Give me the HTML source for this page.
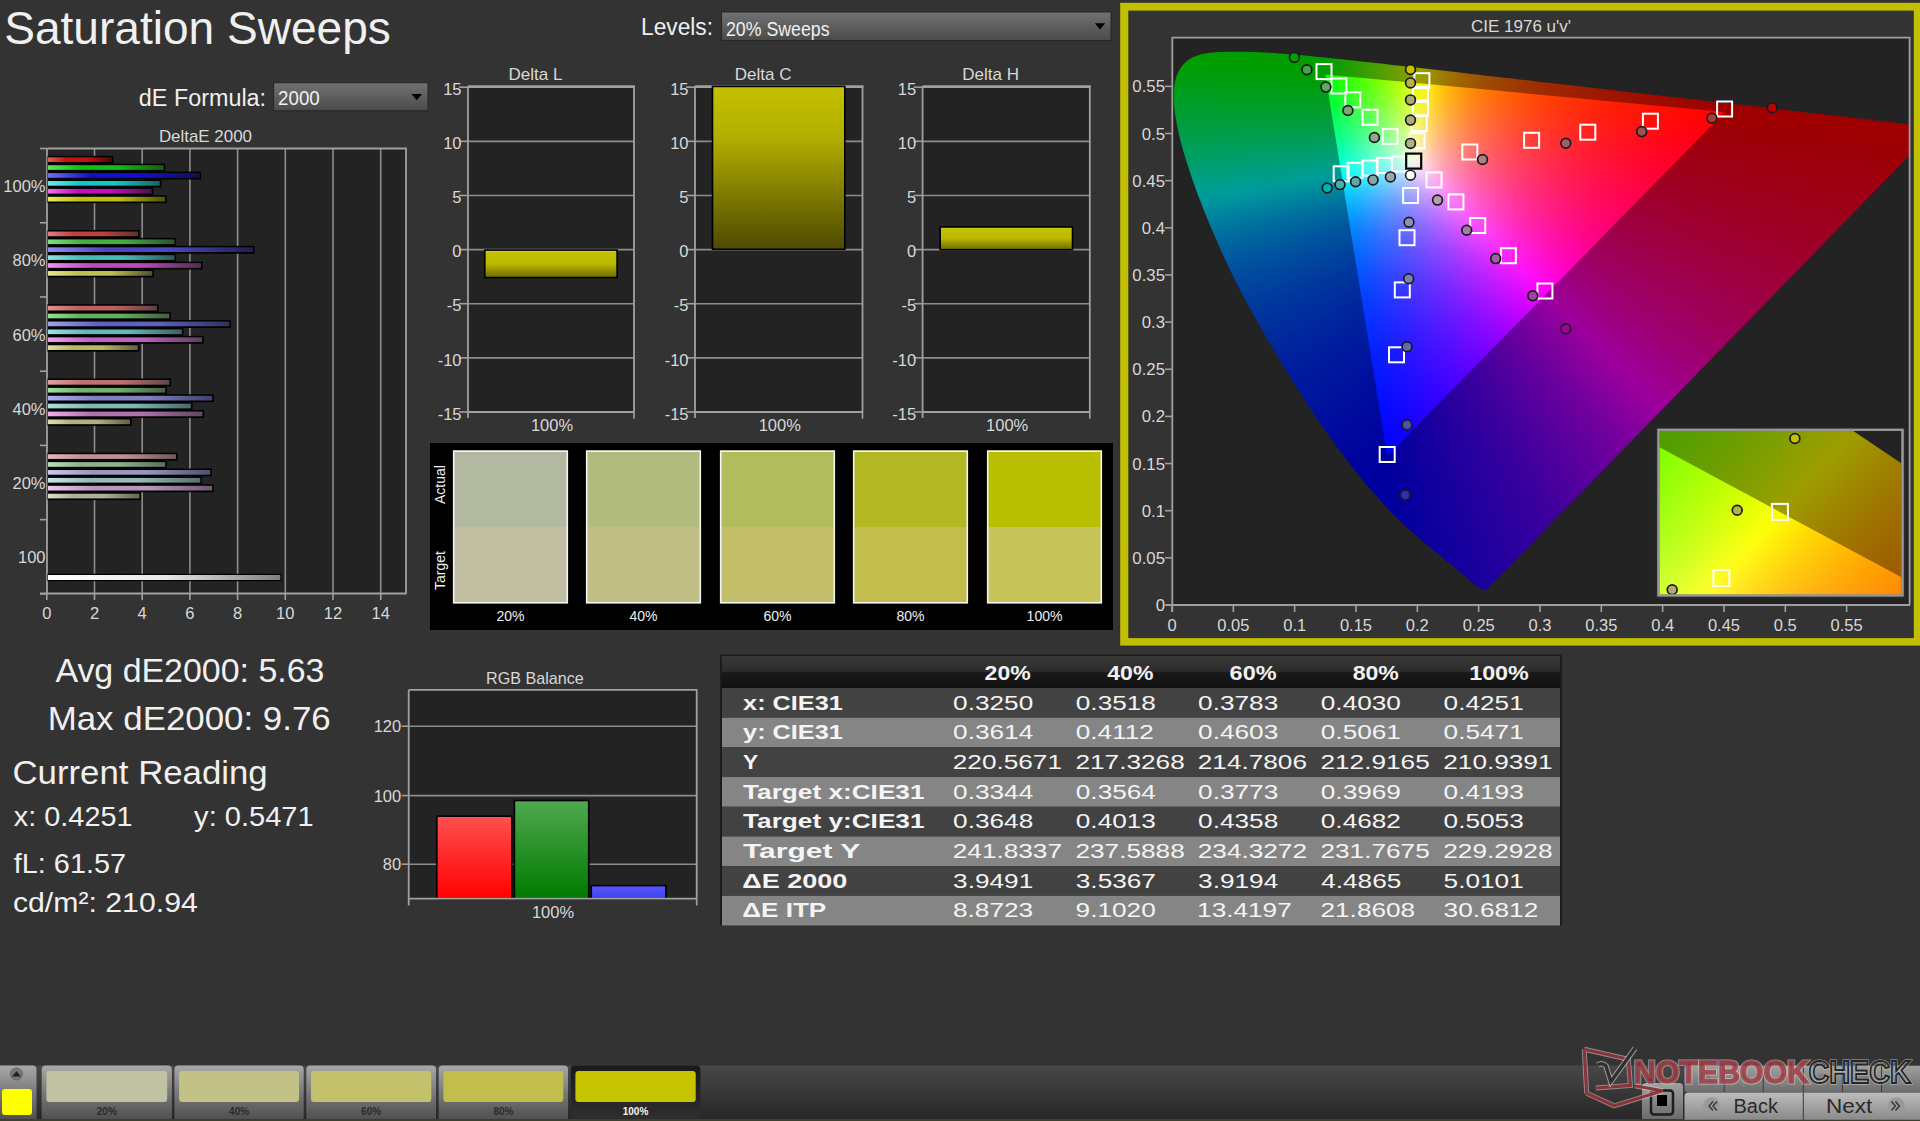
<!DOCTYPE html><html><head><meta charset="utf-8"><title>Saturation Sweeps</title><style>.c16 rect{width:16px;height:16px}.c12 rect{width:12px;height:12px}.c10 rect{width:10px;height:10px}html,body{margin:0;padding:0;background:#333333;width:1920px;height:1121px;overflow:hidden}body{font-family:"Liberation Sans", sans-serif}</style></head><body><svg width="1920" height="1121" viewBox="0 0 1920 1121" style='position:absolute;left:0;top:0;font-family:"Liberation Sans", sans-serif'><defs><linearGradient id="gDrop" x1="0" y1="0" x2="0" y2="1"><stop offset="0" stop-color="#727272"/><stop offset="1" stop-color="#4a4a4a"/></linearGradient><linearGradient id="gb00"><stop offset="0" stop-color="#e06060"/><stop offset="0.28" stop-color="#c81010"/><stop offset="0.6" stop-color="#c81010"/><stop offset="1" stop-color="#500505"/></linearGradient><linearGradient id="gb01"><stop offset="0" stop-color="#60e060"/><stop offset="0.28" stop-color="#10c010"/><stop offset="0.6" stop-color="#10c010"/><stop offset="1" stop-color="#106010"/></linearGradient><linearGradient id="gb02"><stop offset="0" stop-color="#7070f0"/><stop offset="0.28" stop-color="#1010d0"/><stop offset="0.6" stop-color="#1010d0"/><stop offset="1" stop-color="#101050"/></linearGradient><linearGradient id="gb03"><stop offset="0" stop-color="#70e8e8"/><stop offset="0.28" stop-color="#10c8c8"/><stop offset="0.6" stop-color="#10c8c8"/><stop offset="1" stop-color="#106868"/></linearGradient><linearGradient id="gb04"><stop offset="0" stop-color="#f070f0"/><stop offset="0.28" stop-color="#c010c0"/><stop offset="0.6" stop-color="#c010c0"/><stop offset="1" stop-color="#501050"/></linearGradient><linearGradient id="gb05"><stop offset="0" stop-color="#e8e860"/><stop offset="0.28" stop-color="#c0c010"/><stop offset="0.6" stop-color="#c0c010"/><stop offset="1" stop-color="#505010"/></linearGradient><linearGradient id="gb10"><stop offset="0" stop-color="#e08080"/><stop offset="0.28" stop-color="#c04040"/><stop offset="0.6" stop-color="#c04040"/><stop offset="1" stop-color="#603030"/></linearGradient><linearGradient id="gb11"><stop offset="0" stop-color="#80e080"/><stop offset="0.28" stop-color="#40b040"/><stop offset="0.6" stop-color="#40b040"/><stop offset="1" stop-color="#305030"/></linearGradient><linearGradient id="gb12"><stop offset="0" stop-color="#9090f0"/><stop offset="0.28" stop-color="#4848c0"/><stop offset="0.6" stop-color="#4848c0"/><stop offset="1" stop-color="#202050"/></linearGradient><linearGradient id="gb13"><stop offset="0" stop-color="#90e0e0"/><stop offset="0.28" stop-color="#48b8b8"/><stop offset="0.6" stop-color="#48b8b8"/><stop offset="1" stop-color="#305858"/></linearGradient><linearGradient id="gb14"><stop offset="0" stop-color="#f090f0"/><stop offset="0.28" stop-color="#c048c0"/><stop offset="0.6" stop-color="#c048c0"/><stop offset="1" stop-color="#503050"/></linearGradient><linearGradient id="gb15"><stop offset="0" stop-color="#e8e890"/><stop offset="0.28" stop-color="#c0c050"/><stop offset="0.6" stop-color="#c0c050"/><stop offset="1" stop-color="#505030"/></linearGradient><linearGradient id="gb20"><stop offset="0" stop-color="#e09090"/><stop offset="0.28" stop-color="#c06060"/><stop offset="0.6" stop-color="#c06060"/><stop offset="1" stop-color="#604040"/></linearGradient><linearGradient id="gb21"><stop offset="0" stop-color="#90e090"/><stop offset="0.28" stop-color="#60b060"/><stop offset="0.6" stop-color="#60b060"/><stop offset="1" stop-color="#406040"/></linearGradient><linearGradient id="gb22"><stop offset="0" stop-color="#a0a0f0"/><stop offset="0.28" stop-color="#6060c0"/><stop offset="0.6" stop-color="#6060c0"/><stop offset="1" stop-color="#303060"/></linearGradient><linearGradient id="gb23"><stop offset="0" stop-color="#a0e0e0"/><stop offset="0.28" stop-color="#60b8b8"/><stop offset="0.6" stop-color="#60b8b8"/><stop offset="1" stop-color="#406060"/></linearGradient><linearGradient id="gb24"><stop offset="0" stop-color="#f0a0f0"/><stop offset="0.28" stop-color="#c060c0"/><stop offset="0.6" stop-color="#c060c0"/><stop offset="1" stop-color="#604060"/></linearGradient><linearGradient id="gb25"><stop offset="0" stop-color="#e0e0a0"/><stop offset="0.28" stop-color="#b8b860"/><stop offset="0.6" stop-color="#b8b860"/><stop offset="1" stop-color="#606040"/></linearGradient><linearGradient id="gb30"><stop offset="0" stop-color="#e0a0a0"/><stop offset="0.28" stop-color="#c07070"/><stop offset="0.6" stop-color="#c07070"/><stop offset="1" stop-color="#604848"/></linearGradient><linearGradient id="gb31"><stop offset="0" stop-color="#a0e0a0"/><stop offset="0.28" stop-color="#70b070"/><stop offset="0.6" stop-color="#70b070"/><stop offset="1" stop-color="#486048"/></linearGradient><linearGradient id="gb32"><stop offset="0" stop-color="#b0b0f0"/><stop offset="0.28" stop-color="#8080c0"/><stop offset="0.6" stop-color="#8080c0"/><stop offset="1" stop-color="#404070"/></linearGradient><linearGradient id="gb33"><stop offset="0" stop-color="#b0e0e0"/><stop offset="0.28" stop-color="#80b8b8"/><stop offset="0.6" stop-color="#80b8b8"/><stop offset="1" stop-color="#486868"/></linearGradient><linearGradient id="gb34"><stop offset="0" stop-color="#f0b0f0"/><stop offset="0.28" stop-color="#b070b0"/><stop offset="0.6" stop-color="#b070b0"/><stop offset="1" stop-color="#604860"/></linearGradient><linearGradient id="gb35"><stop offset="0" stop-color="#e0e0b0"/><stop offset="0.28" stop-color="#b0b080"/><stop offset="0.6" stop-color="#b0b080"/><stop offset="1" stop-color="#606048"/></linearGradient><linearGradient id="gb40"><stop offset="0" stop-color="#e0b8b8"/><stop offset="0.28" stop-color="#c09090"/><stop offset="0.6" stop-color="#c09090"/><stop offset="1" stop-color="#705858"/></linearGradient><linearGradient id="gb41"><stop offset="0" stop-color="#b8e0b8"/><stop offset="0.28" stop-color="#90b090"/><stop offset="0.6" stop-color="#90b090"/><stop offset="1" stop-color="#587058"/></linearGradient><linearGradient id="gb42"><stop offset="0" stop-color="#c8c8f0"/><stop offset="0.28" stop-color="#9898c0"/><stop offset="0.6" stop-color="#9898c0"/><stop offset="1" stop-color="#505070"/></linearGradient><linearGradient id="gb43"><stop offset="0" stop-color="#c8e8e8"/><stop offset="0.28" stop-color="#98b8b8"/><stop offset="0.6" stop-color="#98b8b8"/><stop offset="1" stop-color="#587070"/></linearGradient><linearGradient id="gb44"><stop offset="0" stop-color="#f0c8f0"/><stop offset="0.28" stop-color="#b898b8"/><stop offset="0.6" stop-color="#b898b8"/><stop offset="1" stop-color="#705870"/></linearGradient><linearGradient id="gb45"><stop offset="0" stop-color="#e0e0c8"/><stop offset="0.28" stop-color="#b0b098"/><stop offset="0.6" stop-color="#b0b098"/><stop offset="1" stop-color="#686850"/></linearGradient><linearGradient id="gbw"><stop offset="0" stop-color="#ffffff"/><stop offset="0.5" stop-color="#e8e8e8"/><stop offset="1" stop-color="#808080"/></linearGradient><linearGradient id="gy" x1="0" y1="0" x2="0" y2="1"><stop offset="0" stop-color="#dcd850"/><stop offset="0.1" stop-color="#c4c000"/><stop offset="0.5" stop-color="#bcb800"/><stop offset="1" stop-color="#6c6800"/></linearGradient><linearGradient id="gyc" x1="0" y1="0" x2="0" y2="1"><stop offset="0" stop-color="#c4c000"/><stop offset="0.3" stop-color="#b4b000"/><stop offset="1" stop-color="#4e4a00"/></linearGradient><clipPath id="cLoc"><polygon points="1487.0,589.4 1487.0,589.4 1486.9,589.4 1486.9,589.4 1486.8,589.5 1486.8,589.5 1486.7,589.6 1486.6,589.6 1486.5,589.7 1486.4,589.7 1486.3,589.7 1486.2,589.8 1486.1,589.8 1486.0,589.9 1485.9,589.9 1485.8,589.9 1485.6,590.0 1485.5,590.0 1485.4,590.0 1485.2,590.0 1485.0,590.1 1484.9,590.1 1484.7,590.1 1484.5,590.0 1484.2,590.0 1483.9,589.9 1483.6,589.8 1483.3,589.8 1482.9,589.7 1482.5,589.5 1482.1,589.4 1481.7,589.3 1481.4,589.1 1481.0,588.9 1480.6,588.7 1480.2,588.4 1479.9,588.2 1479.5,587.9 1479.1,587.6 1478.6,587.3 1478.2,587.0 1477.7,586.6 1477.2,586.3 1476.7,585.9 1476.2,585.5 1475.7,585.1 1475.1,584.6 1474.5,584.2 1473.9,583.7 1473.2,583.1 1472.5,582.6 1471.8,582.0 1471.0,581.4 1470.2,580.7 1469.4,580.1 1468.6,579.4 1467.7,578.6 1466.8,577.9 1465.9,577.1 1465.0,576.3 1464.0,575.5 1463.0,574.7 1462.0,573.8 1461.0,572.9 1459.9,572.0 1458.8,571.1 1457.6,570.1 1456.4,569.1 1455.2,568.1 1454.0,567.1 1452.7,566.1 1451.4,565.0 1450.0,563.8 1448.5,562.6 1447.0,561.4 1445.5,560.1 1443.9,558.8 1442.2,557.5 1440.5,556.1 1438.8,554.6 1437.0,553.2 1435.2,551.7 1433.4,550.2 1431.5,548.7 1429.6,547.1 1427.6,545.5 1425.6,543.8 1423.6,542.0 1421.4,540.1 1419.2,538.2 1417.0,536.3 1414.7,534.2 1412.3,532.1 1409.9,530.0 1407.4,527.7 1404.9,525.3 1402.3,522.9 1399.6,520.3 1397.0,517.7 1394.2,515.1 1391.5,512.4 1388.6,509.5 1385.6,506.4 1382.5,503.0 1379.3,499.4 1375.8,495.6 1372.3,491.5 1368.6,487.2 1364.8,482.7 1360.9,478.0 1356.9,473.1 1352.9,468.0 1348.7,462.6 1344.5,457.1 1340.2,451.3 1335.7,445.3 1331.2,439.1 1326.7,432.7 1322.0,426.0 1317.4,419.3 1312.7,412.3 1307.9,405.1 1303.1,397.6 1298.2,389.9 1293.2,382.0 1288.3,374.0 1283.3,365.9 1278.4,357.8 1273.6,349.6 1268.8,341.4 1263.9,333.0 1259.0,324.5 1254.2,315.9 1249.4,307.3 1244.7,298.7 1240.2,290.2 1235.9,281.8 1231.8,273.5 1227.8,265.2 1223.9,256.8 1220.1,248.5 1216.5,240.3 1213.0,232.3 1209.7,224.4 1206.5,216.8 1203.5,209.3 1200.7,202.0 1197.9,194.9 1195.4,187.8 1192.9,181.0 1190.7,174.4 1188.6,168.0 1186.6,161.9 1184.8,156.1 1183.1,150.5 1181.7,145.1 1180.3,139.9 1179.1,134.9 1178.1,130.2 1177.1,125.6 1176.3,121.2 1175.5,117.0 1174.9,113.0 1174.5,109.2 1174.1,105.7 1173.9,102.2 1173.8,99.0 1173.7,95.8 1173.8,92.8 1173.9,89.9 1174.2,87.1 1174.5,84.5 1175.0,82.0 1175.5,79.7 1176.2,77.5 1176.9,75.3 1177.7,73.3 1178.6,71.4 1179.6,69.6 1180.6,67.9 1181.8,66.3 1183.0,64.8 1184.3,63.4 1185.7,62.1 1187.1,60.9 1188.5,59.8 1190.1,58.8 1191.7,57.9 1193.3,57.1 1195.0,56.4 1196.8,55.8 1198.5,55.2 1200.4,54.6 1202.2,54.1 1204.1,53.7 1206.0,53.4 1208.0,53.1 1210.0,52.8 1212.1,52.6 1214.1,52.4 1216.2,52.3 1218.3,52.1 1220.4,52.0 1222.5,51.9 1224.7,51.8 1226.9,51.8 1229.0,51.7 1231.2,51.7 1233.4,51.7 1235.6,51.7 1237.7,51.7 1239.9,51.7 1242.1,51.7 1244.3,51.7 1246.5,51.8 1248.7,51.8 1250.9,51.9 1253.2,52.0 1255.4,52.1 1257.6,52.2 1259.9,52.3 1262.2,52.4 1264.5,52.5 1266.8,52.6 1269.2,52.8 1271.6,52.9 1274.0,53.1 1276.4,53.2 1278.8,53.4 1281.3,53.6 1283.8,53.8 1286.3,54.0 1288.9,54.2 1291.4,54.4 1294.0,54.6 1296.7,54.8 1299.3,55.1 1302.0,55.3 1304.7,55.6 1307.5,55.8 1310.2,56.1 1313.1,56.4 1315.9,56.7 1318.8,56.9 1321.7,57.2 1324.6,57.5 1327.6,57.8 1330.7,58.2 1333.7,58.5 1336.9,58.8 1340.0,59.1 1343.2,59.5 1346.4,59.8 1349.7,60.2 1353.0,60.5 1356.4,60.9 1359.8,61.3 1363.2,61.7 1366.7,62.0 1370.3,62.4 1373.8,62.8 1377.5,63.2 1381.1,63.6 1384.8,64.1 1388.6,64.5 1392.4,64.9 1396.3,65.4 1400.2,65.8 1404.2,66.2 1408.2,66.7 1412.2,67.2 1416.3,67.6 1420.5,68.1 1424.7,68.6 1429.0,69.1 1433.3,69.5 1437.6,70.0 1442.0,70.6 1446.5,71.1 1451.0,71.6 1455.6,72.1 1460.2,72.6 1464.8,73.2 1469.5,73.7 1474.3,74.3 1479.1,74.8 1483.9,75.4 1488.8,75.9 1493.8,76.5 1498.8,77.1 1503.8,77.7 1508.9,78.2 1514.1,78.8 1519.3,79.4 1524.5,80.0 1529.7,80.6 1535.0,81.2 1540.4,81.9 1545.7,82.5 1551.2,83.1 1556.6,83.7 1562.1,84.3 1567.6,85.0 1573.1,85.6 1578.7,86.2 1584.2,86.9 1589.8,87.5 1595.4,88.2 1601.1,88.8 1606.7,89.5 1612.3,90.1 1617.9,90.8 1623.5,91.4 1629.0,92.1 1634.4,92.7 1639.9,93.3 1645.3,93.9 1650.8,94.6 1656.2,95.2 1661.5,95.8 1666.9,96.4 1672.3,97.0 1677.6,97.6 1683.0,98.3 1688.4,98.9 1693.7,99.5 1698.9,100.1 1704.1,100.7 1709.2,101.3 1714.2,101.8 1719.1,102.4 1724.0,103.0 1728.9,103.5 1733.6,104.0 1738.3,104.6 1742.9,105.1 1747.5,105.6 1752.0,106.1 1756.4,106.6 1760.7,107.1 1765.0,107.6 1769.2,108.1 1773.3,108.6 1777.4,109.1 1781.3,109.5 1785.1,110.0 1788.5,110.4 1791.8,110.7 1795.1,111.1 1798.4,111.5 1802.0,111.9 1805.8,112.4 1810.1,112.9 1815.0,113.4 1820.4,114.0 1826.2,114.7 1832.1,115.4 1838.1,116.1 1844.0,116.7 1849.5,117.4 1854.6,118.0 1859.3,118.5 1863.8,119.0 1868.2,119.5 1872.3,120.0 1876.3,120.5 1880.1,120.9 1883.7,121.3 1887.2,121.7 1890.4,122.1 1893.5,122.4 1896.4,122.8 1899.1,123.1 1901.7,123.4 1904.1,123.6 1906.4,123.9 1908.6,124.1 1910.6,124.4 1912.4,124.6 1914.1,124.8 1915.6,124.9 1917.0,125.1 1918.4,125.3 1919.9,125.4 1921.3,125.6 1922.8,125.8 1924.3,126.0 1925.9,126.1 1927.4,126.3 1928.8,126.5 1930.1,126.6 1931.3,126.8 1932.4,126.9 1933.3,127.0 1934.0,127.1 1934.7,127.1 1935.2,127.2 1935.7,127.3 1936.0,127.3 1936.4,127.3 1936.7,127.4"/></clipPath><clipPath id="cTri"><polygon points="1724.8,111.9 1325.3,74.6 1387.2,456.1"/></clipPath><clipPath id="cPlot"><rect x="1173.5" y="38.5" width="735.5" height="565.5"/></clipPath><filter id="fb16" x="-5%" y="-5%" width="110%" height="110%" color-interpolation-filters="sRGB"><feGaussianBlur stdDeviation="6"/></filter><filter id="fb12" x="-5%" y="-5%" width="110%" height="110%" color-interpolation-filters="sRGB"><feGaussianBlur stdDeviation="6"/></filter><clipPath id="cIn"><rect x="1659.5" y="430.8" width="242" height="163.6"/></clipPath><clipPath id="cInLoc"><polygon points="1142.4,1392.4 1141.6,1392.6 1140.3,1392.8 1138.5,1392.8 1135.4,1392.3 1132.5,1391.0 1128.9,1389.1 1123.7,1386.1 1117.2,1382.0 1108.6,1376.9 1096.9,1370.1 1082.3,1361.3 1064.1,1349.0 1042.0,1331.0 1012.4,1299.5 974.7,1248.5 927.1,1167.7 868.3,1048.0 807.8,882.0 750.8,674.9 711.0,453.6 699.9,248.8 725.9,80.9 790.9,-27.9 882.9,-66.3 986.6,-52.9 1091.9,-17.2 1191.3,25.6 1286.7,73.7 1380.8,126.5 1473.9,182.8 1566.7,241.6 1659.8,302.1 1752.3,363.5 1844.4,425.0 1934.6,485.7 2022.2,544.8 2106.2,601.5 2185.2,654.6 2257.3,703.4 2319.9,745.6 2375.0,782.8 2420.8,813.4 2458.0,838.6 2487.6,858.6 2530.3,887.3 2559.1,906.8 2577.3,919.0 2587.7,926.0 2596.6,932.0 2599.9,934.3"/></clipPath><clipPath id="cInTri"><polygon points="2353.7,820.4 1469.7,345.2 1079.7,1295.6"/></clipPath><linearGradient id="gr" x1="0" y1="0" x2="0" y2="1"><stop offset="0" stop-color="#ff5050"/><stop offset="1" stop-color="#ff0000"/></linearGradient><linearGradient id="gg" x1="0" y1="0" x2="0" y2="1"><stop offset="0" stop-color="#50a850"/><stop offset="1" stop-color="#007a00"/></linearGradient><linearGradient id="gbb" x1="0" y1="0" x2="0" y2="1"><stop offset="0" stop-color="#5a5aff"/><stop offset="1" stop-color="#4040f0"/></linearGradient><linearGradient id="gth" x1="0" y1="0" x2="0" y2="1"><stop offset="0" stop-color="#383838"/><stop offset="0.48" stop-color="#2c2c2c"/><stop offset="0.52" stop-color="#181818"/><stop offset="1" stop-color="#121212"/></linearGradient><linearGradient id="gbar" x1="0" y1="0" x2="0" y2="1"><stop offset="0" stop-color="#474747"/><stop offset="1" stop-color="#262626"/></linearGradient><linearGradient id="gtile" x1="0" y1="0" x2="0" y2="1"><stop offset="0" stop-color="#a8a8a8"/><stop offset="0.5" stop-color="#7a7a7a"/><stop offset="1" stop-color="#505050"/></linearGradient><linearGradient id="gtsel" x1="0" y1="0" x2="0" y2="1"><stop offset="0" stop-color="#1a1a1a"/><stop offset="1" stop-color="#2e2e2e"/></linearGradient><linearGradient id="gbtn1" x1="0" y1="0" x2="0" y2="1"><stop offset="0" stop-color="#a0a0a0"/><stop offset="1" stop-color="#6c6c6c"/></linearGradient><linearGradient id="gbtn2" x1="0" y1="0" x2="0" y2="1"><stop offset="0" stop-color="#bcbcbc"/><stop offset="1" stop-color="#8a8a8a"/></linearGradient><radialGradient id="gcirc"><stop offset="0" stop-color="#8a8a8a"/><stop offset="0.7" stop-color="#7a7a7a"/><stop offset="1" stop-color="#6a6a6a" stop-opacity="0"/></radialGradient></defs><text x="4.2" y="44.2" font-size="47" fill="#f0f0f0" textLength="386.7" lengthAdjust="spacingAndGlyphs">Saturation Sweeps</text>
<text x="641.1" y="34.8" font-size="24.2" fill="#f0f0f0" textLength="71.9" lengthAdjust="spacingAndGlyphs">Levels:</text>
<rect x="721.50" y="12.00" width="389.50" height="28.50" fill="url(#gDrop)" stroke="#262626" stroke-width="1"/>
<text x="726.0" y="35.7" font-size="19.3" fill="#f0f0f0" textLength="103.5" lengthAdjust="spacingAndGlyphs">20% Sweeps</text>
<polygon points="1094.8,23.2 1105.2,23.2 1100,29.6" fill="#000"/>
<text x="138.8" y="105.5" font-size="23.5" fill="#f0f0f0" textLength="127.3" lengthAdjust="spacingAndGlyphs">dE Formula:</text>
<rect x="273.60" y="82.80" width="154.40" height="28.00" fill="url(#gDrop)" stroke="#262626" stroke-width="1"/>
<text x="278.1" y="105.3" font-size="19.3" fill="#f0f0f0" textLength="41.6" lengthAdjust="spacingAndGlyphs">2000</text>
<polygon points="411.5,94 422,94 416.75,100.3" fill="#000"/>
<text x="158.9" y="142.3" font-size="17" fill="#d8d8d8" textLength="93.1" lengthAdjust="spacingAndGlyphs">DeltaE 2000</text>
<rect x="47.00" y="148.50" width="359.50" height="445.00" fill="#232323"/>
<line x1="94.50" y1="148.50" x2="94.50" y2="593.50" stroke="#8c8c8c" stroke-width="1.6"/>
<line x1="142.20" y1="148.50" x2="142.20" y2="593.50" stroke="#8c8c8c" stroke-width="1.6"/>
<line x1="189.90" y1="148.50" x2="189.90" y2="593.50" stroke="#8c8c8c" stroke-width="1.6"/>
<line x1="237.60" y1="148.50" x2="237.60" y2="593.50" stroke="#8c8c8c" stroke-width="1.6"/>
<line x1="285.30" y1="148.50" x2="285.30" y2="593.50" stroke="#8c8c8c" stroke-width="1.6"/>
<line x1="333.00" y1="148.50" x2="333.00" y2="593.50" stroke="#8c8c8c" stroke-width="1.6"/>
<line x1="380.70" y1="148.50" x2="380.70" y2="593.50" stroke="#8c8c8c" stroke-width="1.6"/>
<path d="M47.5,148.5 H406 V593.5" fill="none" stroke="#a0a0a0" stroke-width="1.8"/>
<line x1="47.00" y1="148.00" x2="47.00" y2="594.00" stroke="#a0a0a0" stroke-width="1.8"/>
<line x1="40.00" y1="593.50" x2="406.50" y2="593.50" stroke="#a0a0a0" stroke-width="1.8"/>
<line x1="40.00" y1="148.50" x2="47.00" y2="148.50" stroke="#a0a0a0" stroke-width="1.6"/>
<line x1="40.00" y1="222.73" x2="47.00" y2="222.73" stroke="#a0a0a0" stroke-width="1.6"/>
<line x1="40.00" y1="296.96" x2="47.00" y2="296.96" stroke="#a0a0a0" stroke-width="1.6"/>
<line x1="40.00" y1="371.19" x2="47.00" y2="371.19" stroke="#a0a0a0" stroke-width="1.6"/>
<line x1="40.00" y1="445.42" x2="47.00" y2="445.42" stroke="#a0a0a0" stroke-width="1.6"/>
<line x1="40.00" y1="519.65" x2="47.00" y2="519.65" stroke="#a0a0a0" stroke-width="1.6"/>
<line x1="40.00" y1="593.88" x2="47.00" y2="593.88" stroke="#a0a0a0" stroke-width="1.6"/>
<line x1="46.80" y1="593.50" x2="46.80" y2="600.00" stroke="#a0a0a0" stroke-width="1.6"/>
<text x="46.8" y="619.0" font-size="16.5" fill="#d8d8d8" text-anchor="middle">0</text>
<line x1="94.50" y1="593.50" x2="94.50" y2="600.00" stroke="#a0a0a0" stroke-width="1.6"/>
<text x="94.5" y="619.0" font-size="16.5" fill="#d8d8d8" text-anchor="middle">2</text>
<line x1="142.20" y1="593.50" x2="142.20" y2="600.00" stroke="#a0a0a0" stroke-width="1.6"/>
<text x="142.2" y="619.0" font-size="16.5" fill="#d8d8d8" text-anchor="middle">4</text>
<line x1="189.90" y1="593.50" x2="189.90" y2="600.00" stroke="#a0a0a0" stroke-width="1.6"/>
<text x="189.9" y="619.0" font-size="16.5" fill="#d8d8d8" text-anchor="middle">6</text>
<line x1="237.60" y1="593.50" x2="237.60" y2="600.00" stroke="#a0a0a0" stroke-width="1.6"/>
<text x="237.6" y="619.0" font-size="16.5" fill="#d8d8d8" text-anchor="middle">8</text>
<line x1="285.30" y1="593.50" x2="285.30" y2="600.00" stroke="#a0a0a0" stroke-width="1.6"/>
<text x="285.3" y="619.0" font-size="16.5" fill="#d8d8d8" text-anchor="middle">10</text>
<line x1="333.00" y1="593.50" x2="333.00" y2="600.00" stroke="#a0a0a0" stroke-width="1.6"/>
<text x="333.0" y="619.0" font-size="16.5" fill="#d8d8d8" text-anchor="middle">12</text>
<line x1="380.70" y1="593.50" x2="380.70" y2="600.00" stroke="#a0a0a0" stroke-width="1.6"/>
<text x="380.7" y="619.0" font-size="16.5" fill="#d8d8d8" text-anchor="middle">14</text>
<text x="45.5" y="192.0" font-size="16.5" fill="#d8d8d8" text-anchor="end">100%</text>
<text x="45.5" y="266.2" font-size="16.5" fill="#d8d8d8" text-anchor="end">80%</text>
<text x="45.5" y="340.6" font-size="16.5" fill="#d8d8d8" text-anchor="end">60%</text>
<text x="45.5" y="414.9" font-size="16.5" fill="#d8d8d8" text-anchor="end">40%</text>
<text x="45.5" y="489.1" font-size="16.5" fill="#d8d8d8" text-anchor="end">20%</text>
<text x="45.5" y="563.4" font-size="16.5" fill="#d8d8d8" text-anchor="end">100</text>
<rect x="47.50" y="155.80" width="65.80" height="7.90" fill="#000"/>
<rect x="48.00" y="157.30" width="63.70" height="4.70" fill="url(#gb00)"/>
<rect x="47.50" y="163.70" width="117.80" height="7.90" fill="#000"/>
<rect x="48.00" y="165.20" width="115.70" height="4.70" fill="url(#gb01)"/>
<rect x="47.50" y="171.60" width="153.70" height="7.90" fill="#000"/>
<rect x="48.00" y="173.10" width="151.60" height="4.70" fill="url(#gb02)"/>
<rect x="47.50" y="179.50" width="113.80" height="7.90" fill="#000"/>
<rect x="48.00" y="181.00" width="111.70" height="4.70" fill="url(#gb03)"/>
<rect x="47.50" y="187.40" width="105.80" height="7.90" fill="#000"/>
<rect x="48.00" y="188.90" width="103.70" height="4.70" fill="url(#gb04)"/>
<rect x="47.50" y="195.30" width="119.20" height="7.90" fill="#000"/>
<rect x="48.00" y="196.80" width="117.10" height="4.70" fill="url(#gb05)"/>
<rect x="47.50" y="230.03" width="92.10" height="7.90" fill="#000"/>
<rect x="48.00" y="231.53" width="90.00" height="4.70" fill="url(#gb10)"/>
<rect x="47.50" y="237.93" width="128.60" height="7.90" fill="#000"/>
<rect x="48.00" y="239.43" width="126.50" height="4.70" fill="url(#gb11)"/>
<rect x="47.50" y="245.83" width="207.10" height="7.90" fill="#000"/>
<rect x="48.00" y="247.33" width="205.00" height="4.70" fill="url(#gb12)"/>
<rect x="47.50" y="253.73" width="128.60" height="7.90" fill="#000"/>
<rect x="48.00" y="255.23" width="126.50" height="4.70" fill="url(#gb13)"/>
<rect x="47.50" y="261.63" width="155.10" height="7.90" fill="#000"/>
<rect x="48.00" y="263.13" width="153.00" height="4.70" fill="url(#gb14)"/>
<rect x="47.50" y="269.53" width="106.40" height="7.90" fill="#000"/>
<rect x="48.00" y="271.03" width="104.30" height="4.70" fill="url(#gb15)"/>
<rect x="47.50" y="304.26" width="111.10" height="7.90" fill="#000"/>
<rect x="48.00" y="305.76" width="109.00" height="4.70" fill="url(#gb20)"/>
<rect x="47.50" y="312.16" width="123.50" height="7.90" fill="#000"/>
<rect x="48.00" y="313.66" width="121.40" height="4.70" fill="url(#gb21)"/>
<rect x="47.50" y="320.06" width="183.50" height="7.90" fill="#000"/>
<rect x="48.00" y="321.56" width="181.40" height="4.70" fill="url(#gb22)"/>
<rect x="47.50" y="327.96" width="135.90" height="7.90" fill="#000"/>
<rect x="48.00" y="329.46" width="133.80" height="4.70" fill="url(#gb23)"/>
<rect x="47.50" y="335.86" width="156.30" height="7.90" fill="#000"/>
<rect x="48.00" y="337.36" width="154.20" height="4.70" fill="url(#gb24)"/>
<rect x="47.50" y="343.76" width="92.00" height="7.90" fill="#000"/>
<rect x="48.00" y="345.26" width="89.90" height="4.70" fill="url(#gb25)"/>
<rect x="47.50" y="378.49" width="123.50" height="7.90" fill="#000"/>
<rect x="48.00" y="379.99" width="121.40" height="4.70" fill="url(#gb30)"/>
<rect x="47.50" y="386.39" width="119.30" height="7.90" fill="#000"/>
<rect x="48.00" y="387.89" width="117.20" height="4.70" fill="url(#gb31)"/>
<rect x="47.50" y="394.29" width="166.30" height="7.90" fill="#000"/>
<rect x="48.00" y="395.79" width="164.20" height="4.70" fill="url(#gb32)"/>
<rect x="47.50" y="402.19" width="145.00" height="7.90" fill="#000"/>
<rect x="48.00" y="403.69" width="142.90" height="4.70" fill="url(#gb33)"/>
<rect x="47.50" y="410.09" width="156.60" height="7.90" fill="#000"/>
<rect x="48.00" y="411.59" width="154.50" height="4.70" fill="url(#gb34)"/>
<rect x="47.50" y="417.99" width="84.10" height="7.90" fill="#000"/>
<rect x="48.00" y="419.49" width="82.00" height="4.70" fill="url(#gb35)"/>
<rect x="47.50" y="452.72" width="130.10" height="7.90" fill="#000"/>
<rect x="48.00" y="454.22" width="128.00" height="4.70" fill="url(#gb40)"/>
<rect x="47.50" y="460.62" width="119.30" height="7.90" fill="#000"/>
<rect x="48.00" y="462.12" width="117.20" height="4.70" fill="url(#gb41)"/>
<rect x="47.50" y="468.52" width="164.40" height="7.90" fill="#000"/>
<rect x="48.00" y="470.02" width="162.30" height="4.70" fill="url(#gb42)"/>
<rect x="47.50" y="476.42" width="154.40" height="7.90" fill="#000"/>
<rect x="48.00" y="477.92" width="152.30" height="4.70" fill="url(#gb43)"/>
<rect x="47.50" y="484.32" width="166.30" height="7.90" fill="#000"/>
<rect x="48.00" y="485.82" width="164.20" height="4.70" fill="url(#gb44)"/>
<rect x="47.50" y="492.22" width="93.50" height="7.90" fill="#000"/>
<rect x="48.00" y="493.72" width="91.40" height="4.70" fill="url(#gb45)"/>
<rect x="47.50" y="573.80" width="234.00" height="7.40" fill="#000"/>
<rect x="48.00" y="575.00" width="232.30" height="5.00" fill="url(#gbw)"/>
<text x="535.5" y="80.0" font-size="17" fill="#d8d8d8" text-anchor="middle">Delta L</text>
<rect x="468.00" y="86.40" width="166.00" height="325.90" fill="#232323"/>
<line x1="459.00" y1="87.20" x2="468.00" y2="87.20" stroke="#a0a0a0" stroke-width="1.6"/>
<text x="461.5" y="94.8" font-size="16.5" fill="#d8d8d8" text-anchor="end">15</text>
<line x1="468.00" y1="141.33" x2="634.00" y2="141.33" stroke="#8c8c8c" stroke-width="1.6"/>
<line x1="459.00" y1="141.33" x2="468.00" y2="141.33" stroke="#a0a0a0" stroke-width="1.6"/>
<text x="461.5" y="148.9" font-size="16.5" fill="#d8d8d8" text-anchor="end">10</text>
<line x1="468.00" y1="195.46" x2="634.00" y2="195.46" stroke="#8c8c8c" stroke-width="1.6"/>
<line x1="459.00" y1="195.46" x2="468.00" y2="195.46" stroke="#a0a0a0" stroke-width="1.6"/>
<text x="461.5" y="203.1" font-size="16.5" fill="#d8d8d8" text-anchor="end">5</text>
<line x1="468.00" y1="249.59" x2="634.00" y2="249.59" stroke="#8c8c8c" stroke-width="1.6"/>
<line x1="459.00" y1="249.59" x2="468.00" y2="249.59" stroke="#a0a0a0" stroke-width="1.6"/>
<text x="461.5" y="257.2" font-size="16.5" fill="#d8d8d8" text-anchor="end">0</text>
<line x1="468.00" y1="303.72" x2="634.00" y2="303.72" stroke="#8c8c8c" stroke-width="1.6"/>
<line x1="459.00" y1="303.72" x2="468.00" y2="303.72" stroke="#a0a0a0" stroke-width="1.6"/>
<text x="461.5" y="311.3" font-size="16.5" fill="#d8d8d8" text-anchor="end">-5</text>
<line x1="468.00" y1="357.85" x2="634.00" y2="357.85" stroke="#8c8c8c" stroke-width="1.6"/>
<line x1="459.00" y1="357.85" x2="468.00" y2="357.85" stroke="#a0a0a0" stroke-width="1.6"/>
<text x="461.5" y="365.5" font-size="16.5" fill="#d8d8d8" text-anchor="end">-10</text>
<line x1="459.00" y1="411.98" x2="468.00" y2="411.98" stroke="#a0a0a0" stroke-width="1.6"/>
<text x="461.5" y="419.6" font-size="16.5" fill="#d8d8d8" text-anchor="end">-15</text>
<path d="M468,87.2 H634 V412" fill="none" stroke="#a0a0a0" stroke-width="1.8"/>
<line x1="468.00" y1="86.60" x2="634.90" y2="86.60" stroke="#a0a0a0" stroke-width="2.6"/>
<line x1="468.00" y1="86.00" x2="468.00" y2="418.00" stroke="#a0a0a0" stroke-width="1.8"/>
<line x1="468.00" y1="412.00" x2="634.00" y2="412.00" stroke="#a0a0a0" stroke-width="1.8"/>
<line x1="634.00" y1="412.00" x2="634.00" y2="418.80" stroke="#a0a0a0" stroke-width="1.6"/>
<text x="552.0" y="430.5" font-size="16.5" fill="#d8d8d8" text-anchor="middle">100%</text>
<rect x="484.80" y="250.10" width="132.30" height="27.50" fill="url(#gy)" stroke="#000" stroke-width="1.6"/>
<text x="763.2" y="80.0" font-size="17" fill="#d8d8d8" text-anchor="middle">Delta C</text>
<rect x="695.00" y="86.40" width="167.50" height="325.90" fill="#232323"/>
<line x1="686.00" y1="87.20" x2="695.00" y2="87.20" stroke="#a0a0a0" stroke-width="1.6"/>
<text x="688.5" y="94.8" font-size="16.5" fill="#d8d8d8" text-anchor="end">15</text>
<line x1="695.00" y1="141.33" x2="862.50" y2="141.33" stroke="#8c8c8c" stroke-width="1.6"/>
<line x1="686.00" y1="141.33" x2="695.00" y2="141.33" stroke="#a0a0a0" stroke-width="1.6"/>
<text x="688.5" y="148.9" font-size="16.5" fill="#d8d8d8" text-anchor="end">10</text>
<line x1="695.00" y1="195.46" x2="862.50" y2="195.46" stroke="#8c8c8c" stroke-width="1.6"/>
<line x1="686.00" y1="195.46" x2="695.00" y2="195.46" stroke="#a0a0a0" stroke-width="1.6"/>
<text x="688.5" y="203.1" font-size="16.5" fill="#d8d8d8" text-anchor="end">5</text>
<line x1="695.00" y1="249.59" x2="862.50" y2="249.59" stroke="#8c8c8c" stroke-width="1.6"/>
<line x1="686.00" y1="249.59" x2="695.00" y2="249.59" stroke="#a0a0a0" stroke-width="1.6"/>
<text x="688.5" y="257.2" font-size="16.5" fill="#d8d8d8" text-anchor="end">0</text>
<line x1="695.00" y1="303.72" x2="862.50" y2="303.72" stroke="#8c8c8c" stroke-width="1.6"/>
<line x1="686.00" y1="303.72" x2="695.00" y2="303.72" stroke="#a0a0a0" stroke-width="1.6"/>
<text x="688.5" y="311.3" font-size="16.5" fill="#d8d8d8" text-anchor="end">-5</text>
<line x1="695.00" y1="357.85" x2="862.50" y2="357.85" stroke="#8c8c8c" stroke-width="1.6"/>
<line x1="686.00" y1="357.85" x2="695.00" y2="357.85" stroke="#a0a0a0" stroke-width="1.6"/>
<text x="688.5" y="365.5" font-size="16.5" fill="#d8d8d8" text-anchor="end">-10</text>
<line x1="686.00" y1="411.98" x2="695.00" y2="411.98" stroke="#a0a0a0" stroke-width="1.6"/>
<text x="688.5" y="419.6" font-size="16.5" fill="#d8d8d8" text-anchor="end">-15</text>
<path d="M695,87.2 H862.5 V412" fill="none" stroke="#a0a0a0" stroke-width="1.8"/>
<line x1="695.00" y1="86.60" x2="863.40" y2="86.60" stroke="#a0a0a0" stroke-width="2.6"/>
<line x1="695.00" y1="86.00" x2="695.00" y2="418.00" stroke="#a0a0a0" stroke-width="1.8"/>
<line x1="695.00" y1="412.00" x2="862.50" y2="412.00" stroke="#a0a0a0" stroke-width="1.8"/>
<line x1="862.50" y1="412.00" x2="862.50" y2="418.80" stroke="#a0a0a0" stroke-width="1.6"/>
<text x="779.8" y="430.5" font-size="16.5" fill="#d8d8d8" text-anchor="middle">100%</text>
<rect x="712.50" y="86.40" width="132.30" height="162.90" fill="url(#gyc)" stroke="#000" stroke-width="1.6"/>
<text x="990.7" y="80.0" font-size="17" fill="#d8d8d8" text-anchor="middle">Delta H</text>
<rect x="922.60" y="86.40" width="167.20" height="325.90" fill="#232323"/>
<line x1="913.60" y1="87.20" x2="922.60" y2="87.20" stroke="#a0a0a0" stroke-width="1.6"/>
<text x="916.1" y="94.8" font-size="16.5" fill="#d8d8d8" text-anchor="end">15</text>
<line x1="922.60" y1="141.33" x2="1089.80" y2="141.33" stroke="#8c8c8c" stroke-width="1.6"/>
<line x1="913.60" y1="141.33" x2="922.60" y2="141.33" stroke="#a0a0a0" stroke-width="1.6"/>
<text x="916.1" y="148.9" font-size="16.5" fill="#d8d8d8" text-anchor="end">10</text>
<line x1="922.60" y1="195.46" x2="1089.80" y2="195.46" stroke="#8c8c8c" stroke-width="1.6"/>
<line x1="913.60" y1="195.46" x2="922.60" y2="195.46" stroke="#a0a0a0" stroke-width="1.6"/>
<text x="916.1" y="203.1" font-size="16.5" fill="#d8d8d8" text-anchor="end">5</text>
<line x1="922.60" y1="249.59" x2="1089.80" y2="249.59" stroke="#8c8c8c" stroke-width="1.6"/>
<line x1="913.60" y1="249.59" x2="922.60" y2="249.59" stroke="#a0a0a0" stroke-width="1.6"/>
<text x="916.1" y="257.2" font-size="16.5" fill="#d8d8d8" text-anchor="end">0</text>
<line x1="922.60" y1="303.72" x2="1089.80" y2="303.72" stroke="#8c8c8c" stroke-width="1.6"/>
<line x1="913.60" y1="303.72" x2="922.60" y2="303.72" stroke="#a0a0a0" stroke-width="1.6"/>
<text x="916.1" y="311.3" font-size="16.5" fill="#d8d8d8" text-anchor="end">-5</text>
<line x1="922.60" y1="357.85" x2="1089.80" y2="357.85" stroke="#8c8c8c" stroke-width="1.6"/>
<line x1="913.60" y1="357.85" x2="922.60" y2="357.85" stroke="#a0a0a0" stroke-width="1.6"/>
<text x="916.1" y="365.5" font-size="16.5" fill="#d8d8d8" text-anchor="end">-10</text>
<line x1="913.60" y1="411.98" x2="922.60" y2="411.98" stroke="#a0a0a0" stroke-width="1.6"/>
<text x="916.1" y="419.6" font-size="16.5" fill="#d8d8d8" text-anchor="end">-15</text>
<path d="M922.6,87.2 H1089.8 V412" fill="none" stroke="#a0a0a0" stroke-width="1.8"/>
<line x1="922.60" y1="86.60" x2="1090.70" y2="86.60" stroke="#a0a0a0" stroke-width="2.6"/>
<line x1="922.60" y1="86.00" x2="922.60" y2="418.00" stroke="#a0a0a0" stroke-width="1.8"/>
<line x1="922.60" y1="412.00" x2="1089.80" y2="412.00" stroke="#a0a0a0" stroke-width="1.8"/>
<line x1="1089.80" y1="412.00" x2="1089.80" y2="418.80" stroke="#a0a0a0" stroke-width="1.6"/>
<text x="1007.2" y="430.5" font-size="16.5" fill="#d8d8d8" text-anchor="middle">100%</text>
<rect x="940.20" y="227.00" width="132.30" height="22.70" fill="url(#gy)" stroke="#000" stroke-width="1.6"/>
<rect x="430.00" y="443.00" width="683.00" height="187.00" fill="#000"/>
<rect x="453.00" y="526.00" width="115.00" height="77.00" fill="#c0bfa2"/>
<rect x="453.00" y="450.50" width="115.00" height="76.50" fill="#b3b9a0"/>
<rect x="453.70" y="451.20" width="113.60" height="151.60" fill="none" stroke="#f4f4f4" stroke-width="1.6"/>
<text x="510.5" y="621.0" font-size="14" fill="#f0f0f0" text-anchor="middle">20%</text>
<rect x="586.00" y="526.00" width="115.00" height="77.00" fill="#c1bf86"/>
<rect x="586.00" y="450.50" width="115.00" height="76.50" fill="#b2bb7e"/>
<rect x="586.70" y="451.20" width="113.60" height="151.60" fill="none" stroke="#f4f4f4" stroke-width="1.6"/>
<text x="643.5" y="621.0" font-size="14" fill="#f0f0f0" text-anchor="middle">40%</text>
<rect x="720.00" y="526.00" width="115.00" height="77.00" fill="#c2be6a"/>
<rect x="720.00" y="450.50" width="115.00" height="76.50" fill="#b1bc5c"/>
<rect x="720.70" y="451.20" width="113.60" height="151.60" fill="none" stroke="#f4f4f4" stroke-width="1.6"/>
<text x="777.5" y="621.0" font-size="14" fill="#f0f0f0" text-anchor="middle">60%</text>
<rect x="853.00" y="526.00" width="115.00" height="77.00" fill="#c3bd4b"/>
<rect x="853.00" y="450.50" width="115.00" height="76.50" fill="#b2b823"/>
<rect x="853.70" y="451.20" width="113.60" height="151.60" fill="none" stroke="#f4f4f4" stroke-width="1.6"/>
<text x="910.5" y="621.0" font-size="14" fill="#f0f0f0" text-anchor="middle">80%</text>
<rect x="987.00" y="526.00" width="115.00" height="77.00" fill="#c6c359"/>
<rect x="987.00" y="450.50" width="115.00" height="76.50" fill="#b8bf00"/>
<rect x="987.70" y="451.20" width="113.60" height="151.60" fill="none" stroke="#f4f4f4" stroke-width="1.6"/>
<text x="1044.5" y="621.0" font-size="14" fill="#f0f0f0" text-anchor="middle">100%</text>
<text transform="translate(445,504) rotate(-90)" font-size="14" fill="#f0f0f0">Actual</text>
<text transform="translate(445,590) rotate(-90)" font-size="14" fill="#f0f0f0">Target</text>
<rect x="1120.20" y="2.80" width="799.80" height="642.80" fill="#c2be00"/>
<rect x="1128.30" y="10.60" width="785.50" height="627.50" fill="#333333"/>
<text x="1521.0" y="31.5" font-size="17" fill="#d8d8d8" text-anchor="middle">CIE 1976 u'v'</text>
<rect x="1172.50" y="37.70" width="737.00" height="567.30" fill="#232323"/>
<g clip-path="url(#cPlot)"><g clip-path="url(#cLoc)"><g filter="url(#fb16)" class="c12"><rect x="1176" y="30" fill="#009e00"/><rect x="1188" y="30" fill="#009e00"/><rect x="1200" y="30" fill="#009e00"/><rect x="1212" y="30" fill="#009e00"/><rect x="1224" y="30" fill="#009e00"/><rect x="1236" y="30" fill="#009e00"/><rect x="1248" y="30" fill="#009e00"/><rect x="1260" y="30" fill="#009e00"/><rect x="1272" y="30" fill="#009e00"/><rect x="1284" y="30" fill="#009e00"/><rect x="1296" y="30" fill="#009e00"/><rect x="1308" y="30" fill="#009e00"/><rect x="1320" y="30" fill="#089e00"/><rect x="1332" y="30" fill="#169e00"/><rect x="1164" y="42" fill="#009e00"/><rect x="1176" y="42" fill="#009e00"/><rect x="1188" y="42" fill="#009e00"/><rect x="1200" y="42" fill="#009e00"/><rect x="1212" y="42" fill="#009e00"/><rect x="1224" y="42" fill="#009e00"/><rect x="1236" y="42" fill="#009e00"/><rect x="1248" y="42" fill="#009e00"/><rect x="1260" y="42" fill="#009e00"/><rect x="1272" y="42" fill="#009e00"/><rect x="1284" y="42" fill="#009e00"/><rect x="1296" y="42" fill="#009e00"/><rect x="1308" y="42" fill="#009e00"/><rect x="1320" y="42" fill="#069e00"/><rect x="1332" y="42" fill="#159e00"/><rect x="1344" y="42" fill="#249e00"/><rect x="1356" y="42" fill="#359e00"/><rect x="1368" y="42" fill="#469e00"/><rect x="1380" y="42" fill="#599e00"/><rect x="1392" y="42" fill="#6c9e00"/><rect x="1404" y="42" fill="#819e00"/><rect x="1416" y="42" fill="#979e00"/><rect x="1428" y="42" fill="#9e8f00"/><rect x="1164" y="54" fill="#009e00"/><rect x="1176" y="54" fill="#009e00"/><rect x="1188" y="54" fill="#009e00"/><rect x="1200" y="54" fill="#009e00"/><rect x="1212" y="54" fill="#009e00"/><rect x="1224" y="54" fill="#009e00"/><rect x="1236" y="54" fill="#009e00"/><rect x="1248" y="54" fill="#009e00"/><rect x="1260" y="54" fill="#009e00"/><rect x="1272" y="54" fill="#009e00"/><rect x="1284" y="54" fill="#009e00"/><rect x="1296" y="54" fill="#009e00"/><rect x="1308" y="54" fill="#009e00"/><rect x="1320" y="54" fill="#049e00"/><rect x="1332" y="54" fill="#139e00"/><rect x="1344" y="54" fill="#239e00"/><rect x="1356" y="54" fill="#349e00"/><rect x="1368" y="54" fill="#469e00"/><rect x="1380" y="54" fill="#599e00"/><rect x="1392" y="54" fill="#6d9e00"/><rect x="1404" y="54" fill="#829e00"/><rect x="1416" y="54" fill="#999e00"/><rect x="1428" y="54" fill="#9e8c00"/><rect x="1440" y="54" fill="#9e7a00"/><rect x="1452" y="54" fill="#9e6b00"/><rect x="1464" y="54" fill="#9e5f00"/><rect x="1476" y="54" fill="#9e5400"/><rect x="1488" y="54" fill="#9e4b00"/><rect x="1500" y="54" fill="#9e4300"/><rect x="1512" y="54" fill="#9e3c00"/><rect x="1524" y="54" fill="#9e3600"/><rect x="1536" y="54" fill="#9e3100"/><rect x="1164" y="66" fill="#009e0a"/><rect x="1176" y="66" fill="#009e0a"/><rect x="1188" y="66" fill="#009e09"/><rect x="1200" y="66" fill="#009e08"/><rect x="1212" y="66" fill="#009e07"/><rect x="1224" y="66" fill="#009e06"/><rect x="1236" y="66" fill="#009e05"/><rect x="1248" y="66" fill="#009e04"/><rect x="1260" y="66" fill="#009e03"/><rect x="1272" y="66" fill="#009e02"/><rect x="1284" y="66" fill="#009e01"/><rect x="1296" y="66" fill="#009e00"/><rect x="1308" y="66" fill="#009e00"/><rect x="1320" y="66" fill="#019e00"/><rect x="1332" y="66" fill="#119e00"/><rect x="1344" y="66" fill="#219e00"/><rect x="1356" y="66" fill="#339e00"/><rect x="1368" y="66" fill="#459e00"/><rect x="1380" y="66" fill="#599e00"/><rect x="1392" y="66" fill="#6d9e00"/><rect x="1404" y="66" fill="#849e00"/><rect x="1416" y="66" fill="#9c9e00"/><rect x="1428" y="66" fill="#9e8a00"/><rect x="1440" y="66" fill="#9e7800"/><rect x="1452" y="66" fill="#9e6900"/><rect x="1464" y="66" fill="#9e5c00"/><rect x="1476" y="66" fill="#9e5200"/><rect x="1488" y="66" fill="#9e4900"/><rect x="1500" y="66" fill="#9e4100"/><rect x="1512" y="66" fill="#9e3a00"/><rect x="1524" y="66" fill="#9e3400"/><rect x="1536" y="66" fill="#9e2f00"/><rect x="1548" y="66" fill="#9e2a00"/><rect x="1560" y="66" fill="#9e2500"/><rect x="1572" y="66" fill="#9e2200"/><rect x="1584" y="66" fill="#9e1e00"/><rect x="1596" y="66" fill="#9e1b00"/><rect x="1608" y="66" fill="#9e1800"/><rect x="1620" y="66" fill="#9e1500"/><rect x="1632" y="66" fill="#9e1200"/><rect x="1644" y="66" fill="#9e1000"/><rect x="1164" y="78" fill="#009e15"/><rect x="1176" y="78" fill="#009e14"/><rect x="1188" y="78" fill="#009e14"/><rect x="1200" y="78" fill="#009e13"/><rect x="1212" y="78" fill="#009e13"/><rect x="1224" y="78" fill="#009e12"/><rect x="1236" y="78" fill="#009e11"/><rect x="1248" y="78" fill="#009e10"/><rect x="1260" y="78" fill="#009e10"/><rect x="1272" y="78" fill="#009e0f"/><rect x="1284" y="78" fill="#009e0e"/><rect x="1296" y="78" fill="#009e0d"/><rect x="1308" y="78" fill="#009e0c"/><rect x="1320" y="78" fill="#009e0b"/><rect x="1332" y="78" fill="#0f9e0a"/><rect x="1344" y="78" fill="#209e09"/><rect x="1356" y="78" fill="#319e08"/><rect x="1368" y="78" fill="#449e07"/><rect x="1380" y="78" fill="#589e05"/><rect x="1392" y="78" fill="#6e9e04"/><rect x="1404" y="78" fill="#859e02"/><rect x="1416" y="78" fill="#9e9e01"/><rect x="1428" y="78" fill="#9e8800"/><rect x="1440" y="78" fill="#9e7500"/><rect x="1452" y="78" fill="#9e6600"/><rect x="1464" y="78" fill="#9e5a00"/><rect x="1476" y="78" fill="#9e4f00"/><rect x="1488" y="78" fill="#9e4600"/><rect x="1500" y="78" fill="#9e3f00"/><rect x="1512" y="78" fill="#9e3800"/><rect x="1524" y="78" fill="#9e3200"/><rect x="1536" y="78" fill="#9e2d00"/><rect x="1548" y="78" fill="#9e2800"/><rect x="1560" y="78" fill="#9e2400"/><rect x="1572" y="78" fill="#9e2000"/><rect x="1584" y="78" fill="#9e1c00"/><rect x="1596" y="78" fill="#9e1900"/><rect x="1608" y="78" fill="#9e1600"/><rect x="1620" y="78" fill="#9e1300"/><rect x="1632" y="78" fill="#9e1100"/><rect x="1644" y="78" fill="#9e0e00"/><rect x="1656" y="78" fill="#9e0c00"/><rect x="1668" y="78" fill="#9e0a00"/><rect x="1680" y="78" fill="#9e0800"/><rect x="1692" y="78" fill="#9e0700"/><rect x="1704" y="78" fill="#9e0500"/><rect x="1716" y="78" fill="#9e0400"/><rect x="1728" y="78" fill="#9e0200"/><rect x="1740" y="78" fill="#9e0100"/><rect x="1752" y="78" fill="#9e0000"/><rect x="1164" y="90" fill="#009e20"/><rect x="1176" y="90" fill="#009e20"/><rect x="1188" y="90" fill="#009e1f"/><rect x="1200" y="90" fill="#009e1f"/><rect x="1212" y="90" fill="#009e1f"/><rect x="1224" y="90" fill="#009e1e"/><rect x="1236" y="90" fill="#009e1e"/><rect x="1248" y="90" fill="#009e1d"/><rect x="1260" y="90" fill="#009e1d"/><rect x="1272" y="90" fill="#009e1d"/><rect x="1284" y="90" fill="#009e1c"/><rect x="1296" y="90" fill="#009e1b"/><rect x="1308" y="90" fill="#009e1b"/><rect x="1320" y="90" fill="#009e1a"/><rect x="1332" y="90" fill="#0d9e1a"/><rect x="1344" y="90" fill="#1e9e19"/><rect x="1356" y="90" fill="#309e18"/><rect x="1368" y="90" fill="#449e18"/><rect x="1380" y="90" fill="#589e17"/><rect x="1392" y="90" fill="#6f9e16"/><rect x="1404" y="90" fill="#879e15"/><rect x="1416" y="90" fill="#9e9c14"/><rect x="1428" y="90" fill="#9e8510"/><rect x="1440" y="90" fill="#9e730d"/><rect x="1452" y="90" fill="#9e640a"/><rect x="1464" y="90" fill="#9e5708"/><rect x="1476" y="90" fill="#9e4d07"/><rect x="1488" y="90" fill="#9e4405"/><rect x="1500" y="90" fill="#9e3c04"/><rect x="1512" y="90" fill="#9e3603"/><rect x="1524" y="90" fill="#9e3002"/><rect x="1536" y="90" fill="#9e2a01"/><rect x="1548" y="90" fill="#9e2600"/><rect x="1560" y="90" fill="#9e2200"/><rect x="1572" y="90" fill="#9e1e00"/><rect x="1584" y="90" fill="#9e1a00"/><rect x="1596" y="90" fill="#9e1700"/><rect x="1608" y="90" fill="#9e1400"/><rect x="1620" y="90" fill="#9e1200"/><rect x="1632" y="90" fill="#9e0f00"/><rect x="1644" y="90" fill="#9e0d00"/><rect x="1656" y="90" fill="#9e0b00"/><rect x="1668" y="90" fill="#9e0900"/><rect x="1680" y="90" fill="#9e0700"/><rect x="1692" y="90" fill="#9e0500"/><rect x="1704" y="90" fill="#9e0400"/><rect x="1716" y="90" fill="#9e0200"/><rect x="1728" y="90" fill="#9e0100"/><rect x="1740" y="90" fill="#9e0000"/><rect x="1752" y="90" fill="#9e0000"/><rect x="1764" y="90" fill="#9e0000"/><rect x="1776" y="90" fill="#9e0000"/><rect x="1788" y="90" fill="#9e0000"/><rect x="1800" y="90" fill="#9e0000"/><rect x="1812" y="90" fill="#9e0000"/><rect x="1824" y="90" fill="#9e0000"/><rect x="1836" y="90" fill="#9e0000"/><rect x="1848" y="90" fill="#9e0000"/><rect x="1164" y="102" fill="#009e2c"/><rect x="1176" y="102" fill="#009e2c"/><rect x="1188" y="102" fill="#009e2c"/><rect x="1200" y="102" fill="#009e2c"/><rect x="1212" y="102" fill="#009e2b"/><rect x="1224" y="102" fill="#009e2b"/><rect x="1236" y="102" fill="#009e2b"/><rect x="1248" y="102" fill="#009e2b"/><rect x="1260" y="102" fill="#009e2b"/><rect x="1272" y="102" fill="#009e2b"/><rect x="1284" y="102" fill="#009e2b"/><rect x="1296" y="102" fill="#009e2b"/><rect x="1308" y="102" fill="#009e2a"/><rect x="1320" y="102" fill="#009e2a"/><rect x="1332" y="102" fill="#0a9e2a"/><rect x="1344" y="102" fill="#1c9e2a"/><rect x="1356" y="102" fill="#2f9e2a"/><rect x="1368" y="102" fill="#439e2a"/><rect x="1380" y="102" fill="#589e29"/><rect x="1392" y="102" fill="#6f9e29"/><rect x="1404" y="102" fill="#889e29"/><rect x="1416" y="102" fill="#9e9927"/><rect x="1428" y="102" fill="#9e8221"/><rect x="1440" y="102" fill="#9e701c"/><rect x="1452" y="102" fill="#9e6118"/><rect x="1464" y="102" fill="#9e5515"/><rect x="1476" y="102" fill="#9e4a12"/><rect x="1488" y="102" fill="#9e4210"/><rect x="1500" y="102" fill="#9e3a0e"/><rect x="1512" y="102" fill="#9e330c"/><rect x="1524" y="102" fill="#9e2e0b"/><rect x="1536" y="102" fill="#9e2809"/><rect x="1548" y="102" fill="#9e2408"/><rect x="1560" y="102" fill="#9e2007"/><rect x="1572" y="102" fill="#9e1c06"/><rect x="1584" y="102" fill="#9e1805"/><rect x="1596" y="102" fill="#9e1504"/><rect x="1608" y="102" fill="#9e1203"/><rect x="1620" y="102" fill="#9e1003"/><rect x="1632" y="102" fill="#9e0d02"/><rect x="1644" y="102" fill="#9e0b01"/><rect x="1656" y="102" fill="#9e0901"/><rect x="1668" y="102" fill="#9e0700"/><rect x="1680" y="102" fill="#9e0500"/><rect x="1692" y="102" fill="#9e0400"/><rect x="1704" y="102" fill="#9e0200"/><rect x="1716" y="102" fill="#9e0100"/><rect x="1728" y="102" fill="#9e0000"/><rect x="1740" y="102" fill="#9e0000"/><rect x="1752" y="102" fill="#9e0000"/><rect x="1764" y="102" fill="#9e0000"/><rect x="1776" y="102" fill="#9e0000"/><rect x="1788" y="102" fill="#9e0000"/><rect x="1800" y="102" fill="#9e0000"/><rect x="1812" y="102" fill="#9e0000"/><rect x="1824" y="102" fill="#9e0000"/><rect x="1836" y="102" fill="#9e0000"/><rect x="1848" y="102" fill="#9e0000"/><rect x="1860" y="102" fill="#9e0000"/><rect x="1872" y="102" fill="#9e0000"/><rect x="1884" y="102" fill="#9e0000"/><rect x="1896" y="102" fill="#9e0000"/><rect x="1908" y="102" fill="#9e0000"/><rect x="1920" y="102" fill="#9e0000"/><rect x="1164" y="114" fill="#009e38"/><rect x="1176" y="114" fill="#009e38"/><rect x="1188" y="114" fill="#009e38"/><rect x="1200" y="114" fill="#009e39"/><rect x="1212" y="114" fill="#009e39"/><rect x="1224" y="114" fill="#009e39"/><rect x="1236" y="114" fill="#009e39"/><rect x="1248" y="114" fill="#009e39"/><rect x="1260" y="114" fill="#009e3a"/><rect x="1272" y="114" fill="#009e3a"/><rect x="1284" y="114" fill="#009e3a"/><rect x="1296" y="114" fill="#009e3b"/><rect x="1308" y="114" fill="#009e3b"/><rect x="1320" y="114" fill="#009e3b"/><rect x="1332" y="114" fill="#089e3c"/><rect x="1344" y="114" fill="#1a9e3c"/><rect x="1356" y="114" fill="#2d9e3c"/><rect x="1368" y="114" fill="#429e3d"/><rect x="1380" y="114" fill="#589e3d"/><rect x="1392" y="114" fill="#709e3e"/><rect x="1404" y="114" fill="#8a9e3e"/><rect x="1416" y="114" fill="#9e973c"/><rect x="1428" y="114" fill="#9e7f33"/><rect x="1440" y="114" fill="#9e6d2c"/><rect x="1452" y="114" fill="#9e5e27"/><rect x="1464" y="114" fill="#9e5222"/><rect x="1476" y="114" fill="#9e481e"/><rect x="1488" y="114" fill="#9e3f1b"/><rect x="1500" y="114" fill="#9e3818"/><rect x="1512" y="114" fill="#9e3116"/><rect x="1524" y="114" fill="#9e2b14"/><rect x="1536" y="114" fill="#9e2612"/><rect x="1548" y="114" fill="#9e2210"/><rect x="1560" y="114" fill="#9e1e0e"/><rect x="1572" y="114" fill="#9e1a0d"/><rect x="1584" y="114" fill="#9e170c"/><rect x="1596" y="114" fill="#9e130b"/><rect x="1608" y="114" fill="#9e110a"/><rect x="1620" y="114" fill="#9e0e09"/><rect x="1632" y="114" fill="#9e0c08"/><rect x="1644" y="114" fill="#9e0a07"/><rect x="1656" y="114" fill="#9e0806"/><rect x="1668" y="114" fill="#9e0606"/><rect x="1680" y="114" fill="#9e0405"/><rect x="1692" y="114" fill="#9e0204"/><rect x="1704" y="114" fill="#9e0104"/><rect x="1716" y="114" fill="#9e0003"/><rect x="1728" y="114" fill="#9e0003"/><rect x="1740" y="114" fill="#9e0002"/><rect x="1752" y="114" fill="#9e0002"/><rect x="1764" y="114" fill="#9e0001"/><rect x="1776" y="114" fill="#9e0001"/><rect x="1788" y="114" fill="#9e0001"/><rect x="1800" y="114" fill="#9e0000"/><rect x="1812" y="114" fill="#9e0000"/><rect x="1824" y="114" fill="#9e0000"/><rect x="1836" y="114" fill="#9e0000"/><rect x="1848" y="114" fill="#9e0000"/><rect x="1860" y="114" fill="#9e0000"/><rect x="1872" y="114" fill="#9e0000"/><rect x="1884" y="114" fill="#9e0000"/><rect x="1896" y="114" fill="#9e0000"/><rect x="1908" y="114" fill="#9e0000"/><rect x="1920" y="114" fill="#9e0000"/><rect x="1164" y="126" fill="#009e45"/><rect x="1176" y="126" fill="#009e45"/><rect x="1188" y="126" fill="#009e46"/><rect x="1200" y="126" fill="#009e46"/><rect x="1212" y="126" fill="#009e47"/><rect x="1224" y="126" fill="#009e47"/><rect x="1236" y="126" fill="#009e48"/><rect x="1248" y="126" fill="#009e49"/><rect x="1260" y="126" fill="#009e49"/><rect x="1272" y="126" fill="#009e4a"/><rect x="1284" y="126" fill="#009e4b"/><rect x="1296" y="126" fill="#009e4b"/><rect x="1308" y="126" fill="#009e4c"/><rect x="1320" y="126" fill="#009e4d"/><rect x="1332" y="126" fill="#059e4e"/><rect x="1344" y="126" fill="#189e4f"/><rect x="1356" y="126" fill="#2c9e50"/><rect x="1368" y="126" fill="#419e52"/><rect x="1380" y="126" fill="#589e53"/><rect x="1392" y="126" fill="#719e54"/><rect x="1404" y="126" fill="#8c9e56"/><rect x="1416" y="126" fill="#9e9452"/><rect x="1428" y="126" fill="#9e7d46"/><rect x="1440" y="126" fill="#9e6a3d"/><rect x="1452" y="126" fill="#9e5b36"/><rect x="1464" y="126" fill="#9e4f30"/><rect x="1476" y="126" fill="#9e452b"/><rect x="1488" y="126" fill="#9e3c27"/><rect x="1500" y="126" fill="#9e3523"/><rect x="1512" y="126" fill="#9e2f20"/><rect x="1524" y="126" fill="#9e291d"/><rect x="1536" y="126" fill="#9e241a"/><rect x="1548" y="126" fill="#9e1f18"/><rect x="1560" y="126" fill="#9e1b16"/><rect x="1572" y="126" fill="#9e1814"/><rect x="1584" y="126" fill="#9e1513"/><rect x="1596" y="126" fill="#9e1211"/><rect x="1608" y="126" fill="#9e0f10"/><rect x="1620" y="126" fill="#9e0c0f"/><rect x="1632" y="126" fill="#9e0a0e"/><rect x="1644" y="126" fill="#9e080d"/><rect x="1656" y="126" fill="#9e060c"/><rect x="1668" y="126" fill="#9e040b"/><rect x="1680" y="126" fill="#9e030a"/><rect x="1692" y="126" fill="#9e0109"/><rect x="1704" y="126" fill="#9e0008"/><rect x="1716" y="126" fill="#9e0008"/><rect x="1728" y="126" fill="#9e0007"/><rect x="1740" y="126" fill="#9e0006"/><rect x="1752" y="126" fill="#9e0006"/><rect x="1764" y="126" fill="#9e0005"/><rect x="1776" y="126" fill="#9e0005"/><rect x="1788" y="126" fill="#9e0004"/><rect x="1800" y="126" fill="#9e0004"/><rect x="1812" y="126" fill="#9e0003"/><rect x="1824" y="126" fill="#9e0003"/><rect x="1836" y="126" fill="#9e0003"/><rect x="1848" y="126" fill="#9e0002"/><rect x="1860" y="126" fill="#9e0002"/><rect x="1872" y="126" fill="#9e0002"/><rect x="1884" y="126" fill="#9e0001"/><rect x="1896" y="126" fill="#9e0001"/><rect x="1908" y="126" fill="#9e0001"/><rect x="1920" y="126" fill="#9e0000"/><rect x="1164" y="138" fill="#009e52"/><rect x="1176" y="138" fill="#009e53"/><rect x="1188" y="138" fill="#009e54"/><rect x="1200" y="138" fill="#009e54"/><rect x="1212" y="138" fill="#009e55"/><rect x="1224" y="138" fill="#009e56"/><rect x="1236" y="138" fill="#009e57"/><rect x="1248" y="138" fill="#009e58"/><rect x="1260" y="138" fill="#009e5a"/><rect x="1272" y="138" fill="#009e5b"/><rect x="1284" y="138" fill="#009e5c"/><rect x="1296" y="138" fill="#009e5d"/><rect x="1308" y="138" fill="#009e5f"/><rect x="1320" y="138" fill="#009e60"/><rect x="1332" y="138" fill="#029e62"/><rect x="1344" y="138" fill="#159e64"/><rect x="1356" y="138" fill="#2a9e66"/><rect x="1368" y="138" fill="#409e68"/><rect x="1380" y="138" fill="#589e6a"/><rect x="1392" y="138" fill="#729e6c"/><rect x="1404" y="138" fill="#8e9e6f"/><rect x="1416" y="138" fill="#9e9168"/><rect x="1428" y="138" fill="#9e795a"/><rect x="1440" y="138" fill="#9e674e"/><rect x="1452" y="138" fill="#9e5845"/><rect x="1464" y="138" fill="#9e4c3e"/><rect x="1476" y="138" fill="#9e4237"/><rect x="1488" y="138" fill="#9e3a32"/><rect x="1500" y="138" fill="#9e322e"/><rect x="1512" y="138" fill="#9e2c2a"/><rect x="1524" y="138" fill="#9e2726"/><rect x="1536" y="138" fill="#9e2223"/><rect x="1548" y="138" fill="#9e1d21"/><rect x="1560" y="138" fill="#9e191e"/><rect x="1572" y="138" fill="#9e161c"/><rect x="1584" y="138" fill="#9e131a"/><rect x="1596" y="138" fill="#9e1018"/><rect x="1608" y="138" fill="#9e0d17"/><rect x="1620" y="138" fill="#9e0b15"/><rect x="1632" y="138" fill="#9e0814"/><rect x="1644" y="138" fill="#9e0612"/><rect x="1656" y="138" fill="#9e0411"/><rect x="1668" y="138" fill="#9e0310"/><rect x="1680" y="138" fill="#9e010f"/><rect x="1692" y="138" fill="#9e000e"/><rect x="1704" y="138" fill="#9e000d"/><rect x="1716" y="138" fill="#9e000c"/><rect x="1728" y="138" fill="#9e000c"/><rect x="1740" y="138" fill="#9e000b"/><rect x="1752" y="138" fill="#9e000a"/><rect x="1764" y="138" fill="#9e0009"/><rect x="1776" y="138" fill="#9e0009"/><rect x="1788" y="138" fill="#9e0008"/><rect x="1800" y="138" fill="#9e0008"/><rect x="1812" y="138" fill="#9e0007"/><rect x="1824" y="138" fill="#9e0007"/><rect x="1836" y="138" fill="#9e0006"/><rect x="1848" y="138" fill="#9e0006"/><rect x="1860" y="138" fill="#9e0005"/><rect x="1872" y="138" fill="#9e0005"/><rect x="1884" y="138" fill="#9e0004"/><rect x="1896" y="138" fill="#9e0004"/><rect x="1908" y="138" fill="#9e0004"/><rect x="1920" y="138" fill="#9e0003"/><rect x="1164" y="150" fill="#009e60"/><rect x="1176" y="150" fill="#009e61"/><rect x="1188" y="150" fill="#009e62"/><rect x="1200" y="150" fill="#009e63"/><rect x="1212" y="150" fill="#009e65"/><rect x="1224" y="150" fill="#009e66"/><rect x="1236" y="150" fill="#009e68"/><rect x="1248" y="150" fill="#009e69"/><rect x="1260" y="150" fill="#009e6b"/><rect x="1272" y="150" fill="#009e6d"/><rect x="1284" y="150" fill="#009e6e"/><rect x="1296" y="150" fill="#009e70"/><rect x="1308" y="150" fill="#009e73"/><rect x="1320" y="150" fill="#009e75"/><rect x="1332" y="150" fill="#009e77"/><rect x="1344" y="150" fill="#139e7a"/><rect x="1356" y="150" fill="#289e7d"/><rect x="1368" y="150" fill="#3f9e80"/><rect x="1380" y="150" fill="#589e83"/><rect x="1392" y="150" fill="#739e86"/><rect x="1404" y="150" fill="#909e8a"/><rect x="1416" y="150" fill="#9e8e80"/><rect x="1428" y="150" fill="#9e766e"/><rect x="1440" y="150" fill="#9e6460"/><rect x="1452" y="150" fill="#9e5555"/><rect x="1464" y="150" fill="#9e494c"/><rect x="1476" y="150" fill="#9e3f45"/><rect x="1488" y="150" fill="#9e373e"/><rect x="1500" y="150" fill="#9e3039"/><rect x="1512" y="150" fill="#9e2a34"/><rect x="1524" y="150" fill="#9e2430"/><rect x="1536" y="150" fill="#9e1f2c"/><rect x="1548" y="150" fill="#9e1b29"/><rect x="1560" y="150" fill="#9e1726"/><rect x="1572" y="150" fill="#9e1424"/><rect x="1584" y="150" fill="#9e1121"/><rect x="1596" y="150" fill="#9e0e1f"/><rect x="1608" y="150" fill="#9e0b1d"/><rect x="1620" y="150" fill="#9e091b"/><rect x="1632" y="150" fill="#9e071a"/><rect x="1644" y="150" fill="#9e0518"/><rect x="1656" y="150" fill="#9e0317"/><rect x="1668" y="150" fill="#9e0115"/><rect x="1680" y="150" fill="#9e0014"/><rect x="1692" y="150" fill="#9e0013"/><rect x="1704" y="150" fill="#9e0012"/><rect x="1716" y="150" fill="#9e0011"/><rect x="1728" y="150" fill="#9e0010"/><rect x="1740" y="150" fill="#9e000f"/><rect x="1752" y="150" fill="#9e000e"/><rect x="1764" y="150" fill="#9e000e"/><rect x="1776" y="150" fill="#9e000d"/><rect x="1788" y="150" fill="#9e000c"/><rect x="1800" y="150" fill="#9e000b"/><rect x="1812" y="150" fill="#9e000b"/><rect x="1824" y="150" fill="#9e000a"/><rect x="1836" y="150" fill="#9e000a"/><rect x="1848" y="150" fill="#9e0009"/><rect x="1860" y="150" fill="#9e0009"/><rect x="1872" y="150" fill="#9e0008"/><rect x="1884" y="150" fill="#9e0008"/><rect x="1896" y="150" fill="#9e0007"/><rect x="1908" y="150" fill="#9e0007"/><rect x="1920" y="150" fill="#9e0006"/><rect x="1164" y="162" fill="#009e6e"/><rect x="1176" y="162" fill="#009e70"/><rect x="1188" y="162" fill="#009e71"/><rect x="1200" y="162" fill="#009e73"/><rect x="1212" y="162" fill="#009e75"/><rect x="1224" y="162" fill="#009e77"/><rect x="1236" y="162" fill="#009e79"/><rect x="1248" y="162" fill="#009e7b"/><rect x="1260" y="162" fill="#009e7d"/><rect x="1272" y="162" fill="#009e7f"/><rect x="1284" y="162" fill="#009e82"/><rect x="1296" y="162" fill="#009e85"/><rect x="1308" y="162" fill="#009e88"/><rect x="1320" y="162" fill="#009e8b"/><rect x="1332" y="162" fill="#009e8e"/><rect x="1344" y="162" fill="#109e91"/><rect x="1356" y="162" fill="#269e95"/><rect x="1368" y="162" fill="#3e9e99"/><rect x="1380" y="162" fill="#589e9e"/><rect x="1392" y="162" fill="#719a9e"/><rect x="1404" y="162" fill="#8a959e"/><rect x="1416" y="162" fill="#9e8b98"/><rect x="1428" y="162" fill="#9e7383"/><rect x="1440" y="162" fill="#9e6173"/><rect x="1452" y="162" fill="#9e5266"/><rect x="1464" y="162" fill="#9e465b"/><rect x="1476" y="162" fill="#9e3d52"/><rect x="1488" y="162" fill="#9e344b"/><rect x="1500" y="162" fill="#9e2d44"/><rect x="1512" y="162" fill="#9e273f"/><rect x="1524" y="162" fill="#9e223a"/><rect x="1536" y="162" fill="#9e1d35"/><rect x="1548" y="162" fill="#9e1932"/><rect x="1560" y="162" fill="#9e152e"/><rect x="1572" y="162" fill="#9e122b"/><rect x="1584" y="162" fill="#9e0f29"/><rect x="1596" y="162" fill="#9e0c26"/><rect x="1608" y="162" fill="#9e0924"/><rect x="1620" y="162" fill="#9e0722"/><rect x="1632" y="162" fill="#9e0520"/><rect x="1644" y="162" fill="#9e031e"/><rect x="1656" y="162" fill="#9e011c"/><rect x="1668" y="162" fill="#9e001b"/><rect x="1680" y="162" fill="#9e0019"/><rect x="1692" y="162" fill="#9e0018"/><rect x="1704" y="162" fill="#9e0017"/><rect x="1716" y="162" fill="#9e0016"/><rect x="1728" y="162" fill="#9e0015"/><rect x="1740" y="162" fill="#9e0014"/><rect x="1752" y="162" fill="#9e0013"/><rect x="1764" y="162" fill="#9e0012"/><rect x="1776" y="162" fill="#9e0011"/><rect x="1788" y="162" fill="#9e0010"/><rect x="1800" y="162" fill="#9e000f"/><rect x="1812" y="162" fill="#9e000f"/><rect x="1824" y="162" fill="#9e000e"/><rect x="1836" y="162" fill="#9e000d"/><rect x="1848" y="162" fill="#9e000d"/><rect x="1860" y="162" fill="#9e000c"/><rect x="1872" y="162" fill="#9e000b"/><rect x="1884" y="162" fill="#9e000b"/><rect x="1896" y="162" fill="#9e000a"/><rect x="1908" y="162" fill="#9e000a"/><rect x="1920" y="162" fill="#9e0009"/><rect x="1164" y="174" fill="#009e7d"/><rect x="1176" y="174" fill="#009e7f"/><rect x="1188" y="174" fill="#009e81"/><rect x="1200" y="174" fill="#009e84"/><rect x="1212" y="174" fill="#009e86"/><rect x="1224" y="174" fill="#009e88"/><rect x="1236" y="174" fill="#009e8b"/><rect x="1248" y="174" fill="#009e8e"/><rect x="1260" y="174" fill="#009e90"/><rect x="1272" y="174" fill="#009e94"/><rect x="1284" y="174" fill="#009e97"/><rect x="1296" y="174" fill="#009e9a"/><rect x="1308" y="174" fill="#009e9e"/><rect x="1320" y="174" fill="#009a9e"/><rect x="1332" y="174" fill="#00969e"/><rect x="1344" y="174" fill="#0c929e"/><rect x="1356" y="174" fill="#218e9e"/><rect x="1368" y="174" fill="#358a9e"/><rect x="1380" y="174" fill="#4a869e"/><rect x="1392" y="174" fill="#60819e"/><rect x="1404" y="174" fill="#767d9e"/><rect x="1416" y="174" fill="#8c789e"/><rect x="1428" y="174" fill="#9e7099"/><rect x="1440" y="174" fill="#9e5d86"/><rect x="1452" y="174" fill="#9e4f77"/><rect x="1464" y="174" fill="#9e436a"/><rect x="1476" y="174" fill="#9e3a60"/><rect x="1488" y="174" fill="#9e3157"/><rect x="1500" y="174" fill="#9e2a50"/><rect x="1512" y="174" fill="#9e2449"/><rect x="1524" y="174" fill="#9e1f44"/><rect x="1536" y="174" fill="#9e1b3f"/><rect x="1548" y="174" fill="#9e163b"/><rect x="1560" y="174" fill="#9e1337"/><rect x="1572" y="174" fill="#9e1033"/><rect x="1584" y="174" fill="#9e0d30"/><rect x="1596" y="174" fill="#9e0a2d"/><rect x="1608" y="174" fill="#9e072b"/><rect x="1620" y="174" fill="#9e0528"/><rect x="1632" y="174" fill="#9e0326"/><rect x="1644" y="174" fill="#9e0124"/><rect x="1656" y="174" fill="#9e0022"/><rect x="1668" y="174" fill="#9e0020"/><rect x="1680" y="174" fill="#9e001f"/><rect x="1692" y="174" fill="#9e001d"/><rect x="1704" y="174" fill="#9e001c"/><rect x="1716" y="174" fill="#9e001b"/><rect x="1728" y="174" fill="#9e0019"/><rect x="1740" y="174" fill="#9e0018"/><rect x="1752" y="174" fill="#9e0017"/><rect x="1764" y="174" fill="#9e0016"/><rect x="1776" y="174" fill="#9e0015"/><rect x="1788" y="174" fill="#9e0014"/><rect x="1800" y="174" fill="#9e0013"/><rect x="1812" y="174" fill="#9e0012"/><rect x="1824" y="174" fill="#9e0012"/><rect x="1836" y="174" fill="#9e0011"/><rect x="1848" y="174" fill="#9e0010"/><rect x="1860" y="174" fill="#9e000f"/><rect x="1872" y="174" fill="#9e000f"/><rect x="1884" y="174" fill="#9e000e"/><rect x="1896" y="174" fill="#9e000e"/><rect x="1908" y="174" fill="#9e000d"/><rect x="1920" y="174" fill="#9e000c"/><rect x="1164" y="186" fill="#009e8d"/><rect x="1176" y="186" fill="#009e90"/><rect x="1188" y="186" fill="#009e92"/><rect x="1200" y="186" fill="#009e95"/><rect x="1212" y="186" fill="#009e98"/><rect x="1224" y="186" fill="#009e9b"/><rect x="1236" y="186" fill="#009e9e"/><rect x="1248" y="186" fill="#009b9e"/><rect x="1260" y="186" fill="#00979e"/><rect x="1272" y="186" fill="#00949e"/><rect x="1284" y="186" fill="#00919e"/><rect x="1296" y="186" fill="#008d9e"/><rect x="1308" y="186" fill="#00899e"/><rect x="1320" y="186" fill="#00869e"/><rect x="1332" y="186" fill="#00829e"/><rect x="1344" y="186" fill="#087e9e"/><rect x="1356" y="186" fill="#1a7a9e"/><rect x="1368" y="186" fill="#2d769e"/><rect x="1380" y="186" fill="#3f729e"/><rect x="1392" y="186" fill="#526e9e"/><rect x="1404" y="186" fill="#666a9e"/><rect x="1416" y="186" fill="#7a659e"/><rect x="1428" y="186" fill="#8e619e"/><rect x="1440" y="186" fill="#9e5a9a"/><rect x="1452" y="186" fill="#9e4c88"/><rect x="1464" y="186" fill="#9e407a"/><rect x="1476" y="186" fill="#9e366e"/><rect x="1488" y="186" fill="#9e2e64"/><rect x="1500" y="186" fill="#9e285c"/><rect x="1512" y="186" fill="#9e2254"/><rect x="1524" y="186" fill="#9e1d4e"/><rect x="1536" y="186" fill="#9e1848"/><rect x="1548" y="186" fill="#9e1443"/><rect x="1560" y="186" fill="#9e113f"/><rect x="1572" y="186" fill="#9e0d3b"/><rect x="1584" y="186" fill="#9e0a38"/><rect x="1596" y="186" fill="#9e0834"/><rect x="1608" y="186" fill="#9e0531"/><rect x="1620" y="186" fill="#9e032f"/><rect x="1632" y="186" fill="#9e012c"/><rect x="1644" y="186" fill="#9e002a"/><rect x="1656" y="186" fill="#9e0028"/><rect x="1668" y="186" fill="#9e0026"/><rect x="1680" y="186" fill="#9e0024"/><rect x="1692" y="186" fill="#9e0022"/><rect x="1704" y="186" fill="#9e0021"/><rect x="1716" y="186" fill="#9e001f"/><rect x="1728" y="186" fill="#9e001e"/><rect x="1740" y="186" fill="#9e001d"/><rect x="1752" y="186" fill="#9e001b"/><rect x="1764" y="186" fill="#9e001a"/><rect x="1776" y="186" fill="#9e0019"/><rect x="1788" y="186" fill="#9e0018"/><rect x="1800" y="186" fill="#9e0017"/><rect x="1812" y="186" fill="#9e0016"/><rect x="1824" y="186" fill="#9e0015"/><rect x="1836" y="186" fill="#9e0014"/><rect x="1848" y="186" fill="#9e0014"/><rect x="1860" y="186" fill="#9e0013"/><rect x="1872" y="186" fill="#9e0012"/><rect x="1884" y="186" fill="#9e0011"/><rect x="1896" y="186" fill="#9e0011"/><rect x="1176" y="198" fill="#009b9e"/><rect x="1188" y="198" fill="#00989e"/><rect x="1200" y="198" fill="#00959e"/><rect x="1212" y="198" fill="#00929e"/><rect x="1224" y="198" fill="#008f9e"/><rect x="1236" y="198" fill="#008c9e"/><rect x="1248" y="198" fill="#00899e"/><rect x="1260" y="198" fill="#00869e"/><rect x="1272" y="198" fill="#00829e"/><rect x="1284" y="198" fill="#007f9e"/><rect x="1296" y="198" fill="#007c9e"/><rect x="1308" y="198" fill="#00789e"/><rect x="1320" y="198" fill="#00759e"/><rect x="1332" y="198" fill="#00719e"/><rect x="1344" y="198" fill="#056e9e"/><rect x="1356" y="198" fill="#156a9e"/><rect x="1368" y="198" fill="#26669e"/><rect x="1380" y="198" fill="#36629e"/><rect x="1392" y="198" fill="#485e9e"/><rect x="1404" y="198" fill="#595a9e"/><rect x="1416" y="198" fill="#6b569e"/><rect x="1428" y="198" fill="#7d529e"/><rect x="1440" y="198" fill="#8f4e9e"/><rect x="1452" y="198" fill="#9e489a"/><rect x="1464" y="198" fill="#9e3d8a"/><rect x="1476" y="198" fill="#9e337d"/><rect x="1488" y="198" fill="#9e2b71"/><rect x="1500" y="198" fill="#9e2568"/><rect x="1512" y="198" fill="#9e1f60"/><rect x="1524" y="198" fill="#9e1a58"/><rect x="1536" y="198" fill="#9e1652"/><rect x="1548" y="198" fill="#9e124d"/><rect x="1560" y="198" fill="#9e0e48"/><rect x="1572" y="198" fill="#9e0b43"/><rect x="1584" y="198" fill="#9e083f"/><rect x="1596" y="198" fill="#9e063c"/><rect x="1608" y="198" fill="#9e0438"/><rect x="1620" y="198" fill="#9e0135"/><rect x="1632" y="198" fill="#9e0033"/><rect x="1644" y="198" fill="#9e0030"/><rect x="1656" y="198" fill="#9e002e"/><rect x="1668" y="198" fill="#9e002c"/><rect x="1680" y="198" fill="#9e0029"/><rect x="1692" y="198" fill="#9e0028"/><rect x="1704" y="198" fill="#9e0026"/><rect x="1716" y="198" fill="#9e0024"/><rect x="1728" y="198" fill="#9e0023"/><rect x="1740" y="198" fill="#9e0021"/><rect x="1752" y="198" fill="#9e0020"/><rect x="1764" y="198" fill="#9e001f"/><rect x="1776" y="198" fill="#9e001d"/><rect x="1788" y="198" fill="#9e001c"/><rect x="1800" y="198" fill="#9e001b"/><rect x="1812" y="198" fill="#9e001a"/><rect x="1824" y="198" fill="#9e0019"/><rect x="1836" y="198" fill="#9e0018"/><rect x="1848" y="198" fill="#9e0017"/><rect x="1860" y="198" fill="#9e0016"/><rect x="1872" y="198" fill="#9e0016"/><rect x="1884" y="198" fill="#9e0015"/><rect x="1176" y="210" fill="#008b9e"/><rect x="1188" y="210" fill="#00899e"/><rect x="1200" y="210" fill="#00869e"/><rect x="1212" y="210" fill="#00839e"/><rect x="1224" y="210" fill="#00809e"/><rect x="1236" y="210" fill="#007d9e"/><rect x="1248" y="210" fill="#007a9e"/><rect x="1260" y="210" fill="#00779e"/><rect x="1272" y="210" fill="#00749e"/><rect x="1284" y="210" fill="#00719e"/><rect x="1296" y="210" fill="#006d9e"/><rect x="1308" y="210" fill="#006a9e"/><rect x="1320" y="210" fill="#00679e"/><rect x="1332" y="210" fill="#00639e"/><rect x="1344" y="210" fill="#02609e"/><rect x="1356" y="210" fill="#115d9e"/><rect x="1368" y="210" fill="#20599e"/><rect x="1380" y="210" fill="#2f559e"/><rect x="1392" y="210" fill="#3f529e"/><rect x="1404" y="210" fill="#4e4e9e"/><rect x="1416" y="210" fill="#5f4a9e"/><rect x="1428" y="210" fill="#6f469e"/><rect x="1440" y="210" fill="#7f439e"/><rect x="1452" y="210" fill="#903f9e"/><rect x="1464" y="210" fill="#9e399b"/><rect x="1476" y="210" fill="#9e308c"/><rect x="1488" y="210" fill="#9e287f"/><rect x="1500" y="210" fill="#9e2274"/><rect x="1512" y="210" fill="#9e1c6b"/><rect x="1524" y="210" fill="#9e1763"/><rect x="1536" y="210" fill="#9e135c"/><rect x="1548" y="210" fill="#9e0f56"/><rect x="1560" y="210" fill="#9e0c50"/><rect x="1572" y="210" fill="#9e094c"/><rect x="1584" y="210" fill="#9e0647"/><rect x="1596" y="210" fill="#9e0443"/><rect x="1608" y="210" fill="#9e023f"/><rect x="1620" y="210" fill="#9e003c"/><rect x="1632" y="210" fill="#9e0039"/><rect x="1644" y="210" fill="#9e0036"/><rect x="1656" y="210" fill="#9e0034"/><rect x="1668" y="210" fill="#9e0031"/><rect x="1680" y="210" fill="#9e002f"/><rect x="1692" y="210" fill="#9e002d"/><rect x="1704" y="210" fill="#9e002b"/><rect x="1716" y="210" fill="#9e0029"/><rect x="1728" y="210" fill="#9e0027"/><rect x="1740" y="210" fill="#9e0026"/><rect x="1752" y="210" fill="#9e0024"/><rect x="1764" y="210" fill="#9e0023"/><rect x="1776" y="210" fill="#9e0022"/><rect x="1788" y="210" fill="#9e0020"/><rect x="1800" y="210" fill="#9e001f"/><rect x="1812" y="210" fill="#9e001e"/><rect x="1824" y="210" fill="#9e001d"/><rect x="1836" y="210" fill="#9e001c"/><rect x="1848" y="210" fill="#9e001b"/><rect x="1860" y="210" fill="#9e001a"/><rect x="1872" y="210" fill="#9e0019"/><rect x="1188" y="222" fill="#007b9e"/><rect x="1200" y="222" fill="#00789e"/><rect x="1212" y="222" fill="#00769e"/><rect x="1224" y="222" fill="#00739e"/><rect x="1236" y="222" fill="#00709e"/><rect x="1248" y="222" fill="#006d9e"/><rect x="1260" y="222" fill="#006a9e"/><rect x="1272" y="222" fill="#00679e"/><rect x="1284" y="222" fill="#00649e"/><rect x="1296" y="222" fill="#00619e"/><rect x="1308" y="222" fill="#005e9e"/><rect x="1320" y="222" fill="#005b9e"/><rect x="1332" y="222" fill="#00589e"/><rect x="1344" y="222" fill="#00559e"/><rect x="1356" y="222" fill="#0d519e"/><rect x="1368" y="222" fill="#1b4e9e"/><rect x="1380" y="222" fill="#294b9e"/><rect x="1392" y="222" fill="#37479e"/><rect x="1404" y="222" fill="#46449e"/><rect x="1416" y="222" fill="#54409e"/><rect x="1428" y="222" fill="#633d9e"/><rect x="1440" y="222" fill="#72399e"/><rect x="1452" y="222" fill="#82359e"/><rect x="1464" y="222" fill="#91319e"/><rect x="1476" y="222" fill="#9e2d9b"/><rect x="1488" y="222" fill="#9e258d"/><rect x="1500" y="222" fill="#9e1f81"/><rect x="1512" y="222" fill="#9e1977"/><rect x="1524" y="222" fill="#9e156e"/><rect x="1536" y="222" fill="#9e1066"/><rect x="1548" y="222" fill="#9e0d5f"/><rect x="1560" y="222" fill="#9e0a59"/><rect x="1572" y="222" fill="#9e0754"/><rect x="1584" y="222" fill="#9e044f"/><rect x="1596" y="222" fill="#9e024b"/><rect x="1608" y="222" fill="#9e0047"/><rect x="1620" y="222" fill="#9e0043"/><rect x="1632" y="222" fill="#9e0040"/><rect x="1644" y="222" fill="#9e003c"/><rect x="1656" y="222" fill="#9e003a"/><rect x="1668" y="222" fill="#9e0037"/><rect x="1680" y="222" fill="#9e0035"/><rect x="1692" y="222" fill="#9e0032"/><rect x="1704" y="222" fill="#9e0030"/><rect x="1716" y="222" fill="#9e002e"/><rect x="1728" y="222" fill="#9e002c"/><rect x="1740" y="222" fill="#9e002a"/><rect x="1752" y="222" fill="#9e0029"/><rect x="1764" y="222" fill="#9e0027"/><rect x="1776" y="222" fill="#9e0026"/><rect x="1788" y="222" fill="#9e0024"/><rect x="1800" y="222" fill="#9e0023"/><rect x="1812" y="222" fill="#9e0022"/><rect x="1824" y="222" fill="#9e0021"/><rect x="1836" y="222" fill="#9e001f"/><rect x="1848" y="222" fill="#9e001e"/><rect x="1860" y="222" fill="#9e001d"/><rect x="1188" y="234" fill="#00709e"/><rect x="1200" y="234" fill="#006d9e"/><rect x="1212" y="234" fill="#006a9e"/><rect x="1224" y="234" fill="#00689e"/><rect x="1236" y="234" fill="#00659e"/><rect x="1248" y="234" fill="#00629e"/><rect x="1260" y="234" fill="#005f9e"/><rect x="1272" y="234" fill="#005d9e"/><rect x="1284" y="234" fill="#005a9e"/><rect x="1296" y="234" fill="#00579e"/><rect x="1308" y="234" fill="#00549e"/><rect x="1320" y="234" fill="#00519e"/><rect x="1332" y="234" fill="#004e9e"/><rect x="1344" y="234" fill="#004b9e"/><rect x="1356" y="234" fill="#0a489e"/><rect x="1368" y="234" fill="#17459e"/><rect x="1380" y="234" fill="#24419e"/><rect x="1392" y="234" fill="#313e9e"/><rect x="1404" y="234" fill="#3e3b9e"/><rect x="1416" y="234" fill="#4c379e"/><rect x="1428" y="234" fill="#59349e"/><rect x="1440" y="234" fill="#67319e"/><rect x="1452" y="234" fill="#752d9e"/><rect x="1464" y="234" fill="#842a9e"/><rect x="1476" y="234" fill="#92269e"/><rect x="1488" y="234" fill="#9e229b"/><rect x="1500" y="234" fill="#9e1c8e"/><rect x="1512" y="234" fill="#9e1683"/><rect x="1524" y="234" fill="#9e1279"/><rect x="1536" y="234" fill="#9e0e71"/><rect x="1548" y="234" fill="#9e0a69"/><rect x="1560" y="234" fill="#9e0762"/><rect x="1572" y="234" fill="#9e045c"/><rect x="1584" y="234" fill="#9e0257"/><rect x="1596" y="234" fill="#9e0052"/><rect x="1608" y="234" fill="#9e004e"/><rect x="1620" y="234" fill="#9e004a"/><rect x="1632" y="234" fill="#9e0046"/><rect x="1644" y="234" fill="#9e0043"/><rect x="1656" y="234" fill="#9e0040"/><rect x="1668" y="234" fill="#9e003d"/><rect x="1680" y="234" fill="#9e003a"/><rect x="1692" y="234" fill="#9e0038"/><rect x="1704" y="234" fill="#9e0035"/><rect x="1716" y="234" fill="#9e0033"/><rect x="1728" y="234" fill="#9e0031"/><rect x="1740" y="234" fill="#9e002f"/><rect x="1752" y="234" fill="#9e002d"/><rect x="1764" y="234" fill="#9e002c"/><rect x="1776" y="234" fill="#9e002a"/><rect x="1788" y="234" fill="#9e0029"/><rect x="1800" y="234" fill="#9e0027"/><rect x="1812" y="234" fill="#9e0026"/><rect x="1824" y="234" fill="#9e0024"/><rect x="1836" y="234" fill="#9e0023"/><rect x="1848" y="234" fill="#9e0022"/><rect x="1188" y="246" fill="#00669e"/><rect x="1200" y="246" fill="#00639e"/><rect x="1212" y="246" fill="#00619e"/><rect x="1224" y="246" fill="#005e9e"/><rect x="1236" y="246" fill="#005b9e"/><rect x="1248" y="246" fill="#00599e"/><rect x="1260" y="246" fill="#00569e"/><rect x="1272" y="246" fill="#00539e"/><rect x="1284" y="246" fill="#00519e"/><rect x="1296" y="246" fill="#004e9e"/><rect x="1308" y="246" fill="#004b9e"/><rect x="1320" y="246" fill="#00489e"/><rect x="1332" y="246" fill="#00459e"/><rect x="1344" y="246" fill="#00429e"/><rect x="1356" y="246" fill="#083f9e"/><rect x="1368" y="246" fill="#143c9e"/><rect x="1380" y="246" fill="#20399e"/><rect x="1392" y="246" fill="#2c369e"/><rect x="1404" y="246" fill="#38339e"/><rect x="1416" y="246" fill="#44309e"/><rect x="1428" y="246" fill="#512d9e"/><rect x="1440" y="246" fill="#5e2a9e"/><rect x="1452" y="246" fill="#6b269e"/><rect x="1464" y="246" fill="#78239e"/><rect x="1476" y="246" fill="#85209e"/><rect x="1488" y="246" fill="#931c9e"/><rect x="1500" y="246" fill="#9e189c"/><rect x="1512" y="246" fill="#9e138f"/><rect x="1524" y="246" fill="#9e0f85"/><rect x="1536" y="246" fill="#9e0b7b"/><rect x="1548" y="246" fill="#9e0873"/><rect x="1560" y="246" fill="#9e056c"/><rect x="1572" y="246" fill="#9e0265"/><rect x="1584" y="246" fill="#9e005f"/><rect x="1596" y="246" fill="#9e005a"/><rect x="1608" y="246" fill="#9e0055"/><rect x="1620" y="246" fill="#9e0051"/><rect x="1632" y="246" fill="#9e004d"/><rect x="1644" y="246" fill="#9e0049"/><rect x="1656" y="246" fill="#9e0046"/><rect x="1668" y="246" fill="#9e0043"/><rect x="1680" y="246" fill="#9e0040"/><rect x="1692" y="246" fill="#9e003d"/><rect x="1704" y="246" fill="#9e003b"/><rect x="1716" y="246" fill="#9e0038"/><rect x="1728" y="246" fill="#9e0036"/><rect x="1740" y="246" fill="#9e0034"/><rect x="1752" y="246" fill="#9e0032"/><rect x="1764" y="246" fill="#9e0030"/><rect x="1776" y="246" fill="#9e002e"/><rect x="1788" y="246" fill="#9e002d"/><rect x="1800" y="246" fill="#9e002b"/><rect x="1812" y="246" fill="#9e002a"/><rect x="1824" y="246" fill="#9e0028"/><rect x="1836" y="246" fill="#9e0027"/><rect x="1848" y="246" fill="#9e0026"/><rect x="1200" y="258" fill="#005a9e"/><rect x="1212" y="258" fill="#00589e"/><rect x="1224" y="258" fill="#00559e"/><rect x="1236" y="258" fill="#00539e"/><rect x="1248" y="258" fill="#00509e"/><rect x="1260" y="258" fill="#004e9e"/><rect x="1272" y="258" fill="#004b9e"/><rect x="1284" y="258" fill="#00499e"/><rect x="1296" y="258" fill="#00469e"/><rect x="1308" y="258" fill="#00439e"/><rect x="1320" y="258" fill="#00419e"/><rect x="1332" y="258" fill="#003e9e"/><rect x="1344" y="258" fill="#003b9e"/><rect x="1356" y="258" fill="#05389e"/><rect x="1368" y="258" fill="#10359e"/><rect x="1380" y="258" fill="#1c339e"/><rect x="1392" y="258" fill="#27309e"/><rect x="1404" y="258" fill="#322d9e"/><rect x="1416" y="258" fill="#3e2a9e"/><rect x="1428" y="258" fill="#4a279e"/><rect x="1440" y="258" fill="#56249e"/><rect x="1452" y="258" fill="#62219e"/><rect x="1464" y="258" fill="#6e1d9e"/><rect x="1476" y="258" fill="#7a1a9e"/><rect x="1488" y="258" fill="#87179e"/><rect x="1500" y="258" fill="#94149e"/><rect x="1512" y="258" fill="#9e109c"/><rect x="1524" y="258" fill="#9e0c90"/><rect x="1536" y="258" fill="#9e0886"/><rect x="1548" y="258" fill="#9e057d"/><rect x="1560" y="258" fill="#9e0275"/><rect x="1572" y="258" fill="#9e006e"/><rect x="1584" y="258" fill="#9e0068"/><rect x="1596" y="258" fill="#9e0062"/><rect x="1608" y="258" fill="#9e005d"/><rect x="1620" y="258" fill="#9e0058"/><rect x="1632" y="258" fill="#9e0054"/><rect x="1644" y="258" fill="#9e0050"/><rect x="1656" y="258" fill="#9e004c"/><rect x="1668" y="258" fill="#9e0049"/><rect x="1680" y="258" fill="#9e0046"/><rect x="1692" y="258" fill="#9e0043"/><rect x="1704" y="258" fill="#9e0040"/><rect x="1716" y="258" fill="#9e003d"/><rect x="1728" y="258" fill="#9e003b"/><rect x="1740" y="258" fill="#9e0039"/><rect x="1752" y="258" fill="#9e0037"/><rect x="1764" y="258" fill="#9e0035"/><rect x="1776" y="258" fill="#9e0033"/><rect x="1788" y="258" fill="#9e0031"/><rect x="1800" y="258" fill="#9e002f"/><rect x="1812" y="258" fill="#9e002e"/><rect x="1824" y="258" fill="#9e002c"/><rect x="1836" y="258" fill="#9e002b"/><rect x="1200" y="270" fill="#00529e"/><rect x="1212" y="270" fill="#00509e"/><rect x="1224" y="270" fill="#004e9e"/><rect x="1236" y="270" fill="#004b9e"/><rect x="1248" y="270" fill="#00499e"/><rect x="1260" y="270" fill="#00469e"/><rect x="1272" y="270" fill="#00449e"/><rect x="1284" y="270" fill="#00429e"/><rect x="1296" y="270" fill="#003f9e"/><rect x="1308" y="270" fill="#003c9e"/><rect x="1320" y="270" fill="#003a9e"/><rect x="1332" y="270" fill="#00379e"/><rect x="1344" y="270" fill="#00359e"/><rect x="1356" y="270" fill="#03329e"/><rect x="1368" y="270" fill="#0e2f9e"/><rect x="1380" y="270" fill="#182d9e"/><rect x="1392" y="270" fill="#232a9e"/><rect x="1404" y="270" fill="#2e279e"/><rect x="1416" y="270" fill="#38249e"/><rect x="1428" y="270" fill="#43219e"/><rect x="1440" y="270" fill="#4f1e9e"/><rect x="1452" y="270" fill="#5a1b9e"/><rect x="1464" y="270" fill="#65189e"/><rect x="1476" y="270" fill="#71159e"/><rect x="1488" y="270" fill="#7c129e"/><rect x="1500" y="270" fill="#880f9e"/><rect x="1512" y="270" fill="#940c9e"/><rect x="1524" y="270" fill="#9e099c"/><rect x="1536" y="270" fill="#9e0591"/><rect x="1548" y="270" fill="#9e0287"/><rect x="1560" y="270" fill="#9e007f"/><rect x="1572" y="270" fill="#9e0077"/><rect x="1584" y="270" fill="#9e0070"/><rect x="1596" y="270" fill="#9e006a"/><rect x="1608" y="270" fill="#9e0064"/><rect x="1620" y="270" fill="#9e005f"/><rect x="1632" y="270" fill="#9e005b"/><rect x="1644" y="270" fill="#9e0056"/><rect x="1656" y="270" fill="#9e0052"/><rect x="1668" y="270" fill="#9e004f"/><rect x="1680" y="270" fill="#9e004b"/><rect x="1692" y="270" fill="#9e0048"/><rect x="1704" y="270" fill="#9e0045"/><rect x="1716" y="270" fill="#9e0042"/><rect x="1728" y="270" fill="#9e0040"/><rect x="1740" y="270" fill="#9e003e"/><rect x="1752" y="270" fill="#9e003b"/><rect x="1764" y="270" fill="#9e0039"/><rect x="1776" y="270" fill="#9e0037"/><rect x="1788" y="270" fill="#9e0035"/><rect x="1800" y="270" fill="#9e0033"/><rect x="1812" y="270" fill="#9e0032"/><rect x="1824" y="270" fill="#9e0030"/><rect x="1212" y="282" fill="#00499e"/><rect x="1224" y="282" fill="#00479e"/><rect x="1236" y="282" fill="#00459e"/><rect x="1248" y="282" fill="#00429e"/><rect x="1260" y="282" fill="#00409e"/><rect x="1272" y="282" fill="#003e9e"/><rect x="1284" y="282" fill="#003b9e"/><rect x="1296" y="282" fill="#00399e"/><rect x="1308" y="282" fill="#00369e"/><rect x="1320" y="282" fill="#00349e"/><rect x="1332" y="282" fill="#00319e"/><rect x="1344" y="282" fill="#002f9e"/><rect x="1356" y="282" fill="#022c9e"/><rect x="1368" y="282" fill="#0b2a9e"/><rect x="1380" y="282" fill="#15279e"/><rect x="1392" y="282" fill="#1f259e"/><rect x="1404" y="282" fill="#29229e"/><rect x="1416" y="282" fill="#341f9e"/><rect x="1428" y="282" fill="#3e1c9e"/><rect x="1440" y="282" fill="#481a9e"/><rect x="1452" y="282" fill="#53179e"/><rect x="1464" y="282" fill="#5d149e"/><rect x="1476" y="282" fill="#68119e"/><rect x="1488" y="282" fill="#730e9e"/><rect x="1500" y="282" fill="#7e0c9e"/><rect x="1512" y="282" fill="#89099e"/><rect x="1524" y="282" fill="#95069e"/><rect x="1536" y="282" fill="#9e039c"/><rect x="1548" y="282" fill="#9e0092"/><rect x="1560" y="282" fill="#9e0088"/><rect x="1572" y="282" fill="#9e0080"/><rect x="1584" y="282" fill="#9e0079"/><rect x="1596" y="282" fill="#9e0072"/><rect x="1608" y="282" fill="#9e006c"/><rect x="1620" y="282" fill="#9e0067"/><rect x="1632" y="282" fill="#9e0062"/><rect x="1644" y="282" fill="#9e005d"/><rect x="1656" y="282" fill="#9e0059"/><rect x="1668" y="282" fill="#9e0055"/><rect x="1680" y="282" fill="#9e0051"/><rect x="1692" y="282" fill="#9e004e"/><rect x="1704" y="282" fill="#9e004b"/><rect x="1716" y="282" fill="#9e0048"/><rect x="1728" y="282" fill="#9e0045"/><rect x="1740" y="282" fill="#9e0042"/><rect x="1752" y="282" fill="#9e0040"/><rect x="1764" y="282" fill="#9e003e"/><rect x="1776" y="282" fill="#9e003c"/><rect x="1788" y="282" fill="#9e003a"/><rect x="1800" y="282" fill="#9e0038"/><rect x="1812" y="282" fill="#9e0036"/><rect x="1212" y="294" fill="#00439e"/><rect x="1224" y="294" fill="#00419e"/><rect x="1236" y="294" fill="#003f9e"/><rect x="1248" y="294" fill="#003c9e"/><rect x="1260" y="294" fill="#003a9e"/><rect x="1272" y="294" fill="#00389e"/><rect x="1284" y="294" fill="#00369e"/><rect x="1296" y="294" fill="#00339e"/><rect x="1308" y="294" fill="#00319e"/><rect x="1320" y="294" fill="#002f9e"/><rect x="1332" y="294" fill="#002c9e"/><rect x="1344" y="294" fill="#002a9e"/><rect x="1356" y="294" fill="#00279e"/><rect x="1368" y="294" fill="#09259e"/><rect x="1380" y="294" fill="#13229e"/><rect x="1392" y="294" fill="#1c209e"/><rect x="1404" y="294" fill="#261d9e"/><rect x="1416" y="294" fill="#2f1b9e"/><rect x="1428" y="294" fill="#39189e"/><rect x="1440" y="294" fill="#43169e"/><rect x="1452" y="294" fill="#4d139e"/><rect x="1464" y="294" fill="#57109e"/><rect x="1476" y="294" fill="#610e9e"/><rect x="1488" y="294" fill="#6b0b9e"/><rect x="1500" y="294" fill="#75089e"/><rect x="1512" y="294" fill="#80059e"/><rect x="1524" y="294" fill="#8a029e"/><rect x="1536" y="294" fill="#95009e"/><rect x="1548" y="294" fill="#9e009c"/><rect x="1560" y="294" fill="#9e0092"/><rect x="1572" y="294" fill="#9e008a"/><rect x="1584" y="294" fill="#9e0082"/><rect x="1596" y="294" fill="#9e007a"/><rect x="1608" y="294" fill="#9e0074"/><rect x="1620" y="294" fill="#9e006e"/><rect x="1632" y="294" fill="#9e0069"/><rect x="1644" y="294" fill="#9e0064"/><rect x="1656" y="294" fill="#9e005f"/><rect x="1668" y="294" fill="#9e005b"/><rect x="1680" y="294" fill="#9e0057"/><rect x="1692" y="294" fill="#9e0054"/><rect x="1704" y="294" fill="#9e0050"/><rect x="1716" y="294" fill="#9e004d"/><rect x="1728" y="294" fill="#9e004a"/><rect x="1740" y="294" fill="#9e0047"/><rect x="1752" y="294" fill="#9e0045"/><rect x="1764" y="294" fill="#9e0042"/><rect x="1776" y="294" fill="#9e0040"/><rect x="1788" y="294" fill="#9e003e"/><rect x="1800" y="294" fill="#9e003c"/><rect x="1224" y="306" fill="#003b9e"/><rect x="1236" y="306" fill="#00399e"/><rect x="1248" y="306" fill="#00379e"/><rect x="1260" y="306" fill="#00359e"/><rect x="1272" y="306" fill="#00339e"/><rect x="1284" y="306" fill="#00319e"/><rect x="1296" y="306" fill="#002e9e"/><rect x="1308" y="306" fill="#002c9e"/><rect x="1320" y="306" fill="#002a9e"/><rect x="1332" y="306" fill="#00289e"/><rect x="1344" y="306" fill="#00259e"/><rect x="1356" y="306" fill="#00239e"/><rect x="1368" y="306" fill="#07219e"/><rect x="1380" y="306" fill="#101e9e"/><rect x="1392" y="306" fill="#191c9e"/><rect x="1404" y="306" fill="#22199e"/><rect x="1416" y="306" fill="#2b179e"/><rect x="1428" y="306" fill="#34149e"/><rect x="1440" y="306" fill="#3e129e"/><rect x="1452" y="306" fill="#470f9e"/><rect x="1464" y="306" fill="#500d9e"/><rect x="1476" y="306" fill="#5a0a9e"/><rect x="1488" y="306" fill="#64089e"/><rect x="1500" y="306" fill="#6d059e"/><rect x="1512" y="306" fill="#77029e"/><rect x="1524" y="306" fill="#81009e"/><rect x="1536" y="306" fill="#8b009e"/><rect x="1548" y="306" fill="#95009e"/><rect x="1560" y="306" fill="#9e009d"/><rect x="1572" y="306" fill="#9e0093"/><rect x="1584" y="306" fill="#9e008a"/><rect x="1596" y="306" fill="#9e0083"/><rect x="1608" y="306" fill="#9e007c"/><rect x="1620" y="306" fill="#9e0076"/><rect x="1632" y="306" fill="#9e0070"/><rect x="1644" y="306" fill="#9e006b"/><rect x="1656" y="306" fill="#9e0066"/><rect x="1668" y="306" fill="#9e0061"/><rect x="1680" y="306" fill="#9e005d"/><rect x="1692" y="306" fill="#9e0059"/><rect x="1704" y="306" fill="#9e0056"/><rect x="1716" y="306" fill="#9e0052"/><rect x="1728" y="306" fill="#9e004f"/><rect x="1740" y="306" fill="#9e004c"/><rect x="1752" y="306" fill="#9e004a"/><rect x="1764" y="306" fill="#9e0047"/><rect x="1776" y="306" fill="#9e0045"/><rect x="1788" y="306" fill="#9e0042"/><rect x="1224" y="318" fill="#00369e"/><rect x="1236" y="318" fill="#00349e"/><rect x="1248" y="318" fill="#00329e"/><rect x="1260" y="318" fill="#00309e"/><rect x="1272" y="318" fill="#002e9e"/><rect x="1284" y="318" fill="#002c9e"/><rect x="1296" y="318" fill="#002a9e"/><rect x="1308" y="318" fill="#00289e"/><rect x="1320" y="318" fill="#00259e"/><rect x="1332" y="318" fill="#00239e"/><rect x="1344" y="318" fill="#00219e"/><rect x="1356" y="318" fill="#001f9e"/><rect x="1368" y="318" fill="#061d9e"/><rect x="1380" y="318" fill="#0e1a9e"/><rect x="1392" y="318" fill="#17189e"/><rect x="1404" y="318" fill="#1f169e"/><rect x="1416" y="318" fill="#28139e"/><rect x="1428" y="318" fill="#30119e"/><rect x="1440" y="318" fill="#390f9e"/><rect x="1452" y="318" fill="#420c9e"/><rect x="1464" y="318" fill="#4b0a9e"/><rect x="1476" y="318" fill="#54079e"/><rect x="1488" y="318" fill="#5d059e"/><rect x="1500" y="318" fill="#66029e"/><rect x="1512" y="318" fill="#70009e"/><rect x="1524" y="318" fill="#79009e"/><rect x="1536" y="318" fill="#83009e"/><rect x="1548" y="318" fill="#8c009e"/><rect x="1560" y="318" fill="#96009e"/><rect x="1572" y="318" fill="#9e009d"/><rect x="1584" y="318" fill="#9e0094"/><rect x="1596" y="318" fill="#9e008b"/><rect x="1608" y="318" fill="#9e0084"/><rect x="1620" y="318" fill="#9e007d"/><rect x="1632" y="318" fill="#9e0077"/><rect x="1644" y="318" fill="#9e0072"/><rect x="1656" y="318" fill="#9e006c"/><rect x="1668" y="318" fill="#9e0068"/><rect x="1680" y="318" fill="#9e0063"/><rect x="1692" y="318" fill="#9e005f"/><rect x="1704" y="318" fill="#9e005b"/><rect x="1716" y="318" fill="#9e0058"/><rect x="1728" y="318" fill="#9e0054"/><rect x="1740" y="318" fill="#9e0051"/><rect x="1752" y="318" fill="#9e004e"/><rect x="1764" y="318" fill="#9e004c"/><rect x="1776" y="318" fill="#9e0049"/><rect x="1236" y="330" fill="#00309e"/><rect x="1248" y="330" fill="#002e9e"/><rect x="1260" y="330" fill="#002c9e"/><rect x="1272" y="330" fill="#002a9e"/><rect x="1284" y="330" fill="#00289e"/><rect x="1296" y="330" fill="#00269e"/><rect x="1308" y="330" fill="#00249e"/><rect x="1320" y="330" fill="#00229e"/><rect x="1332" y="330" fill="#001f9e"/><rect x="1344" y="330" fill="#001d9e"/><rect x="1356" y="330" fill="#001b9e"/><rect x="1368" y="330" fill="#04199e"/><rect x="1380" y="330" fill="#0c179e"/><rect x="1392" y="330" fill="#14159e"/><rect x="1404" y="330" fill="#1c129e"/><rect x="1416" y="330" fill="#24109e"/><rect x="1428" y="330" fill="#2d0e9e"/><rect x="1440" y="330" fill="#350c9e"/><rect x="1452" y="330" fill="#3e099e"/><rect x="1464" y="330" fill="#46079e"/><rect x="1476" y="330" fill="#4f059e"/><rect x="1488" y="330" fill="#57029e"/><rect x="1500" y="330" fill="#60009e"/><rect x="1512" y="330" fill="#69009e"/><rect x="1524" y="330" fill="#72009e"/><rect x="1536" y="330" fill="#7b009e"/><rect x="1548" y="330" fill="#84009e"/><rect x="1560" y="330" fill="#8d009e"/><rect x="1572" y="330" fill="#96009e"/><rect x="1584" y="330" fill="#9e009d"/><rect x="1596" y="330" fill="#9e0094"/><rect x="1608" y="330" fill="#9e008c"/><rect x="1620" y="330" fill="#9e0085"/><rect x="1632" y="330" fill="#9e007f"/><rect x="1644" y="330" fill="#9e0079"/><rect x="1656" y="330" fill="#9e0073"/><rect x="1668" y="330" fill="#9e006e"/><rect x="1680" y="330" fill="#9e0069"/><rect x="1692" y="330" fill="#9e0065"/><rect x="1704" y="330" fill="#9e0061"/><rect x="1716" y="330" fill="#9e005d"/><rect x="1728" y="330" fill="#9e005a"/><rect x="1740" y="330" fill="#9e0056"/><rect x="1752" y="330" fill="#9e0053"/><rect x="1764" y="330" fill="#9e0050"/><rect x="1236" y="342" fill="#002c9e"/><rect x="1248" y="342" fill="#002a9e"/><rect x="1260" y="342" fill="#00289e"/><rect x="1272" y="342" fill="#00269e"/><rect x="1284" y="342" fill="#00249e"/><rect x="1296" y="342" fill="#00229e"/><rect x="1308" y="342" fill="#00209e"/><rect x="1320" y="342" fill="#001e9e"/><rect x="1332" y="342" fill="#001c9e"/><rect x="1344" y="342" fill="#001a9e"/><rect x="1356" y="342" fill="#00189e"/><rect x="1368" y="342" fill="#03169e"/><rect x="1380" y="342" fill="#0a149e"/><rect x="1392" y="342" fill="#12119e"/><rect x="1404" y="342" fill="#1a0f9e"/><rect x="1416" y="342" fill="#220d9e"/><rect x="1428" y="342" fill="#290b9e"/><rect x="1440" y="342" fill="#31099e"/><rect x="1452" y="342" fill="#39079e"/><rect x="1464" y="342" fill="#42049e"/><rect x="1476" y="342" fill="#4a029e"/><rect x="1488" y="342" fill="#52009e"/><rect x="1500" y="342" fill="#5a009e"/><rect x="1512" y="342" fill="#63009e"/><rect x="1524" y="342" fill="#6b009e"/><rect x="1536" y="342" fill="#74009e"/><rect x="1548" y="342" fill="#7c009e"/><rect x="1560" y="342" fill="#85009e"/><rect x="1572" y="342" fill="#8e009e"/><rect x="1584" y="342" fill="#96009e"/><rect x="1596" y="342" fill="#9e009d"/><rect x="1608" y="342" fill="#9e0095"/><rect x="1620" y="342" fill="#9e008d"/><rect x="1632" y="342" fill="#9e0086"/><rect x="1644" y="342" fill="#9e0080"/><rect x="1656" y="342" fill="#9e007a"/><rect x="1668" y="342" fill="#9e0075"/><rect x="1680" y="342" fill="#9e0070"/><rect x="1692" y="342" fill="#9e006b"/><rect x="1704" y="342" fill="#9e0067"/><rect x="1716" y="342" fill="#9e0063"/><rect x="1728" y="342" fill="#9e005f"/><rect x="1740" y="342" fill="#9e005c"/><rect x="1752" y="342" fill="#9e0058"/><rect x="1248" y="354" fill="#00269e"/><rect x="1260" y="354" fill="#00249e"/><rect x="1272" y="354" fill="#00229e"/><rect x="1284" y="354" fill="#00209e"/><rect x="1296" y="354" fill="#001f9e"/><rect x="1308" y="354" fill="#001d9e"/><rect x="1320" y="354" fill="#001b9e"/><rect x="1332" y="354" fill="#00199e"/><rect x="1344" y="354" fill="#00179e"/><rect x="1356" y="354" fill="#00159e"/><rect x="1368" y="354" fill="#01139e"/><rect x="1380" y="354" fill="#09119e"/><rect x="1392" y="354" fill="#100f9e"/><rect x="1404" y="354" fill="#170d9e"/><rect x="1416" y="354" fill="#1f0b9e"/><rect x="1428" y="354" fill="#26089e"/><rect x="1440" y="354" fill="#2e069e"/><rect x="1452" y="354" fill="#36049e"/><rect x="1464" y="354" fill="#3d029e"/><rect x="1476" y="354" fill="#45009e"/><rect x="1488" y="354" fill="#4d009e"/><rect x="1500" y="354" fill="#55009e"/><rect x="1512" y="354" fill="#5d009e"/><rect x="1524" y="354" fill="#65009e"/><rect x="1536" y="354" fill="#6d009e"/><rect x="1548" y="354" fill="#75009e"/><rect x="1560" y="354" fill="#7d009e"/><rect x="1572" y="354" fill="#86009e"/><rect x="1584" y="354" fill="#8e009e"/><rect x="1596" y="354" fill="#97009e"/><rect x="1608" y="354" fill="#9e009d"/><rect x="1620" y="354" fill="#9e0095"/><rect x="1632" y="354" fill="#9e008e"/><rect x="1644" y="354" fill="#9e0087"/><rect x="1656" y="354" fill="#9e0081"/><rect x="1668" y="354" fill="#9e007b"/><rect x="1680" y="354" fill="#9e0076"/><rect x="1692" y="354" fill="#9e0071"/><rect x="1704" y="354" fill="#9e006d"/><rect x="1716" y="354" fill="#9e0068"/><rect x="1728" y="354" fill="#9e0064"/><rect x="1740" y="354" fill="#9e0061"/><rect x="1260" y="366" fill="#00219e"/><rect x="1272" y="366" fill="#001f9e"/><rect x="1284" y="366" fill="#001d9e"/><rect x="1296" y="366" fill="#001b9e"/><rect x="1308" y="366" fill="#001a9e"/><rect x="1320" y="366" fill="#00189e"/><rect x="1332" y="366" fill="#00169e"/><rect x="1344" y="366" fill="#00149e"/><rect x="1356" y="366" fill="#00129e"/><rect x="1368" y="366" fill="#00109e"/><rect x="1380" y="366" fill="#070e9e"/><rect x="1392" y="366" fill="#0e0c9e"/><rect x="1404" y="366" fill="#150a9e"/><rect x="1416" y="366" fill="#1d089e"/><rect x="1428" y="366" fill="#24069e"/><rect x="1440" y="366" fill="#2b049e"/><rect x="1452" y="366" fill="#32029e"/><rect x="1464" y="366" fill="#3a009e"/><rect x="1476" y="366" fill="#41009e"/><rect x="1488" y="366" fill="#49009e"/><rect x="1500" y="366" fill="#50009e"/><rect x="1512" y="366" fill="#58009e"/><rect x="1524" y="366" fill="#5f009e"/><rect x="1536" y="366" fill="#67009e"/><rect x="1548" y="366" fill="#6f009e"/><rect x="1560" y="366" fill="#77009e"/><rect x="1572" y="366" fill="#7f009e"/><rect x="1584" y="366" fill="#87009e"/><rect x="1596" y="366" fill="#8f009e"/><rect x="1608" y="366" fill="#97009e"/><rect x="1620" y="366" fill="#9e009d"/><rect x="1632" y="366" fill="#9e0095"/><rect x="1644" y="366" fill="#9e008e"/><rect x="1656" y="366" fill="#9e0088"/><rect x="1668" y="366" fill="#9e0082"/><rect x="1680" y="366" fill="#9e007c"/><rect x="1692" y="366" fill="#9e0077"/><rect x="1704" y="366" fill="#9e0072"/><rect x="1716" y="366" fill="#9e006e"/><rect x="1728" y="366" fill="#9e006a"/><rect x="1260" y="378" fill="#001e9e"/><rect x="1272" y="378" fill="#001c9e"/><rect x="1284" y="378" fill="#001a9e"/><rect x="1296" y="378" fill="#00199e"/><rect x="1308" y="378" fill="#00179e"/><rect x="1320" y="378" fill="#00159e"/><rect x="1332" y="378" fill="#00139e"/><rect x="1344" y="378" fill="#00119e"/><rect x="1356" y="378" fill="#000f9e"/><rect x="1368" y="378" fill="#000d9e"/><rect x="1380" y="378" fill="#060c9e"/><rect x="1392" y="378" fill="#0d0a9e"/><rect x="1404" y="378" fill="#13089e"/><rect x="1416" y="378" fill="#1a069e"/><rect x="1428" y="378" fill="#21049e"/><rect x="1440" y="378" fill="#28029e"/><rect x="1452" y="378" fill="#2f009e"/><rect x="1464" y="378" fill="#36009e"/><rect x="1476" y="378" fill="#3d009e"/><rect x="1488" y="378" fill="#44009e"/><rect x="1500" y="378" fill="#4c009e"/><rect x="1512" y="378" fill="#53009e"/><rect x="1524" y="378" fill="#5a009e"/><rect x="1536" y="378" fill="#62009e"/><rect x="1548" y="378" fill="#69009e"/><rect x="1560" y="378" fill="#71009e"/><rect x="1572" y="378" fill="#78009e"/><rect x="1584" y="378" fill="#80009e"/><rect x="1596" y="378" fill="#88009e"/><rect x="1608" y="378" fill="#8f009e"/><rect x="1620" y="378" fill="#97009e"/><rect x="1632" y="378" fill="#9e009d"/><rect x="1644" y="378" fill="#9e0096"/><rect x="1656" y="378" fill="#9e008f"/><rect x="1668" y="378" fill="#9e0089"/><rect x="1680" y="378" fill="#9e0083"/><rect x="1692" y="378" fill="#9e007d"/><rect x="1704" y="378" fill="#9e0078"/><rect x="1716" y="378" fill="#9e0074"/><rect x="1272" y="390" fill="#00199e"/><rect x="1284" y="390" fill="#00189e"/><rect x="1296" y="390" fill="#00169e"/><rect x="1308" y="390" fill="#00149e"/><rect x="1320" y="390" fill="#00129e"/><rect x="1332" y="390" fill="#00119e"/><rect x="1344" y="390" fill="#000f9e"/><rect x="1356" y="390" fill="#000d9e"/><rect x="1368" y="390" fill="#000b9e"/><rect x="1380" y="390" fill="#05099e"/><rect x="1392" y="390" fill="#0b079e"/><rect x="1404" y="390" fill="#12069e"/><rect x="1416" y="390" fill="#18049e"/><rect x="1428" y="390" fill="#1f029e"/><rect x="1440" y="390" fill="#26009e"/><rect x="1452" y="390" fill="#2c009e"/><rect x="1464" y="390" fill="#33009e"/><rect x="1476" y="390" fill="#3a009e"/><rect x="1488" y="390" fill="#41009e"/><rect x="1500" y="390" fill="#48009e"/><rect x="1512" y="390" fill="#4f009e"/><rect x="1524" y="390" fill="#56009e"/><rect x="1536" y="390" fill="#5d009e"/><rect x="1548" y="390" fill="#64009e"/><rect x="1560" y="390" fill="#6b009e"/><rect x="1572" y="390" fill="#72009e"/><rect x="1584" y="390" fill="#7a009e"/><rect x="1596" y="390" fill="#81009e"/><rect x="1608" y="390" fill="#88009e"/><rect x="1620" y="390" fill="#90009e"/><rect x="1632" y="390" fill="#97009e"/><rect x="1644" y="390" fill="#9e009d"/><rect x="1656" y="390" fill="#9e0096"/><rect x="1668" y="390" fill="#9e008f"/><rect x="1680" y="390" fill="#9e0089"/><rect x="1692" y="390" fill="#9e0084"/><rect x="1704" y="390" fill="#9e007e"/><rect x="1272" y="402" fill="#00179e"/><rect x="1284" y="402" fill="#00159e"/><rect x="1296" y="402" fill="#00139e"/><rect x="1308" y="402" fill="#00129e"/><rect x="1320" y="402" fill="#00109e"/><rect x="1332" y="402" fill="#000e9e"/><rect x="1344" y="402" fill="#000c9e"/><rect x="1356" y="402" fill="#000b9e"/><rect x="1368" y="402" fill="#00099e"/><rect x="1380" y="402" fill="#03079e"/><rect x="1392" y="402" fill="#0a059e"/><rect x="1404" y="402" fill="#10049e"/><rect x="1416" y="402" fill="#16029e"/><rect x="1428" y="402" fill="#1d009e"/><rect x="1440" y="402" fill="#23009e"/><rect x="1452" y="402" fill="#2a009e"/><rect x="1464" y="402" fill="#30009e"/><rect x="1476" y="402" fill="#37009e"/><rect x="1488" y="402" fill="#3d009e"/><rect x="1500" y="402" fill="#44009e"/><rect x="1512" y="402" fill="#4b009e"/><rect x="1524" y="402" fill="#51009e"/><rect x="1536" y="402" fill="#58009e"/><rect x="1548" y="402" fill="#5f009e"/><rect x="1560" y="402" fill="#66009e"/><rect x="1572" y="402" fill="#6d009e"/><rect x="1584" y="402" fill="#74009e"/><rect x="1596" y="402" fill="#7b009e"/><rect x="1608" y="402" fill="#82009e"/><rect x="1620" y="402" fill="#89009e"/><rect x="1632" y="402" fill="#90009e"/><rect x="1644" y="402" fill="#98009e"/><rect x="1656" y="402" fill="#9e009d"/><rect x="1668" y="402" fill="#9e0096"/><rect x="1680" y="402" fill="#9e0090"/><rect x="1692" y="402" fill="#9e008a"/><rect x="1284" y="414" fill="#00139e"/><rect x="1296" y="414" fill="#00119e"/><rect x="1308" y="414" fill="#000f9e"/><rect x="1320" y="414" fill="#000e9e"/><rect x="1332" y="414" fill="#000c9e"/><rect x="1344" y="414" fill="#000a9e"/><rect x="1356" y="414" fill="#00099e"/><rect x="1368" y="414" fill="#00079e"/><rect x="1380" y="414" fill="#02059e"/><rect x="1392" y="414" fill="#08049e"/><rect x="1404" y="414" fill="#0e029e"/><rect x="1416" y="414" fill="#15009e"/><rect x="1428" y="414" fill="#1b009e"/><rect x="1440" y="414" fill="#21009e"/><rect x="1452" y="414" fill="#27009e"/><rect x="1464" y="414" fill="#2d009e"/><rect x="1476" y="414" fill="#34009e"/><rect x="1488" y="414" fill="#3a009e"/><rect x="1500" y="414" fill="#40009e"/><rect x="1512" y="414" fill="#47009e"/><rect x="1524" y="414" fill="#4d009e"/><rect x="1536" y="414" fill="#54009e"/><rect x="1548" y="414" fill="#5a009e"/><rect x="1560" y="414" fill="#61009e"/><rect x="1572" y="414" fill="#68009e"/><rect x="1584" y="414" fill="#6e009e"/><rect x="1596" y="414" fill="#75009e"/><rect x="1608" y="414" fill="#7c009e"/><rect x="1620" y="414" fill="#83009e"/><rect x="1632" y="414" fill="#8a009e"/><rect x="1644" y="414" fill="#91009e"/><rect x="1656" y="414" fill="#98009e"/><rect x="1668" y="414" fill="#9e009d"/><rect x="1680" y="414" fill="#9e0097"/><rect x="1296" y="426" fill="#000f9e"/><rect x="1308" y="426" fill="#000d9e"/><rect x="1320" y="426" fill="#000c9e"/><rect x="1332" y="426" fill="#000a9e"/><rect x="1344" y="426" fill="#00089e"/><rect x="1356" y="426" fill="#00079e"/><rect x="1368" y="426" fill="#00059e"/><rect x="1380" y="426" fill="#01039e"/><rect x="1392" y="426" fill="#07029e"/><rect x="1404" y="426" fill="#0d009e"/><rect x="1416" y="426" fill="#13009e"/><rect x="1428" y="426" fill="#19009e"/><rect x="1440" y="426" fill="#1f009e"/><rect x="1452" y="426" fill="#25009e"/><rect x="1464" y="426" fill="#2b009e"/><rect x="1476" y="426" fill="#31009e"/><rect x="1488" y="426" fill="#37009e"/><rect x="1500" y="426" fill="#3d009e"/><rect x="1512" y="426" fill="#43009e"/><rect x="1524" y="426" fill="#4a009e"/><rect x="1536" y="426" fill="#50009e"/><rect x="1548" y="426" fill="#56009e"/><rect x="1560" y="426" fill="#5d009e"/><rect x="1572" y="426" fill="#63009e"/><rect x="1584" y="426" fill="#69009e"/><rect x="1596" y="426" fill="#70009e"/><rect x="1608" y="426" fill="#76009e"/><rect x="1620" y="426" fill="#7d009e"/><rect x="1632" y="426" fill="#84009e"/><rect x="1644" y="426" fill="#8a009e"/><rect x="1656" y="426" fill="#91009e"/><rect x="1668" y="426" fill="#98009e"/><rect x="1296" y="438" fill="#000d9e"/><rect x="1308" y="438" fill="#000b9e"/><rect x="1320" y="438" fill="#000a9e"/><rect x="1332" y="438" fill="#00089e"/><rect x="1344" y="438" fill="#00079e"/><rect x="1356" y="438" fill="#00059e"/><rect x="1368" y="438" fill="#00039e"/><rect x="1380" y="438" fill="#00029e"/><rect x="1392" y="438" fill="#06009e"/><rect x="1404" y="438" fill="#0c009e"/><rect x="1416" y="438" fill="#11009e"/><rect x="1428" y="438" fill="#17009e"/><rect x="1440" y="438" fill="#1d009e"/><rect x="1452" y="438" fill="#23009e"/><rect x="1464" y="438" fill="#28009e"/><rect x="1476" y="438" fill="#2e009e"/><rect x="1488" y="438" fill="#34009e"/><rect x="1500" y="438" fill="#3a009e"/><rect x="1512" y="438" fill="#40009e"/><rect x="1524" y="438" fill="#46009e"/><rect x="1536" y="438" fill="#4c009e"/><rect x="1548" y="438" fill="#52009e"/><rect x="1560" y="438" fill="#58009e"/><rect x="1572" y="438" fill="#5f009e"/><rect x="1584" y="438" fill="#65009e"/><rect x="1596" y="438" fill="#6b009e"/><rect x="1608" y="438" fill="#71009e"/><rect x="1620" y="438" fill="#78009e"/><rect x="1632" y="438" fill="#7e009e"/><rect x="1644" y="438" fill="#85009e"/><rect x="1656" y="438" fill="#8b009e"/><rect x="1308" y="450" fill="#00099e"/><rect x="1320" y="450" fill="#00089e"/><rect x="1332" y="450" fill="#00069e"/><rect x="1344" y="450" fill="#00059e"/><rect x="1356" y="450" fill="#00039e"/><rect x="1368" y="450" fill="#00029e"/><rect x="1380" y="450" fill="#00009e"/><rect x="1392" y="450" fill="#05009e"/><rect x="1404" y="450" fill="#0a009e"/><rect x="1416" y="450" fill="#10009e"/><rect x="1428" y="450" fill="#15009e"/><rect x="1440" y="450" fill="#1b009e"/><rect x="1452" y="450" fill="#21009e"/><rect x="1464" y="450" fill="#26009e"/><rect x="1476" y="450" fill="#2c009e"/><rect x="1488" y="450" fill="#32009e"/><rect x="1500" y="450" fill="#37009e"/><rect x="1512" y="450" fill="#3d009e"/><rect x="1524" y="450" fill="#43009e"/><rect x="1536" y="450" fill="#49009e"/><rect x="1548" y="450" fill="#4f009e"/><rect x="1560" y="450" fill="#55009e"/><rect x="1572" y="450" fill="#5b009e"/><rect x="1584" y="450" fill="#61009e"/><rect x="1596" y="450" fill="#67009e"/><rect x="1608" y="450" fill="#6d009e"/><rect x="1620" y="450" fill="#73009e"/><rect x="1632" y="450" fill="#79009e"/><rect x="1644" y="450" fill="#7f009e"/><rect x="1320" y="462" fill="#00069e"/><rect x="1332" y="462" fill="#00059e"/><rect x="1344" y="462" fill="#00039e"/><rect x="1356" y="462" fill="#00029e"/><rect x="1368" y="462" fill="#00009e"/><rect x="1380" y="462" fill="#00009e"/><rect x="1392" y="462" fill="#04009e"/><rect x="1404" y="462" fill="#09009e"/><rect x="1416" y="462" fill="#0f009e"/><rect x="1428" y="462" fill="#14009e"/><rect x="1440" y="462" fill="#19009e"/><rect x="1452" y="462" fill="#1f009e"/><rect x="1464" y="462" fill="#24009e"/><rect x="1476" y="462" fill="#2a009e"/><rect x="1488" y="462" fill="#2f009e"/><rect x="1500" y="462" fill="#35009e"/><rect x="1512" y="462" fill="#3a009e"/><rect x="1524" y="462" fill="#40009e"/><rect x="1536" y="462" fill="#46009e"/><rect x="1548" y="462" fill="#4b009e"/><rect x="1560" y="462" fill="#51009e"/><rect x="1572" y="462" fill="#57009e"/><rect x="1584" y="462" fill="#5c009e"/><rect x="1596" y="462" fill="#62009e"/><rect x="1608" y="462" fill="#68009e"/><rect x="1620" y="462" fill="#6e009e"/><rect x="1632" y="462" fill="#74009e"/><rect x="1320" y="474" fill="#00059e"/><rect x="1332" y="474" fill="#00039e"/><rect x="1344" y="474" fill="#00029e"/><rect x="1356" y="474" fill="#00009e"/><rect x="1368" y="474" fill="#00009e"/><rect x="1380" y="474" fill="#00009e"/><rect x="1392" y="474" fill="#03009e"/><rect x="1404" y="474" fill="#08009e"/><rect x="1416" y="474" fill="#0d009e"/><rect x="1428" y="474" fill="#12009e"/><rect x="1440" y="474" fill="#18009e"/><rect x="1452" y="474" fill="#1d009e"/><rect x="1464" y="474" fill="#22009e"/><rect x="1476" y="474" fill="#27009e"/><rect x="1488" y="474" fill="#2d009e"/><rect x="1500" y="474" fill="#32009e"/><rect x="1512" y="474" fill="#38009e"/><rect x="1524" y="474" fill="#3d009e"/><rect x="1536" y="474" fill="#43009e"/><rect x="1548" y="474" fill="#48009e"/><rect x="1560" y="474" fill="#4e009e"/><rect x="1572" y="474" fill="#53009e"/><rect x="1584" y="474" fill="#59009e"/><rect x="1596" y="474" fill="#5e009e"/><rect x="1608" y="474" fill="#64009e"/><rect x="1620" y="474" fill="#6a009e"/><rect x="1332" y="486" fill="#00029e"/><rect x="1344" y="486" fill="#00009e"/><rect x="1356" y="486" fill="#00009e"/><rect x="1368" y="486" fill="#00009e"/><rect x="1380" y="486" fill="#00009e"/><rect x="1392" y="486" fill="#02009e"/><rect x="1404" y="486" fill="#07009e"/><rect x="1416" y="486" fill="#0c009e"/><rect x="1428" y="486" fill="#11009e"/><rect x="1440" y="486" fill="#16009e"/><rect x="1452" y="486" fill="#1b009e"/><rect x="1464" y="486" fill="#20009e"/><rect x="1476" y="486" fill="#25009e"/><rect x="1488" y="486" fill="#2b009e"/><rect x="1500" y="486" fill="#30009e"/><rect x="1512" y="486" fill="#35009e"/><rect x="1524" y="486" fill="#3a009e"/><rect x="1536" y="486" fill="#40009e"/><rect x="1548" y="486" fill="#45009e"/><rect x="1560" y="486" fill="#4a009e"/><rect x="1572" y="486" fill="#50009e"/><rect x="1584" y="486" fill="#55009e"/><rect x="1596" y="486" fill="#5b009e"/><rect x="1608" y="486" fill="#60009e"/><rect x="1344" y="498" fill="#00009e"/><rect x="1356" y="498" fill="#00009e"/><rect x="1368" y="498" fill="#00009e"/><rect x="1380" y="498" fill="#00009e"/><rect x="1392" y="498" fill="#01009e"/><rect x="1404" y="498" fill="#06009e"/><rect x="1416" y="498" fill="#0b009e"/><rect x="1428" y="498" fill="#10009e"/><rect x="1440" y="498" fill="#15009e"/><rect x="1452" y="498" fill="#1a009e"/><rect x="1464" y="498" fill="#1f009e"/><rect x="1476" y="498" fill="#24009e"/><rect x="1488" y="498" fill="#29009e"/><rect x="1500" y="498" fill="#2e009e"/><rect x="1512" y="498" fill="#33009e"/><rect x="1524" y="498" fill="#38009e"/><rect x="1536" y="498" fill="#3d009e"/><rect x="1548" y="498" fill="#42009e"/><rect x="1560" y="498" fill="#47009e"/><rect x="1572" y="498" fill="#4d009e"/><rect x="1584" y="498" fill="#52009e"/><rect x="1596" y="498" fill="#57009e"/><rect x="1356" y="510" fill="#00009e"/><rect x="1368" y="510" fill="#00009e"/><rect x="1380" y="510" fill="#00009e"/><rect x="1392" y="510" fill="#00009e"/><rect x="1404" y="510" fill="#05009e"/><rect x="1416" y="510" fill="#0a009e"/><rect x="1428" y="510" fill="#0f009e"/><rect x="1440" y="510" fill="#13009e"/><rect x="1452" y="510" fill="#18009e"/><rect x="1464" y="510" fill="#1d009e"/><rect x="1476" y="510" fill="#22009e"/><rect x="1488" y="510" fill="#27009e"/><rect x="1500" y="510" fill="#2c009e"/><rect x="1512" y="510" fill="#31009e"/><rect x="1524" y="510" fill="#35009e"/><rect x="1536" y="510" fill="#3a009e"/><rect x="1548" y="510" fill="#3f009e"/><rect x="1560" y="510" fill="#45009e"/><rect x="1572" y="510" fill="#4a009e"/><rect x="1584" y="510" fill="#4f009e"/><rect x="1368" y="522" fill="#00009e"/><rect x="1380" y="522" fill="#00009e"/><rect x="1392" y="522" fill="#00009e"/><rect x="1404" y="522" fill="#04009e"/><rect x="1416" y="522" fill="#09009e"/><rect x="1428" y="522" fill="#0d009e"/><rect x="1440" y="522" fill="#12009e"/><rect x="1452" y="522" fill="#17009e"/><rect x="1464" y="522" fill="#1b009e"/><rect x="1476" y="522" fill="#20009e"/><rect x="1488" y="522" fill="#25009e"/><rect x="1500" y="522" fill="#2a009e"/><rect x="1512" y="522" fill="#2e009e"/><rect x="1524" y="522" fill="#33009e"/><rect x="1536" y="522" fill="#38009e"/><rect x="1548" y="522" fill="#3d009e"/><rect x="1560" y="522" fill="#42009e"/><rect x="1572" y="522" fill="#47009e"/><rect x="1380" y="534" fill="#00009e"/><rect x="1392" y="534" fill="#00009e"/><rect x="1404" y="534" fill="#03009e"/><rect x="1416" y="534" fill="#08009e"/><rect x="1428" y="534" fill="#0c009e"/><rect x="1440" y="534" fill="#11009e"/><rect x="1452" y="534" fill="#15009e"/><rect x="1464" y="534" fill="#1a009e"/><rect x="1476" y="534" fill="#1f009e"/><rect x="1488" y="534" fill="#23009e"/><rect x="1500" y="534" fill="#28009e"/><rect x="1512" y="534" fill="#2c009e"/><rect x="1524" y="534" fill="#31009e"/><rect x="1536" y="534" fill="#36009e"/><rect x="1548" y="534" fill="#3b009e"/><rect x="1560" y="534" fill="#3f009e"/><rect x="1392" y="546" fill="#00009e"/><rect x="1404" y="546" fill="#03009e"/><rect x="1416" y="546" fill="#07009e"/><rect x="1428" y="546" fill="#0b009e"/><rect x="1440" y="546" fill="#10009e"/><rect x="1452" y="546" fill="#14009e"/><rect x="1464" y="546" fill="#19009e"/><rect x="1476" y="546" fill="#1d009e"/><rect x="1488" y="546" fill="#22009e"/><rect x="1500" y="546" fill="#26009e"/><rect x="1512" y="546" fill="#2b009e"/><rect x="1524" y="546" fill="#2f009e"/><rect x="1536" y="546" fill="#34009e"/><rect x="1548" y="546" fill="#38009e"/><rect x="1404" y="558" fill="#02009e"/><rect x="1416" y="558" fill="#06009e"/><rect x="1428" y="558" fill="#0a009e"/><rect x="1440" y="558" fill="#0f009e"/><rect x="1452" y="558" fill="#13009e"/><rect x="1464" y="558" fill="#17009e"/><rect x="1476" y="558" fill="#1c009e"/><rect x="1488" y="558" fill="#20009e"/><rect x="1500" y="558" fill="#24009e"/><rect x="1512" y="558" fill="#29009e"/><rect x="1524" y="558" fill="#2d009e"/><rect x="1536" y="558" fill="#32009e"/><rect x="1416" y="570" fill="#05009e"/><rect x="1428" y="570" fill="#09009e"/><rect x="1440" y="570" fill="#0e009e"/><rect x="1452" y="570" fill="#12009e"/><rect x="1464" y="570" fill="#16009e"/><rect x="1476" y="570" fill="#1a009e"/><rect x="1488" y="570" fill="#1f009e"/><rect x="1500" y="570" fill="#23009e"/><rect x="1512" y="570" fill="#27009e"/><rect x="1524" y="570" fill="#2b009e"/><rect x="1440" y="582" fill="#0d009e"/><rect x="1452" y="582" fill="#11009e"/><rect x="1464" y="582" fill="#15009e"/><rect x="1476" y="582" fill="#19009e"/><rect x="1488" y="582" fill="#1d009e"/><rect x="1500" y="582" fill="#21009e"/><rect x="1512" y="582" fill="#25009e"/><rect x="1452" y="594" fill="#10009e"/><rect x="1464" y="594" fill="#14009e"/><rect x="1476" y="594" fill="#18009e"/><rect x="1488" y="594" fill="#1c009e"/><rect x="1500" y="594" fill="#20009e"/></g></g></g>
<g clip-path="url(#cTri)"><g filter="url(#fb12)" class="c12"><rect x="1300" y="60" fill="#00ff00"/><rect x="1312" y="60" fill="#00ff00"/><rect x="1324" y="60" fill="#0cff00"/><rect x="1336" y="60" fill="#25ff00"/><rect x="1348" y="60" fill="#40ff00"/><rect x="1360" y="60" fill="#5cff00"/><rect x="1372" y="60" fill="#7aff00"/><rect x="1384" y="60" fill="#9aff00"/><rect x="1396" y="60" fill="#bcff00"/><rect x="1408" y="60" fill="#e0ff00"/><rect x="1420" y="60" fill="#fff800"/><rect x="1432" y="60" fill="#ffd600"/><rect x="1444" y="60" fill="#ffbb00"/><rect x="1456" y="60" fill="#ffa400"/><rect x="1468" y="60" fill="#ff9100"/><rect x="1480" y="60" fill="#ff8100"/><rect x="1492" y="60" fill="#ff7300"/><rect x="1504" y="60" fill="#ff6700"/><rect x="1516" y="60" fill="#ff5c00"/><rect x="1528" y="60" fill="#ff5300"/><rect x="1540" y="60" fill="#ff4a00"/><rect x="1552" y="60" fill="#ff4300"/><rect x="1564" y="60" fill="#ff3c00"/><rect x="1576" y="60" fill="#ff3600"/><rect x="1588" y="60" fill="#ff3000"/><rect x="1600" y="60" fill="#ff2b00"/><rect x="1612" y="60" fill="#ff2600"/><rect x="1624" y="60" fill="#ff2200"/><rect x="1636" y="60" fill="#ff1e00"/><rect x="1648" y="60" fill="#ff1a00"/><rect x="1660" y="60" fill="#ff1600"/><rect x="1672" y="60" fill="#ff1300"/><rect x="1684" y="60" fill="#ff1000"/><rect x="1696" y="60" fill="#ff0d00"/><rect x="1708" y="60" fill="#ff0b00"/><rect x="1720" y="60" fill="#ff0800"/><rect x="1732" y="60" fill="#ff0600"/><rect x="1744" y="60" fill="#ff0300"/><rect x="1300" y="72" fill="#00ff0a"/><rect x="1312" y="72" fill="#00ff08"/><rect x="1324" y="72" fill="#08ff06"/><rect x="1336" y="72" fill="#22ff04"/><rect x="1348" y="72" fill="#3dff02"/><rect x="1360" y="72" fill="#5aff00"/><rect x="1372" y="72" fill="#79ff00"/><rect x="1384" y="72" fill="#9aff00"/><rect x="1396" y="72" fill="#bdff00"/><rect x="1408" y="72" fill="#e2ff00"/><rect x="1420" y="72" fill="#fff400"/><rect x="1432" y="72" fill="#ffd200"/><rect x="1444" y="72" fill="#ffb700"/><rect x="1456" y="72" fill="#ffa000"/><rect x="1468" y="72" fill="#ff8d00"/><rect x="1480" y="72" fill="#ff7d00"/><rect x="1492" y="72" fill="#ff6f00"/><rect x="1504" y="72" fill="#ff6300"/><rect x="1516" y="72" fill="#ff5900"/><rect x="1528" y="72" fill="#ff4f00"/><rect x="1540" y="72" fill="#ff4700"/><rect x="1552" y="72" fill="#ff3f00"/><rect x="1564" y="72" fill="#ff3900"/><rect x="1576" y="72" fill="#ff3300"/><rect x="1588" y="72" fill="#ff2d00"/><rect x="1600" y="72" fill="#ff2800"/><rect x="1612" y="72" fill="#ff2300"/><rect x="1624" y="72" fill="#ff1f00"/><rect x="1636" y="72" fill="#ff1b00"/><rect x="1648" y="72" fill="#ff1700"/><rect x="1660" y="72" fill="#ff1400"/><rect x="1672" y="72" fill="#ff1100"/><rect x="1684" y="72" fill="#ff0e00"/><rect x="1696" y="72" fill="#ff0b00"/><rect x="1708" y="72" fill="#ff0800"/><rect x="1720" y="72" fill="#ff0600"/><rect x="1732" y="72" fill="#ff0400"/><rect x="1744" y="72" fill="#ff0100"/><rect x="1300" y="84" fill="#00ff20"/><rect x="1312" y="84" fill="#00ff1f"/><rect x="1324" y="84" fill="#05ff1e"/><rect x="1336" y="84" fill="#1fff1c"/><rect x="1348" y="84" fill="#3bff1b"/><rect x="1360" y="84" fill="#59ff19"/><rect x="1372" y="84" fill="#78ff17"/><rect x="1384" y="84" fill="#9aff16"/><rect x="1396" y="84" fill="#beff14"/><rect x="1408" y="84" fill="#e5ff12"/><rect x="1420" y="84" fill="#fff00f"/><rect x="1432" y="84" fill="#ffce0b"/><rect x="1444" y="84" fill="#ffb307"/><rect x="1456" y="84" fill="#ff9c05"/><rect x="1468" y="84" fill="#ff8903"/><rect x="1480" y="84" fill="#ff7901"/><rect x="1492" y="84" fill="#ff6b00"/><rect x="1504" y="84" fill="#ff5f00"/><rect x="1516" y="84" fill="#ff5500"/><rect x="1528" y="84" fill="#ff4c00"/><rect x="1540" y="84" fill="#ff4400"/><rect x="1552" y="84" fill="#ff3c00"/><rect x="1564" y="84" fill="#ff3600"/><rect x="1576" y="84" fill="#ff3000"/><rect x="1588" y="84" fill="#ff2a00"/><rect x="1600" y="84" fill="#ff2500"/><rect x="1612" y="84" fill="#ff2100"/><rect x="1624" y="84" fill="#ff1c00"/><rect x="1636" y="84" fill="#ff1800"/><rect x="1648" y="84" fill="#ff1500"/><rect x="1660" y="84" fill="#ff1200"/><rect x="1672" y="84" fill="#ff0e00"/><rect x="1684" y="84" fill="#ff0b00"/><rect x="1696" y="84" fill="#ff0900"/><rect x="1708" y="84" fill="#ff0600"/><rect x="1720" y="84" fill="#ff0400"/><rect x="1732" y="84" fill="#ff0200"/><rect x="1744" y="84" fill="#ff0000"/><rect x="1300" y="96" fill="#00ff38"/><rect x="1312" y="96" fill="#00ff38"/><rect x="1324" y="96" fill="#00ff37"/><rect x="1336" y="96" fill="#1cff36"/><rect x="1348" y="96" fill="#38ff36"/><rect x="1360" y="96" fill="#57ff35"/><rect x="1372" y="96" fill="#78ff34"/><rect x="1384" y="96" fill="#9aff33"/><rect x="1396" y="96" fill="#c0ff32"/><rect x="1408" y="96" fill="#e8ff31"/><rect x="1420" y="96" fill="#ffec2c"/><rect x="1432" y="96" fill="#ffca25"/><rect x="1444" y="96" fill="#ffae1f"/><rect x="1456" y="96" fill="#ff981a"/><rect x="1468" y="96" fill="#ff8516"/><rect x="1480" y="96" fill="#ff7513"/><rect x="1492" y="96" fill="#ff6810"/><rect x="1504" y="96" fill="#ff5c0d"/><rect x="1516" y="96" fill="#ff510b"/><rect x="1528" y="96" fill="#ff4809"/><rect x="1540" y="96" fill="#ff4007"/><rect x="1552" y="96" fill="#ff3906"/><rect x="1564" y="96" fill="#ff3205"/><rect x="1576" y="96" fill="#ff2d03"/><rect x="1588" y="96" fill="#ff2702"/><rect x="1600" y="96" fill="#ff2201"/><rect x="1612" y="96" fill="#ff1e00"/><rect x="1624" y="96" fill="#ff1a00"/><rect x="1636" y="96" fill="#ff1600"/><rect x="1648" y="96" fill="#ff1200"/><rect x="1660" y="96" fill="#ff0f00"/><rect x="1672" y="96" fill="#ff0c00"/><rect x="1684" y="96" fill="#ff0900"/><rect x="1696" y="96" fill="#ff0600"/><rect x="1708" y="96" fill="#ff0400"/><rect x="1720" y="96" fill="#ff0200"/><rect x="1732" y="96" fill="#ff0000"/><rect x="1744" y="96" fill="#ff0000"/><rect x="1300" y="108" fill="#00ff51"/><rect x="1312" y="108" fill="#00ff52"/><rect x="1324" y="108" fill="#00ff52"/><rect x="1336" y="108" fill="#18ff52"/><rect x="1348" y="108" fill="#35ff52"/><rect x="1360" y="108" fill="#55ff52"/><rect x="1372" y="108" fill="#77ff52"/><rect x="1384" y="108" fill="#9bff53"/><rect x="1396" y="108" fill="#c2ff53"/><rect x="1408" y="108" fill="#ebff53"/><rect x="1420" y="108" fill="#ffe84c"/><rect x="1432" y="108" fill="#ffc541"/><rect x="1444" y="108" fill="#ffaa38"/><rect x="1456" y="108" fill="#ff9331"/><rect x="1468" y="108" fill="#ff812b"/><rect x="1480" y="108" fill="#ff7126"/><rect x="1492" y="108" fill="#ff6421"/><rect x="1504" y="108" fill="#ff581e"/><rect x="1516" y="108" fill="#ff4e1a"/><rect x="1528" y="108" fill="#ff4517"/><rect x="1540" y="108" fill="#ff3d15"/><rect x="1552" y="108" fill="#ff3613"/><rect x="1564" y="108" fill="#ff2f11"/><rect x="1576" y="108" fill="#ff290f"/><rect x="1588" y="108" fill="#ff240d"/><rect x="1600" y="108" fill="#ff1f0b"/><rect x="1612" y="108" fill="#ff1b0a"/><rect x="1624" y="108" fill="#ff1709"/><rect x="1636" y="108" fill="#ff1308"/><rect x="1648" y="108" fill="#ff1006"/><rect x="1660" y="108" fill="#ff0d05"/><rect x="1672" y="108" fill="#ff0a04"/><rect x="1684" y="108" fill="#ff0704"/><rect x="1696" y="108" fill="#ff0403"/><rect x="1708" y="108" fill="#ff0202"/><rect x="1720" y="108" fill="#ff0001"/><rect x="1732" y="108" fill="#ff0001"/><rect x="1744" y="108" fill="#ff0000"/><rect x="1300" y="120" fill="#00ff6c"/><rect x="1312" y="120" fill="#00ff6d"/><rect x="1324" y="120" fill="#00ff6e"/><rect x="1336" y="120" fill="#14ff6f"/><rect x="1348" y="120" fill="#32ff70"/><rect x="1360" y="120" fill="#53ff72"/><rect x="1372" y="120" fill="#76ff73"/><rect x="1384" y="120" fill="#9bff74"/><rect x="1396" y="120" fill="#c3ff76"/><rect x="1408" y="120" fill="#efff78"/><rect x="1420" y="120" fill="#ffe36c"/><rect x="1432" y="120" fill="#ffc15d"/><rect x="1444" y="120" fill="#ffa551"/><rect x="1456" y="120" fill="#ff8f48"/><rect x="1468" y="120" fill="#ff7c40"/><rect x="1480" y="120" fill="#ff6d39"/><rect x="1492" y="120" fill="#ff5f33"/><rect x="1504" y="120" fill="#ff542e"/><rect x="1516" y="120" fill="#ff4a2a"/><rect x="1528" y="120" fill="#ff4126"/><rect x="1540" y="120" fill="#ff3922"/><rect x="1552" y="120" fill="#ff321f"/><rect x="1564" y="120" fill="#ff2c1d"/><rect x="1576" y="120" fill="#ff261a"/><rect x="1588" y="120" fill="#ff2118"/><rect x="1600" y="120" fill="#ff1c16"/><rect x="1612" y="120" fill="#ff1814"/><rect x="1624" y="120" fill="#ff1412"/><rect x="1636" y="120" fill="#ff1011"/><rect x="1648" y="120" fill="#ff0d0f"/><rect x="1660" y="120" fill="#ff0a0e"/><rect x="1672" y="120" fill="#ff070d"/><rect x="1684" y="120" fill="#ff040c"/><rect x="1696" y="120" fill="#ff020a"/><rect x="1708" y="120" fill="#ff0009"/><rect x="1720" y="120" fill="#ff0008"/><rect x="1732" y="120" fill="#ff0008"/><rect x="1744" y="120" fill="#ff0007"/><rect x="1300" y="132" fill="#00ff89"/><rect x="1312" y="132" fill="#00ff8a"/><rect x="1324" y="132" fill="#00ff8c"/><rect x="1336" y="132" fill="#10ff8f"/><rect x="1348" y="132" fill="#2fff91"/><rect x="1360" y="132" fill="#51ff93"/><rect x="1372" y="132" fill="#75ff96"/><rect x="1384" y="132" fill="#9bff99"/><rect x="1396" y="132" fill="#c5ff9c"/><rect x="1408" y="132" fill="#f3ff9f"/><rect x="1420" y="132" fill="#ffde8e"/><rect x="1432" y="132" fill="#ffbc7b"/><rect x="1444" y="132" fill="#ffa06c"/><rect x="1456" y="132" fill="#ff8a5f"/><rect x="1468" y="132" fill="#ff7855"/><rect x="1480" y="132" fill="#ff684c"/><rect x="1492" y="132" fill="#ff5b45"/><rect x="1504" y="132" fill="#ff503f"/><rect x="1516" y="132" fill="#ff4639"/><rect x="1528" y="132" fill="#ff3d35"/><rect x="1540" y="132" fill="#ff3630"/><rect x="1552" y="132" fill="#ff2f2d"/><rect x="1564" y="132" fill="#ff2929"/><rect x="1576" y="132" fill="#ff2326"/><rect x="1588" y="132" fill="#ff1e23"/><rect x="1600" y="132" fill="#ff1921"/><rect x="1612" y="132" fill="#ff151e"/><rect x="1624" y="132" fill="#ff111c"/><rect x="1636" y="132" fill="#ff0e1a"/><rect x="1648" y="132" fill="#ff0a18"/><rect x="1660" y="132" fill="#ff0717"/><rect x="1672" y="132" fill="#ff0515"/><rect x="1684" y="132" fill="#ff0214"/><rect x="1696" y="132" fill="#ff0012"/><rect x="1708" y="132" fill="#ff0011"/><rect x="1720" y="132" fill="#ff0010"/><rect x="1732" y="132" fill="#ff000f"/><rect x="1744" y="132" fill="#ff000e"/><rect x="1300" y="144" fill="#00ffa7"/><rect x="1312" y="144" fill="#00ffaa"/><rect x="1324" y="144" fill="#00ffad"/><rect x="1336" y="144" fill="#0bffb0"/><rect x="1348" y="144" fill="#2cffb4"/><rect x="1360" y="144" fill="#4effb7"/><rect x="1372" y="144" fill="#73ffbc"/><rect x="1384" y="144" fill="#9cffc0"/><rect x="1396" y="144" fill="#c7ffc5"/><rect x="1408" y="144" fill="#f7ffca"/><rect x="1420" y="144" fill="#ffdab1"/><rect x="1432" y="144" fill="#ffb799"/><rect x="1444" y="144" fill="#ff9b87"/><rect x="1456" y="144" fill="#ff8578"/><rect x="1468" y="144" fill="#ff736b"/><rect x="1480" y="144" fill="#ff6461"/><rect x="1492" y="144" fill="#ff5758"/><rect x="1504" y="144" fill="#ff4c50"/><rect x="1516" y="144" fill="#ff4249"/><rect x="1528" y="144" fill="#ff3a44"/><rect x="1540" y="144" fill="#ff323e"/><rect x="1552" y="144" fill="#ff2b3a"/><rect x="1564" y="144" fill="#ff2536"/><rect x="1576" y="144" fill="#ff2032"/><rect x="1588" y="144" fill="#ff1b2f"/><rect x="1600" y="144" fill="#ff162c"/><rect x="1612" y="144" fill="#ff1229"/><rect x="1624" y="144" fill="#ff0e26"/><rect x="1636" y="144" fill="#ff0b24"/><rect x="1648" y="144" fill="#ff0822"/><rect x="1660" y="144" fill="#ff0520"/><rect x="1672" y="144" fill="#ff021e"/><rect x="1684" y="144" fill="#ff001c"/><rect x="1696" y="144" fill="#ff001a"/><rect x="1708" y="144" fill="#ff0019"/><rect x="1720" y="144" fill="#ff0017"/><rect x="1732" y="144" fill="#ff0016"/><rect x="1744" y="144" fill="#ff0015"/><rect x="1300" y="156" fill="#00ffc7"/><rect x="1312" y="156" fill="#00ffcb"/><rect x="1324" y="156" fill="#00ffcf"/><rect x="1336" y="156" fill="#07ffd4"/><rect x="1348" y="156" fill="#28ffd9"/><rect x="1360" y="156" fill="#4cffde"/><rect x="1372" y="156" fill="#72ffe4"/><rect x="1384" y="156" fill="#9cffea"/><rect x="1396" y="156" fill="#cafff1"/><rect x="1408" y="156" fill="#fcfff9"/><rect x="1420" y="156" fill="#ffd4d6"/><rect x="1432" y="156" fill="#ffb2b9"/><rect x="1444" y="156" fill="#ff96a3"/><rect x="1456" y="156" fill="#ff8091"/><rect x="1468" y="156" fill="#ff6e82"/><rect x="1480" y="156" fill="#ff5f75"/><rect x="1492" y="156" fill="#ff536b"/><rect x="1504" y="156" fill="#ff4862"/><rect x="1516" y="156" fill="#ff3e5a"/><rect x="1528" y="156" fill="#ff3653"/><rect x="1540" y="156" fill="#ff2e4d"/><rect x="1552" y="156" fill="#ff2847"/><rect x="1564" y="156" fill="#ff2243"/><rect x="1576" y="156" fill="#ff1c3e"/><rect x="1588" y="156" fill="#ff183a"/><rect x="1600" y="156" fill="#ff1337"/><rect x="1612" y="156" fill="#ff0f33"/><rect x="1624" y="156" fill="#ff0c30"/><rect x="1636" y="156" fill="#ff082d"/><rect x="1648" y="156" fill="#ff052b"/><rect x="1660" y="156" fill="#ff0228"/><rect x="1672" y="156" fill="#ff0026"/><rect x="1684" y="156" fill="#ff0024"/><rect x="1696" y="156" fill="#ff0022"/><rect x="1708" y="156" fill="#ff0020"/><rect x="1720" y="156" fill="#ff001f"/><rect x="1732" y="156" fill="#ff001d"/><rect x="1744" y="156" fill="#ff001c"/><rect x="1300" y="168" fill="#00ffe9"/><rect x="1312" y="168" fill="#00ffee"/><rect x="1324" y="168" fill="#00fff4"/><rect x="1336" y="168" fill="#02fffa"/><rect x="1348" y="168" fill="#24fdff"/><rect x="1360" y="168" fill="#46f6ff"/><rect x="1372" y="168" fill="#6aefff"/><rect x="1384" y="168" fill="#8ee8ff"/><rect x="1396" y="168" fill="#b4e0ff"/><rect x="1408" y="168" fill="#dad9ff"/><rect x="1420" y="168" fill="#ffcffd"/><rect x="1432" y="168" fill="#ffacdb"/><rect x="1444" y="168" fill="#ff91c0"/><rect x="1456" y="168" fill="#ff7bab"/><rect x="1468" y="168" fill="#ff6999"/><rect x="1480" y="168" fill="#ff5b8b"/><rect x="1492" y="168" fill="#ff4e7e"/><rect x="1504" y="168" fill="#ff4374"/><rect x="1516" y="168" fill="#ff3a6b"/><rect x="1528" y="168" fill="#ff3263"/><rect x="1540" y="168" fill="#ff2a5c"/><rect x="1552" y="168" fill="#ff2455"/><rect x="1564" y="168" fill="#ff1e50"/><rect x="1576" y="168" fill="#ff194a"/><rect x="1588" y="168" fill="#ff1446"/><rect x="1600" y="168" fill="#ff1042"/><rect x="1612" y="168" fill="#ff0c3e"/><rect x="1624" y="168" fill="#ff093a"/><rect x="1636" y="168" fill="#ff0537"/><rect x="1648" y="168" fill="#ff0234"/><rect x="1660" y="168" fill="#ff0031"/><rect x="1672" y="168" fill="#ff002f"/><rect x="1684" y="168" fill="#ff002d"/><rect x="1696" y="168" fill="#ff002a"/><rect x="1708" y="168" fill="#ff0028"/><rect x="1720" y="168" fill="#ff0026"/><rect x="1732" y="168" fill="#ff0024"/><rect x="1744" y="168" fill="#ff0023"/><rect x="1300" y="180" fill="#00f1ff"/><rect x="1312" y="180" fill="#00ebff"/><rect x="1324" y="180" fill="#00e5ff"/><rect x="1336" y="180" fill="#00dfff"/><rect x="1348" y="180" fill="#1bd9ff"/><rect x="1360" y="180" fill="#39d2ff"/><rect x="1372" y="180" fill="#59cbff"/><rect x="1384" y="180" fill="#79c5ff"/><rect x="1396" y="180" fill="#9abeff"/><rect x="1408" y="180" fill="#bbb6ff"/><rect x="1420" y="180" fill="#deafff"/><rect x="1432" y="180" fill="#ffa7fd"/><rect x="1444" y="180" fill="#ff8cde"/><rect x="1456" y="180" fill="#ff76c6"/><rect x="1468" y="180" fill="#ff64b1"/><rect x="1480" y="180" fill="#ff56a1"/><rect x="1492" y="180" fill="#ff4992"/><rect x="1504" y="180" fill="#ff3f86"/><rect x="1516" y="180" fill="#ff367c"/><rect x="1528" y="180" fill="#ff2e73"/><rect x="1540" y="180" fill="#ff276a"/><rect x="1552" y="180" fill="#ff2063"/><rect x="1564" y="180" fill="#ff1b5d"/><rect x="1576" y="180" fill="#ff1657"/><rect x="1588" y="180" fill="#ff1152"/><rect x="1600" y="180" fill="#ff0d4d"/><rect x="1612" y="180" fill="#ff0949"/><rect x="1624" y="180" fill="#ff0645"/><rect x="1636" y="180" fill="#ff0341"/><rect x="1648" y="180" fill="#ff003e"/><rect x="1660" y="180" fill="#ff003b"/><rect x="1672" y="180" fill="#ff0038"/><rect x="1684" y="180" fill="#ff0035"/><rect x="1696" y="180" fill="#ff0032"/><rect x="1708" y="180" fill="#ff0030"/><rect x="1720" y="180" fill="#ff002e"/><rect x="1732" y="180" fill="#ff002c"/><rect x="1744" y="180" fill="#ff002a"/><rect x="1300" y="192" fill="#00d3ff"/><rect x="1312" y="192" fill="#00cdff"/><rect x="1324" y="192" fill="#00c7ff"/><rect x="1336" y="192" fill="#00c1ff"/><rect x="1348" y="192" fill="#14bbff"/><rect x="1360" y="192" fill="#2fb5ff"/><rect x="1372" y="192" fill="#4bafff"/><rect x="1384" y="192" fill="#68a9ff"/><rect x="1396" y="192" fill="#85a2ff"/><rect x="1408" y="192" fill="#a39bff"/><rect x="1420" y="192" fill="#c295ff"/><rect x="1432" y="192" fill="#e18eff"/><rect x="1444" y="192" fill="#ff86fe"/><rect x="1456" y="192" fill="#ff71e1"/><rect x="1468" y="192" fill="#ff5fca"/><rect x="1480" y="192" fill="#ff51b7"/><rect x="1492" y="192" fill="#ff45a7"/><rect x="1504" y="192" fill="#ff3a99"/><rect x="1516" y="192" fill="#ff318d"/><rect x="1528" y="192" fill="#ff2a83"/><rect x="1540" y="192" fill="#ff237a"/><rect x="1552" y="192" fill="#ff1d72"/><rect x="1564" y="192" fill="#ff176a"/><rect x="1576" y="192" fill="#ff1264"/><rect x="1588" y="192" fill="#ff0e5e"/><rect x="1600" y="192" fill="#ff0a59"/><rect x="1612" y="192" fill="#ff0654"/><rect x="1624" y="192" fill="#ff034f"/><rect x="1636" y="192" fill="#ff004b"/><rect x="1648" y="192" fill="#ff0047"/><rect x="1660" y="192" fill="#ff0044"/><rect x="1672" y="192" fill="#ff0041"/><rect x="1684" y="192" fill="#ff003e"/><rect x="1696" y="192" fill="#ff003b"/><rect x="1708" y="192" fill="#ff0038"/><rect x="1720" y="192" fill="#ff0036"/><rect x="1732" y="192" fill="#ff0033"/><rect x="1744" y="192" fill="#ff0031"/><rect x="1300" y="204" fill="#00baff"/><rect x="1312" y="204" fill="#00b4ff"/><rect x="1324" y="204" fill="#00afff"/><rect x="1336" y="204" fill="#00a9ff"/><rect x="1348" y="204" fill="#0ea3ff"/><rect x="1360" y="204" fill="#279eff"/><rect x="1372" y="204" fill="#4098ff"/><rect x="1384" y="204" fill="#5a92ff"/><rect x="1396" y="204" fill="#758cff"/><rect x="1408" y="204" fill="#9085ff"/><rect x="1420" y="204" fill="#ab7fff"/><rect x="1432" y="204" fill="#c779ff"/><rect x="1444" y="204" fill="#e372ff"/><rect x="1456" y="204" fill="#ff6bfe"/><rect x="1468" y="204" fill="#ff5ae4"/><rect x="1480" y="204" fill="#ff4cce"/><rect x="1492" y="204" fill="#ff40bc"/><rect x="1504" y="204" fill="#ff36ad"/><rect x="1516" y="204" fill="#ff2d9f"/><rect x="1528" y="204" fill="#ff2593"/><rect x="1540" y="204" fill="#ff1f89"/><rect x="1552" y="204" fill="#ff1980"/><rect x="1564" y="204" fill="#ff1378"/><rect x="1576" y="204" fill="#ff0f71"/><rect x="1588" y="204" fill="#ff0a6a"/><rect x="1600" y="204" fill="#ff0664"/><rect x="1612" y="204" fill="#ff035f"/><rect x="1624" y="204" fill="#ff005a"/><rect x="1636" y="204" fill="#ff0055"/><rect x="1648" y="204" fill="#ff0051"/><rect x="1660" y="204" fill="#ff004d"/><rect x="1672" y="204" fill="#ff004a"/><rect x="1684" y="204" fill="#ff0046"/><rect x="1696" y="204" fill="#ff0043"/><rect x="1708" y="204" fill="#ff0040"/><rect x="1720" y="204" fill="#ff003d"/><rect x="1732" y="204" fill="#ff003b"/><rect x="1744" y="204" fill="#ff0038"/><rect x="1300" y="216" fill="#00a5ff"/><rect x="1312" y="216" fill="#009fff"/><rect x="1324" y="216" fill="#009aff"/><rect x="1336" y="216" fill="#0095ff"/><rect x="1348" y="216" fill="#098fff"/><rect x="1360" y="216" fill="#208aff"/><rect x="1372" y="216" fill="#3784ff"/><rect x="1384" y="216" fill="#4f7fff"/><rect x="1396" y="216" fill="#6779ff"/><rect x="1408" y="216" fill="#7f73ff"/><rect x="1420" y="216" fill="#986dff"/><rect x="1432" y="216" fill="#b167ff"/><rect x="1444" y="216" fill="#cb61ff"/><rect x="1456" y="216" fill="#e55bff"/><rect x="1468" y="216" fill="#ff54fe"/><rect x="1480" y="216" fill="#ff46e6"/><rect x="1492" y="216" fill="#ff3bd2"/><rect x="1504" y="216" fill="#ff31c0"/><rect x="1516" y="216" fill="#ff28b1"/><rect x="1528" y="216" fill="#ff21a4"/><rect x="1540" y="216" fill="#ff1b99"/><rect x="1552" y="216" fill="#ff158f"/><rect x="1564" y="216" fill="#ff1086"/><rect x="1576" y="216" fill="#ff0b7e"/><rect x="1588" y="216" fill="#ff0777"/><rect x="1600" y="216" fill="#ff0370"/><rect x="1612" y="216" fill="#ff006a"/><rect x="1624" y="216" fill="#ff0065"/><rect x="1636" y="216" fill="#ff0060"/><rect x="1648" y="216" fill="#ff005b"/><rect x="1660" y="216" fill="#ff0057"/><rect x="1672" y="216" fill="#ff0053"/><rect x="1684" y="216" fill="#ff004f"/><rect x="1696" y="216" fill="#ff004c"/><rect x="1708" y="216" fill="#ff0048"/><rect x="1720" y="216" fill="#ff0045"/><rect x="1732" y="216" fill="#ff0043"/><rect x="1744" y="216" fill="#ff0040"/><rect x="1300" y="228" fill="#0093ff"/><rect x="1312" y="228" fill="#008eff"/><rect x="1324" y="228" fill="#0089ff"/><rect x="1336" y="228" fill="#0084ff"/><rect x="1348" y="228" fill="#057fff"/><rect x="1360" y="228" fill="#1a79ff"/><rect x="1372" y="228" fill="#3074ff"/><rect x="1384" y="228" fill="#456fff"/><rect x="1396" y="228" fill="#5b69ff"/><rect x="1408" y="228" fill="#7264ff"/><rect x="1420" y="228" fill="#895eff"/><rect x="1432" y="228" fill="#a059ff"/><rect x="1444" y="228" fill="#b753ff"/><rect x="1456" y="228" fill="#cf4dff"/><rect x="1468" y="228" fill="#e747ff"/><rect x="1480" y="228" fill="#ff41fe"/><rect x="1492" y="228" fill="#ff36e8"/><rect x="1504" y="228" fill="#ff2cd5"/><rect x="1516" y="228" fill="#ff24c4"/><rect x="1528" y="228" fill="#ff1db6"/><rect x="1540" y="228" fill="#ff16a9"/><rect x="1552" y="228" fill="#ff119e"/><rect x="1564" y="228" fill="#ff0c94"/><rect x="1576" y="228" fill="#ff078b"/><rect x="1588" y="228" fill="#ff0383"/><rect x="1600" y="228" fill="#ff007c"/><rect x="1612" y="228" fill="#ff0076"/><rect x="1624" y="228" fill="#ff0070"/><rect x="1636" y="228" fill="#ff006a"/><rect x="1648" y="228" fill="#ff0065"/><rect x="1660" y="228" fill="#ff0060"/><rect x="1672" y="228" fill="#ff005c"/><rect x="1684" y="228" fill="#ff0058"/><rect x="1696" y="228" fill="#ff0054"/><rect x="1708" y="228" fill="#ff0051"/><rect x="1720" y="228" fill="#ff004d"/><rect x="1732" y="228" fill="#ff004a"/><rect x="1744" y="228" fill="#ff0047"/><rect x="1300" y="240" fill="#0083ff"/><rect x="1312" y="240" fill="#007eff"/><rect x="1324" y="240" fill="#007aff"/><rect x="1336" y="240" fill="#0075ff"/><rect x="1348" y="240" fill="#0170ff"/><rect x="1360" y="240" fill="#156bff"/><rect x="1372" y="240" fill="#2966ff"/><rect x="1384" y="240" fill="#3d61ff"/><rect x="1396" y="240" fill="#515cff"/><rect x="1408" y="240" fill="#6657ff"/><rect x="1420" y="240" fill="#7b52ff"/><rect x="1432" y="240" fill="#904cff"/><rect x="1444" y="240" fill="#a647ff"/><rect x="1456" y="240" fill="#bc41ff"/><rect x="1468" y="240" fill="#d23cff"/><rect x="1480" y="240" fill="#e936ff"/><rect x="1492" y="240" fill="#ff30ff"/><rect x="1504" y="240" fill="#ff27e9"/><rect x="1516" y="240" fill="#ff1fd7"/><rect x="1528" y="240" fill="#ff18c8"/><rect x="1540" y="240" fill="#ff12ba"/><rect x="1552" y="240" fill="#ff0dae"/><rect x="1564" y="240" fill="#ff08a3"/><rect x="1576" y="240" fill="#ff0499"/><rect x="1588" y="240" fill="#ff0090"/><rect x="1600" y="240" fill="#ff0088"/><rect x="1612" y="240" fill="#ff0081"/><rect x="1624" y="240" fill="#ff007b"/><rect x="1636" y="240" fill="#ff0075"/><rect x="1648" y="240" fill="#ff006f"/><rect x="1660" y="240" fill="#ff006a"/><rect x="1672" y="240" fill="#ff0065"/><rect x="1684" y="240" fill="#ff0061"/><rect x="1696" y="240" fill="#ff005d"/><rect x="1708" y="240" fill="#ff0059"/><rect x="1720" y="240" fill="#ff0055"/><rect x="1732" y="240" fill="#ff0052"/><rect x="1744" y="240" fill="#ff004f"/><rect x="1300" y="252" fill="#0075ff"/><rect x="1312" y="252" fill="#0071ff"/><rect x="1324" y="252" fill="#006dff"/><rect x="1336" y="252" fill="#0068ff"/><rect x="1348" y="252" fill="#0063ff"/><rect x="1360" y="252" fill="#115fff"/><rect x="1372" y="252" fill="#235aff"/><rect x="1384" y="252" fill="#3655ff"/><rect x="1396" y="252" fill="#4950ff"/><rect x="1408" y="252" fill="#5c4cff"/><rect x="1420" y="252" fill="#7047ff"/><rect x="1432" y="252" fill="#8342ff"/><rect x="1444" y="252" fill="#973dff"/><rect x="1456" y="252" fill="#ac37ff"/><rect x="1468" y="252" fill="#c032ff"/><rect x="1480" y="252" fill="#d52dff"/><rect x="1492" y="252" fill="#ea27ff"/><rect x="1504" y="252" fill="#ff22ff"/><rect x="1516" y="252" fill="#ff1aeb"/><rect x="1528" y="252" fill="#ff14da"/><rect x="1540" y="252" fill="#ff0ecb"/><rect x="1552" y="252" fill="#ff09bd"/><rect x="1564" y="252" fill="#ff04b1"/><rect x="1576" y="252" fill="#ff00a7"/><rect x="1588" y="252" fill="#ff009d"/><rect x="1600" y="252" fill="#ff0095"/><rect x="1612" y="252" fill="#ff008d"/><rect x="1624" y="252" fill="#ff0086"/><rect x="1636" y="252" fill="#ff007f"/><rect x="1648" y="252" fill="#ff0079"/><rect x="1660" y="252" fill="#ff0074"/><rect x="1672" y="252" fill="#ff006f"/><rect x="1684" y="252" fill="#ff006a"/><rect x="1696" y="252" fill="#ff0065"/><rect x="1708" y="252" fill="#ff0061"/><rect x="1720" y="252" fill="#ff005d"/><rect x="1732" y="252" fill="#ff005a"/><rect x="1744" y="252" fill="#ff0056"/><rect x="1300" y="264" fill="#006aff"/><rect x="1312" y="264" fill="#0065ff"/><rect x="1324" y="264" fill="#0061ff"/><rect x="1336" y="264" fill="#005dff"/><rect x="1348" y="264" fill="#0058ff"/><rect x="1360" y="264" fill="#0d54ff"/><rect x="1372" y="264" fill="#1e50ff"/><rect x="1384" y="264" fill="#304bff"/><rect x="1396" y="264" fill="#4146ff"/><rect x="1408" y="264" fill="#5342ff"/><rect x="1420" y="264" fill="#663dff"/><rect x="1432" y="264" fill="#7838ff"/><rect x="1444" y="264" fill="#8a33ff"/><rect x="1456" y="264" fill="#9d2fff"/><rect x="1468" y="264" fill="#b02aff"/><rect x="1480" y="264" fill="#c425ff"/><rect x="1492" y="264" fill="#d720ff"/><rect x="1504" y="264" fill="#eb1bff"/><rect x="1516" y="264" fill="#ff15ff"/><rect x="1528" y="264" fill="#ff0fec"/><rect x="1540" y="264" fill="#ff09dc"/><rect x="1552" y="264" fill="#ff04cd"/><rect x="1564" y="264" fill="#ff00c0"/><rect x="1576" y="264" fill="#ff00b5"/><rect x="1588" y="264" fill="#ff00ab"/><rect x="1600" y="264" fill="#ff00a1"/><rect x="1612" y="264" fill="#ff0099"/><rect x="1624" y="264" fill="#ff0091"/><rect x="1636" y="264" fill="#ff008a"/><rect x="1648" y="264" fill="#ff0084"/><rect x="1660" y="264" fill="#ff007e"/><rect x="1672" y="264" fill="#ff0078"/><rect x="1684" y="264" fill="#ff0073"/><rect x="1696" y="264" fill="#ff006e"/><rect x="1708" y="264" fill="#ff006a"/><rect x="1720" y="264" fill="#ff0066"/><rect x="1732" y="264" fill="#ff0062"/><rect x="1744" y="264" fill="#ff005e"/><rect x="1300" y="276" fill="#005fff"/><rect x="1312" y="276" fill="#005bff"/><rect x="1324" y="276" fill="#0057ff"/><rect x="1336" y="276" fill="#0053ff"/><rect x="1348" y="276" fill="#004fff"/><rect x="1360" y="276" fill="#094aff"/><rect x="1372" y="276" fill="#1a46ff"/><rect x="1384" y="276" fill="#2a42ff"/><rect x="1396" y="276" fill="#3b3eff"/><rect x="1408" y="276" fill="#4c39ff"/><rect x="1420" y="276" fill="#5d35ff"/><rect x="1432" y="276" fill="#6e30ff"/><rect x="1444" y="276" fill="#7f2cff"/><rect x="1456" y="276" fill="#9127ff"/><rect x="1468" y="276" fill="#a322ff"/><rect x="1480" y="276" fill="#b51eff"/><rect x="1492" y="276" fill="#c719ff"/><rect x="1504" y="276" fill="#d914ff"/><rect x="1516" y="276" fill="#ec0fff"/><rect x="1528" y="276" fill="#ff0aff"/><rect x="1540" y="276" fill="#ff05ed"/><rect x="1552" y="276" fill="#ff00de"/><rect x="1564" y="276" fill="#ff00d0"/><rect x="1576" y="276" fill="#ff00c3"/><rect x="1588" y="276" fill="#ff00b8"/><rect x="1600" y="276" fill="#ff00ae"/><rect x="1612" y="276" fill="#ff00a5"/><rect x="1624" y="276" fill="#ff009d"/><rect x="1636" y="276" fill="#ff0095"/><rect x="1648" y="276" fill="#ff008e"/><rect x="1660" y="276" fill="#ff0088"/><rect x="1672" y="276" fill="#ff0082"/><rect x="1684" y="276" fill="#ff007c"/><rect x="1696" y="276" fill="#ff0077"/><rect x="1708" y="276" fill="#ff0072"/><rect x="1720" y="276" fill="#ff006e"/><rect x="1732" y="276" fill="#ff006a"/><rect x="1744" y="276" fill="#ff0066"/><rect x="1300" y="288" fill="#0056ff"/><rect x="1312" y="288" fill="#0052ff"/><rect x="1324" y="288" fill="#004eff"/><rect x="1336" y="288" fill="#004aff"/><rect x="1348" y="288" fill="#0046ff"/><rect x="1360" y="288" fill="#0642ff"/><rect x="1372" y="288" fill="#163eff"/><rect x="1384" y="288" fill="#253aff"/><rect x="1396" y="288" fill="#3536ff"/><rect x="1408" y="288" fill="#4531ff"/><rect x="1420" y="288" fill="#552dff"/><rect x="1432" y="288" fill="#6529ff"/><rect x="1444" y="288" fill="#7525ff"/><rect x="1456" y="288" fill="#8620ff"/><rect x="1468" y="288" fill="#971cff"/><rect x="1480" y="288" fill="#a817ff"/><rect x="1492" y="288" fill="#b913ff"/><rect x="1504" y="288" fill="#ca0eff"/><rect x="1516" y="288" fill="#db0aff"/><rect x="1528" y="288" fill="#ed05ff"/><rect x="1540" y="288" fill="#ff00ff"/><rect x="1552" y="288" fill="#ff00ee"/><rect x="1564" y="288" fill="#ff00df"/><rect x="1576" y="288" fill="#ff00d2"/><rect x="1588" y="288" fill="#ff00c6"/><rect x="1600" y="288" fill="#ff00bb"/><rect x="1612" y="288" fill="#ff00b1"/><rect x="1624" y="288" fill="#ff00a9"/><rect x="1636" y="288" fill="#ff00a0"/><rect x="1648" y="288" fill="#ff0099"/><rect x="1660" y="288" fill="#ff0092"/><rect x="1672" y="288" fill="#ff008c"/><rect x="1684" y="288" fill="#ff0086"/><rect x="1696" y="288" fill="#ff0080"/><rect x="1708" y="288" fill="#ff007b"/><rect x="1720" y="288" fill="#ff0076"/><rect x="1732" y="288" fill="#ff0072"/><rect x="1744" y="288" fill="#ff006e"/><rect x="1300" y="300" fill="#004dff"/><rect x="1312" y="300" fill="#004aff"/><rect x="1324" y="300" fill="#0046ff"/><rect x="1336" y="300" fill="#0042ff"/><rect x="1348" y="300" fill="#003eff"/><rect x="1360" y="300" fill="#043aff"/><rect x="1372" y="300" fill="#1237ff"/><rect x="1384" y="300" fill="#2133ff"/><rect x="1396" y="300" fill="#302fff"/><rect x="1408" y="300" fill="#3f2bff"/><rect x="1420" y="300" fill="#4e27ff"/><rect x="1432" y="300" fill="#5d22ff"/><rect x="1444" y="300" fill="#6d1eff"/><rect x="1456" y="300" fill="#7c1aff"/><rect x="1468" y="300" fill="#8c16ff"/><rect x="1480" y="300" fill="#9c12ff"/><rect x="1492" y="300" fill="#ac0dff"/><rect x="1504" y="300" fill="#bc09ff"/><rect x="1516" y="300" fill="#cc05ff"/><rect x="1528" y="300" fill="#dd00ff"/><rect x="1540" y="300" fill="#ee00ff"/><rect x="1552" y="300" fill="#ff00ff"/><rect x="1564" y="300" fill="#ff00ef"/><rect x="1576" y="300" fill="#ff00e1"/><rect x="1588" y="300" fill="#ff00d4"/><rect x="1600" y="300" fill="#ff00c8"/><rect x="1612" y="300" fill="#ff00be"/><rect x="1624" y="300" fill="#ff00b4"/><rect x="1636" y="300" fill="#ff00ac"/><rect x="1648" y="300" fill="#ff00a4"/><rect x="1660" y="300" fill="#ff009c"/><rect x="1672" y="300" fill="#ff0096"/><rect x="1684" y="300" fill="#ff008f"/><rect x="1696" y="300" fill="#ff0089"/><rect x="1708" y="300" fill="#ff0084"/><rect x="1720" y="300" fill="#ff007f"/><rect x="1732" y="300" fill="#ff007a"/><rect x="1744" y="300" fill="#ff0076"/><rect x="1300" y="312" fill="#0046ff"/><rect x="1312" y="312" fill="#0042ff"/><rect x="1324" y="312" fill="#003fff"/><rect x="1336" y="312" fill="#003bff"/><rect x="1348" y="312" fill="#0037ff"/><rect x="1360" y="312" fill="#0134ff"/><rect x="1372" y="312" fill="#0f30ff"/><rect x="1384" y="312" fill="#1d2cff"/><rect x="1396" y="312" fill="#2b28ff"/><rect x="1408" y="312" fill="#3925ff"/><rect x="1420" y="312" fill="#4821ff"/><rect x="1432" y="312" fill="#561dff"/><rect x="1444" y="312" fill="#6519ff"/><rect x="1456" y="312" fill="#7315ff"/><rect x="1468" y="312" fill="#8211ff"/><rect x="1480" y="312" fill="#910dff"/><rect x="1492" y="312" fill="#a009ff"/><rect x="1504" y="312" fill="#b004ff"/><rect x="1516" y="312" fill="#bf00ff"/><rect x="1528" y="312" fill="#cf00ff"/><rect x="1540" y="312" fill="#df00ff"/><rect x="1552" y="312" fill="#ef00ff"/><rect x="1564" y="312" fill="#ff00ff"/><rect x="1576" y="312" fill="#ff00f0"/><rect x="1588" y="312" fill="#ff00e2"/><rect x="1600" y="312" fill="#ff00d6"/><rect x="1612" y="312" fill="#ff00cb"/><rect x="1624" y="312" fill="#ff00c1"/><rect x="1636" y="312" fill="#ff00b7"/><rect x="1648" y="312" fill="#ff00af"/><rect x="1660" y="312" fill="#ff00a7"/><rect x="1672" y="312" fill="#ff00a0"/><rect x="1684" y="312" fill="#ff0099"/><rect x="1696" y="312" fill="#ff0093"/><rect x="1708" y="312" fill="#ff008d"/><rect x="1720" y="312" fill="#ff0087"/><rect x="1732" y="312" fill="#ff0082"/><rect x="1744" y="312" fill="#ff007e"/><rect x="1300" y="324" fill="#003fff"/><rect x="1312" y="324" fill="#003bff"/><rect x="1324" y="324" fill="#0038ff"/><rect x="1336" y="324" fill="#0035ff"/><rect x="1348" y="324" fill="#0031ff"/><rect x="1360" y="324" fill="#002dff"/><rect x="1372" y="324" fill="#0c2aff"/><rect x="1384" y="324" fill="#1a26ff"/><rect x="1396" y="324" fill="#2723ff"/><rect x="1408" y="324" fill="#341fff"/><rect x="1420" y="324" fill="#421bff"/><rect x="1432" y="324" fill="#5018ff"/><rect x="1444" y="324" fill="#5d14ff"/><rect x="1456" y="324" fill="#6b10ff"/><rect x="1468" y="324" fill="#7a0cff"/><rect x="1480" y="324" fill="#8808ff"/><rect x="1492" y="324" fill="#9604ff"/><rect x="1504" y="324" fill="#a500ff"/><rect x="1516" y="324" fill="#b300ff"/><rect x="1528" y="324" fill="#c200ff"/><rect x="1540" y="324" fill="#d100ff"/><rect x="1552" y="324" fill="#e000ff"/><rect x="1564" y="324" fill="#ef00ff"/><rect x="1576" y="324" fill="#ff00ff"/><rect x="1588" y="324" fill="#ff00f1"/><rect x="1600" y="324" fill="#ff00e4"/><rect x="1612" y="324" fill="#ff00d8"/><rect x="1624" y="324" fill="#ff00cd"/><rect x="1636" y="324" fill="#ff00c3"/><rect x="1648" y="324" fill="#ff00ba"/><rect x="1660" y="324" fill="#ff00b1"/><rect x="1672" y="324" fill="#ff00aa"/><rect x="1684" y="324" fill="#ff00a3"/><rect x="1696" y="324" fill="#ff009c"/><rect x="1708" y="324" fill="#ff0096"/><rect x="1720" y="324" fill="#ff0090"/><rect x="1732" y="324" fill="#ff008b"/><rect x="1744" y="324" fill="#ff0086"/><rect x="1300" y="336" fill="#0039ff"/><rect x="1312" y="336" fill="#0035ff"/><rect x="1324" y="336" fill="#0032ff"/><rect x="1336" y="336" fill="#002fff"/><rect x="1348" y="336" fill="#002bff"/><rect x="1360" y="336" fill="#0028ff"/><rect x="1372" y="336" fill="#0a24ff"/><rect x="1384" y="336" fill="#1621ff"/><rect x="1396" y="336" fill="#231dff"/><rect x="1408" y="336" fill="#301aff"/><rect x="1420" y="336" fill="#3d16ff"/><rect x="1432" y="336" fill="#4a13ff"/><rect x="1444" y="336" fill="#570fff"/><rect x="1456" y="336" fill="#640cff"/><rect x="1468" y="336" fill="#7208ff"/><rect x="1480" y="336" fill="#7f04ff"/><rect x="1492" y="336" fill="#8d00ff"/><rect x="1504" y="336" fill="#9b00ff"/><rect x="1516" y="336" fill="#a900ff"/><rect x="1528" y="336" fill="#b700ff"/><rect x="1540" y="336" fill="#c500ff"/><rect x="1552" y="336" fill="#d300ff"/><rect x="1564" y="336" fill="#e100ff"/><rect x="1576" y="336" fill="#f000ff"/><rect x="1588" y="336" fill="#ff00ff"/><rect x="1600" y="336" fill="#ff00f1"/><rect x="1612" y="336" fill="#ff00e5"/><rect x="1624" y="336" fill="#ff00d9"/><rect x="1636" y="336" fill="#ff00cf"/><rect x="1648" y="336" fill="#ff00c5"/><rect x="1660" y="336" fill="#ff00bc"/><rect x="1672" y="336" fill="#ff00b4"/><rect x="1684" y="336" fill="#ff00ad"/><rect x="1696" y="336" fill="#ff00a5"/><rect x="1708" y="336" fill="#ff009f"/><rect x="1720" y="336" fill="#ff0099"/><rect x="1732" y="336" fill="#ff0093"/><rect x="1744" y="336" fill="#ff008e"/><rect x="1300" y="348" fill="#0033ff"/><rect x="1312" y="348" fill="#0030ff"/><rect x="1324" y="348" fill="#002dff"/><rect x="1336" y="348" fill="#0029ff"/><rect x="1348" y="348" fill="#0026ff"/><rect x="1360" y="348" fill="#0023ff"/><rect x="1372" y="348" fill="#071fff"/><rect x="1384" y="348" fill="#131cff"/><rect x="1396" y="348" fill="#2019ff"/><rect x="1408" y="348" fill="#2c15ff"/><rect x="1420" y="348" fill="#3812ff"/><rect x="1432" y="348" fill="#450fff"/><rect x="1444" y="348" fill="#510bff"/><rect x="1456" y="348" fill="#5e08ff"/><rect x="1468" y="348" fill="#6b04ff"/><rect x="1480" y="348" fill="#7700ff"/><rect x="1492" y="348" fill="#8400ff"/><rect x="1504" y="348" fill="#9200ff"/><rect x="1516" y="348" fill="#9f00ff"/><rect x="1528" y="348" fill="#ac00ff"/><rect x="1540" y="348" fill="#b900ff"/><rect x="1552" y="348" fill="#c700ff"/><rect x="1564" y="348" fill="#d500ff"/><rect x="1576" y="348" fill="#e300ff"/><rect x="1588" y="348" fill="#f000ff"/><rect x="1600" y="348" fill="#fe00ff"/><rect x="1612" y="348" fill="#ff00f2"/><rect x="1624" y="348" fill="#ff00e6"/><rect x="1636" y="348" fill="#ff00db"/><rect x="1648" y="348" fill="#ff00d0"/><rect x="1660" y="348" fill="#ff00c7"/><rect x="1672" y="348" fill="#ff00be"/><rect x="1684" y="348" fill="#ff00b6"/><rect x="1696" y="348" fill="#ff00af"/><rect x="1708" y="348" fill="#ff00a8"/><rect x="1720" y="348" fill="#ff00a2"/><rect x="1732" y="348" fill="#ff009c"/><rect x="1744" y="348" fill="#ff0096"/><rect x="1300" y="360" fill="#002eff"/><rect x="1312" y="360" fill="#002bff"/><rect x="1324" y="360" fill="#0028ff"/><rect x="1336" y="360" fill="#0024ff"/><rect x="1348" y="360" fill="#0021ff"/><rect x="1360" y="360" fill="#001eff"/><rect x="1372" y="360" fill="#051bff"/><rect x="1384" y="360" fill="#1118ff"/><rect x="1396" y="360" fill="#1c14ff"/><rect x="1408" y="360" fill="#2811ff"/><rect x="1420" y="360" fill="#340eff"/><rect x="1432" y="360" fill="#400bff"/><rect x="1444" y="360" fill="#4c07ff"/><rect x="1456" y="360" fill="#5804ff"/><rect x="1468" y="360" fill="#6400ff"/><rect x="1480" y="360" fill="#7000ff"/><rect x="1492" y="360" fill="#7d00ff"/><rect x="1504" y="360" fill="#8900ff"/><rect x="1516" y="360" fill="#9600ff"/><rect x="1528" y="360" fill="#a200ff"/><rect x="1540" y="360" fill="#af00ff"/><rect x="1552" y="360" fill="#bc00ff"/><rect x="1564" y="360" fill="#c900ff"/><rect x="1576" y="360" fill="#d600ff"/><rect x="1588" y="360" fill="#e400ff"/><rect x="1600" y="360" fill="#f100ff"/><rect x="1612" y="360" fill="#fe00ff"/><rect x="1624" y="360" fill="#ff00f3"/><rect x="1636" y="360" fill="#ff00e7"/><rect x="1648" y="360" fill="#ff00dc"/><rect x="1660" y="360" fill="#ff00d2"/><rect x="1672" y="360" fill="#ff00c9"/><rect x="1684" y="360" fill="#ff00c1"/><rect x="1696" y="360" fill="#ff00b9"/><rect x="1708" y="360" fill="#ff00b1"/><rect x="1720" y="360" fill="#ff00ab"/><rect x="1732" y="360" fill="#ff00a4"/><rect x="1744" y="360" fill="#ff009e"/><rect x="1300" y="372" fill="#0029ff"/><rect x="1312" y="372" fill="#0026ff"/><rect x="1324" y="372" fill="#0023ff"/><rect x="1336" y="372" fill="#0020ff"/><rect x="1348" y="372" fill="#001dff"/><rect x="1360" y="372" fill="#001aff"/><rect x="1372" y="372" fill="#0317ff"/><rect x="1384" y="372" fill="#0e14ff"/><rect x="1396" y="372" fill="#1910ff"/><rect x="1408" y="372" fill="#250dff"/><rect x="1420" y="372" fill="#300aff"/><rect x="1432" y="372" fill="#3b07ff"/><rect x="1444" y="372" fill="#4704ff"/><rect x="1456" y="372" fill="#5201ff"/><rect x="1468" y="372" fill="#5e00ff"/><rect x="1480" y="372" fill="#6a00ff"/><rect x="1492" y="372" fill="#7600ff"/><rect x="1504" y="372" fill="#8200ff"/><rect x="1516" y="372" fill="#8e00ff"/><rect x="1528" y="372" fill="#9a00ff"/><rect x="1540" y="372" fill="#a600ff"/><rect x="1552" y="372" fill="#b200ff"/><rect x="1564" y="372" fill="#bf00ff"/><rect x="1576" y="372" fill="#cb00ff"/><rect x="1588" y="372" fill="#d800ff"/><rect x="1600" y="372" fill="#e500ff"/><rect x="1612" y="372" fill="#f100ff"/><rect x="1624" y="372" fill="#fe00ff"/><rect x="1636" y="372" fill="#ff00f3"/><rect x="1648" y="372" fill="#ff00e8"/><rect x="1660" y="372" fill="#ff00dd"/><rect x="1672" y="372" fill="#ff00d4"/><rect x="1684" y="372" fill="#ff00cb"/><rect x="1696" y="372" fill="#ff00c3"/><rect x="1708" y="372" fill="#ff00bb"/><rect x="1720" y="372" fill="#ff00b4"/><rect x="1732" y="372" fill="#ff00ad"/><rect x="1744" y="372" fill="#ff00a7"/><rect x="1300" y="384" fill="#0024ff"/><rect x="1312" y="384" fill="#0021ff"/><rect x="1324" y="384" fill="#001fff"/><rect x="1336" y="384" fill="#001cff"/><rect x="1348" y="384" fill="#0019ff"/><rect x="1360" y="384" fill="#0016ff"/><rect x="1372" y="384" fill="#0113ff"/><rect x="1384" y="384" fill="#0c10ff"/><rect x="1396" y="384" fill="#170dff"/><rect x="1408" y="384" fill="#210aff"/><rect x="1420" y="384" fill="#2c07ff"/><rect x="1432" y="384" fill="#3704ff"/><rect x="1444" y="384" fill="#4201ff"/><rect x="1456" y="384" fill="#4d00ff"/><rect x="1468" y="384" fill="#5900ff"/><rect x="1480" y="384" fill="#6400ff"/><rect x="1492" y="384" fill="#6f00ff"/><rect x="1504" y="384" fill="#7b00ff"/><rect x="1516" y="384" fill="#8600ff"/><rect x="1528" y="384" fill="#9200ff"/><rect x="1540" y="384" fill="#9d00ff"/><rect x="1552" y="384" fill="#a900ff"/><rect x="1564" y="384" fill="#b500ff"/><rect x="1576" y="384" fill="#c100ff"/><rect x="1588" y="384" fill="#cd00ff"/><rect x="1600" y="384" fill="#d900ff"/><rect x="1612" y="384" fill="#e600ff"/><rect x="1624" y="384" fill="#f200ff"/><rect x="1636" y="384" fill="#fe00ff"/><rect x="1648" y="384" fill="#ff00f4"/><rect x="1660" y="384" fill="#ff00e9"/><rect x="1672" y="384" fill="#ff00df"/><rect x="1684" y="384" fill="#ff00d5"/><rect x="1696" y="384" fill="#ff00cc"/><rect x="1708" y="384" fill="#ff00c4"/><rect x="1720" y="384" fill="#ff00bd"/><rect x="1732" y="384" fill="#ff00b6"/><rect x="1744" y="384" fill="#ff00af"/><rect x="1300" y="396" fill="#0020ff"/><rect x="1312" y="396" fill="#001dff"/><rect x="1324" y="396" fill="#001bff"/><rect x="1336" y="396" fill="#0018ff"/><rect x="1348" y="396" fill="#0015ff"/><rect x="1360" y="396" fill="#0012ff"/><rect x="1372" y="396" fill="#000fff"/><rect x="1384" y="396" fill="#0a0cff"/><rect x="1396" y="396" fill="#1409ff"/><rect x="1408" y="396" fill="#1f07ff"/><rect x="1420" y="396" fill="#2904ff"/><rect x="1432" y="396" fill="#3301ff"/><rect x="1444" y="396" fill="#3e00ff"/><rect x="1456" y="396" fill="#4900ff"/><rect x="1468" y="396" fill="#5300ff"/><rect x="1480" y="396" fill="#5e00ff"/><rect x="1492" y="396" fill="#6900ff"/><rect x="1504" y="396" fill="#7400ff"/><rect x="1516" y="396" fill="#7f00ff"/><rect x="1528" y="396" fill="#8a00ff"/><rect x="1540" y="396" fill="#9600ff"/><rect x="1552" y="396" fill="#a100ff"/><rect x="1564" y="396" fill="#ac00ff"/><rect x="1576" y="396" fill="#b800ff"/><rect x="1588" y="396" fill="#c300ff"/><rect x="1600" y="396" fill="#cf00ff"/><rect x="1612" y="396" fill="#db00ff"/><rect x="1624" y="396" fill="#e600ff"/><rect x="1636" y="396" fill="#f200ff"/><rect x="1648" y="396" fill="#fe00ff"/><rect x="1660" y="396" fill="#ff00f4"/><rect x="1672" y="396" fill="#ff00e9"/><rect x="1684" y="396" fill="#ff00e0"/><rect x="1696" y="396" fill="#ff00d7"/><rect x="1708" y="396" fill="#ff00ce"/><rect x="1720" y="396" fill="#ff00c6"/><rect x="1732" y="396" fill="#ff00bf"/><rect x="1744" y="396" fill="#ff00b8"/><rect x="1300" y="408" fill="#001cff"/><rect x="1312" y="408" fill="#001aff"/><rect x="1324" y="408" fill="#0017ff"/><rect x="1336" y="408" fill="#0014ff"/><rect x="1348" y="408" fill="#0011ff"/><rect x="1360" y="408" fill="#000fff"/><rect x="1372" y="408" fill="#000cff"/><rect x="1384" y="408" fill="#0809ff"/><rect x="1396" y="408" fill="#1206ff"/><rect x="1408" y="408" fill="#1c03ff"/><rect x="1420" y="408" fill="#2601ff"/><rect x="1432" y="408" fill="#3000ff"/><rect x="1444" y="408" fill="#3a00ff"/><rect x="1456" y="408" fill="#4400ff"/><rect x="1468" y="408" fill="#4f00ff"/><rect x="1480" y="408" fill="#5900ff"/><rect x="1492" y="408" fill="#6400ff"/><rect x="1504" y="408" fill="#6e00ff"/><rect x="1516" y="408" fill="#7900ff"/><rect x="1528" y="408" fill="#8300ff"/><rect x="1540" y="408" fill="#8e00ff"/><rect x="1552" y="408" fill="#9900ff"/><rect x="1564" y="408" fill="#a400ff"/><rect x="1576" y="408" fill="#af00ff"/><rect x="1588" y="408" fill="#ba00ff"/><rect x="1600" y="408" fill="#c500ff"/><rect x="1612" y="408" fill="#d000ff"/><rect x="1624" y="408" fill="#dc00ff"/><rect x="1636" y="408" fill="#e700ff"/><rect x="1648" y="408" fill="#f300ff"/><rect x="1660" y="408" fill="#fe00ff"/><rect x="1672" y="408" fill="#ff00f5"/><rect x="1684" y="408" fill="#ff00ea"/><rect x="1696" y="408" fill="#ff00e1"/><rect x="1708" y="408" fill="#ff00d8"/><rect x="1720" y="408" fill="#ff00d0"/><rect x="1732" y="408" fill="#ff00c8"/><rect x="1744" y="408" fill="#ff00c1"/><rect x="1300" y="420" fill="#0019ff"/><rect x="1312" y="420" fill="#0016ff"/><rect x="1324" y="420" fill="#0014ff"/><rect x="1336" y="420" fill="#0011ff"/><rect x="1348" y="420" fill="#000eff"/><rect x="1360" y="420" fill="#000cff"/><rect x="1372" y="420" fill="#0009ff"/><rect x="1384" y="420" fill="#0606ff"/><rect x="1396" y="420" fill="#1003ff"/><rect x="1408" y="420" fill="#1901ff"/><rect x="1420" y="420" fill="#2300ff"/><rect x="1432" y="420" fill="#2d00ff"/><rect x="1444" y="420" fill="#3700ff"/><rect x="1456" y="420" fill="#4000ff"/><rect x="1468" y="420" fill="#4a00ff"/><rect x="1480" y="420" fill="#5400ff"/><rect x="1492" y="420" fill="#5e00ff"/><rect x="1504" y="420" fill="#6900ff"/><rect x="1516" y="420" fill="#7300ff"/><rect x="1528" y="420" fill="#7d00ff"/><rect x="1540" y="420" fill="#8700ff"/><rect x="1552" y="420" fill="#9200ff"/><rect x="1564" y="420" fill="#9c00ff"/><rect x="1576" y="420" fill="#a700ff"/><rect x="1588" y="420" fill="#b200ff"/><rect x="1600" y="420" fill="#bc00ff"/><rect x="1612" y="420" fill="#c700ff"/><rect x="1624" y="420" fill="#d200ff"/><rect x="1636" y="420" fill="#dd00ff"/><rect x="1648" y="420" fill="#e800ff"/><rect x="1660" y="420" fill="#f300ff"/><rect x="1672" y="420" fill="#fe00ff"/><rect x="1684" y="420" fill="#ff00f5"/><rect x="1696" y="420" fill="#ff00eb"/><rect x="1708" y="420" fill="#ff00e2"/><rect x="1720" y="420" fill="#ff00d9"/><rect x="1732" y="420" fill="#ff00d1"/><rect x="1744" y="420" fill="#ff00c9"/><rect x="1300" y="432" fill="#0015ff"/><rect x="1312" y="432" fill="#0013ff"/><rect x="1324" y="432" fill="#0010ff"/><rect x="1336" y="432" fill="#000eff"/><rect x="1348" y="432" fill="#000bff"/><rect x="1360" y="432" fill="#0009ff"/><rect x="1372" y="432" fill="#0006ff"/><rect x="1384" y="432" fill="#0403ff"/><rect x="1396" y="432" fill="#0e01ff"/><rect x="1408" y="432" fill="#1700ff"/><rect x="1420" y="432" fill="#2000ff"/><rect x="1432" y="432" fill="#2a00ff"/><rect x="1444" y="432" fill="#3300ff"/><rect x="1456" y="432" fill="#3d00ff"/><rect x="1468" y="432" fill="#4600ff"/><rect x="1480" y="432" fill="#5000ff"/><rect x="1492" y="432" fill="#5a00ff"/><rect x="1504" y="432" fill="#6300ff"/><rect x="1516" y="432" fill="#6d00ff"/><rect x="1528" y="432" fill="#7700ff"/><rect x="1540" y="432" fill="#8100ff"/><rect x="1552" y="432" fill="#8b00ff"/><rect x="1564" y="432" fill="#9500ff"/><rect x="1576" y="432" fill="#9f00ff"/><rect x="1588" y="432" fill="#aa00ff"/><rect x="1600" y="432" fill="#b400ff"/><rect x="1612" y="432" fill="#be00ff"/><rect x="1624" y="432" fill="#c900ff"/><rect x="1636" y="432" fill="#d300ff"/><rect x="1648" y="432" fill="#de00ff"/><rect x="1660" y="432" fill="#e900ff"/><rect x="1672" y="432" fill="#f300ff"/><rect x="1684" y="432" fill="#fe00ff"/><rect x="1696" y="432" fill="#ff00f5"/><rect x="1708" y="432" fill="#ff00ec"/><rect x="1720" y="432" fill="#ff00e3"/><rect x="1732" y="432" fill="#ff00da"/><rect x="1744" y="432" fill="#ff00d2"/><rect x="1300" y="444" fill="#0012ff"/><rect x="1312" y="444" fill="#0010ff"/><rect x="1324" y="444" fill="#000dff"/><rect x="1336" y="444" fill="#000bff"/><rect x="1348" y="444" fill="#0008ff"/><rect x="1360" y="444" fill="#0006ff"/><rect x="1372" y="444" fill="#0003ff"/><rect x="1384" y="444" fill="#0301ff"/><rect x="1396" y="444" fill="#0c00ff"/><rect x="1408" y="444" fill="#1500ff"/><rect x="1420" y="444" fill="#1e00ff"/><rect x="1432" y="444" fill="#2700ff"/><rect x="1444" y="444" fill="#3000ff"/><rect x="1456" y="444" fill="#3900ff"/><rect x="1468" y="444" fill="#4200ff"/><rect x="1480" y="444" fill="#4c00ff"/><rect x="1492" y="444" fill="#5500ff"/><rect x="1504" y="444" fill="#5f00ff"/><rect x="1516" y="444" fill="#6800ff"/><rect x="1528" y="444" fill="#7200ff"/><rect x="1540" y="444" fill="#7b00ff"/><rect x="1552" y="444" fill="#8500ff"/><rect x="1564" y="444" fill="#8f00ff"/><rect x="1576" y="444" fill="#9900ff"/><rect x="1588" y="444" fill="#a200ff"/><rect x="1600" y="444" fill="#ac00ff"/><rect x="1612" y="444" fill="#b600ff"/><rect x="1624" y="444" fill="#c000ff"/><rect x="1636" y="444" fill="#ca00ff"/><rect x="1648" y="444" fill="#d500ff"/><rect x="1660" y="444" fill="#df00ff"/><rect x="1672" y="444" fill="#e900ff"/><rect x="1684" y="444" fill="#f400ff"/><rect x="1696" y="444" fill="#fe00ff"/><rect x="1708" y="444" fill="#ff00f6"/><rect x="1720" y="444" fill="#ff00ec"/><rect x="1732" y="444" fill="#ff00e3"/><rect x="1744" y="444" fill="#ff00db"/><rect x="1300" y="456" fill="#000fff"/><rect x="1312" y="456" fill="#000dff"/><rect x="1324" y="456" fill="#000aff"/><rect x="1336" y="456" fill="#0008ff"/><rect x="1348" y="456" fill="#0006ff"/><rect x="1360" y="456" fill="#0003ff"/><rect x="1372" y="456" fill="#0001ff"/><rect x="1384" y="456" fill="#0100ff"/><rect x="1396" y="456" fill="#0a00ff"/><rect x="1408" y="456" fill="#1300ff"/><rect x="1420" y="456" fill="#1b00ff"/><rect x="1432" y="456" fill="#2400ff"/><rect x="1444" y="456" fill="#2d00ff"/><rect x="1456" y="456" fill="#3600ff"/><rect x="1468" y="456" fill="#3f00ff"/><rect x="1480" y="456" fill="#4800ff"/><rect x="1492" y="456" fill="#5100ff"/><rect x="1504" y="456" fill="#5a00ff"/><rect x="1516" y="456" fill="#6300ff"/><rect x="1528" y="456" fill="#6d00ff"/><rect x="1540" y="456" fill="#7600ff"/><rect x="1552" y="456" fill="#7f00ff"/><rect x="1564" y="456" fill="#8900ff"/><rect x="1576" y="456" fill="#9200ff"/><rect x="1588" y="456" fill="#9c00ff"/><rect x="1600" y="456" fill="#a500ff"/><rect x="1612" y="456" fill="#af00ff"/><rect x="1624" y="456" fill="#b800ff"/><rect x="1636" y="456" fill="#c200ff"/><rect x="1648" y="456" fill="#cc00ff"/><rect x="1660" y="456" fill="#d600ff"/><rect x="1672" y="456" fill="#e000ff"/><rect x="1684" y="456" fill="#ea00ff"/><rect x="1696" y="456" fill="#f400ff"/><rect x="1708" y="456" fill="#fe00ff"/><rect x="1720" y="456" fill="#ff00f6"/><rect x="1732" y="456" fill="#ff00ed"/><rect x="1744" y="456" fill="#ff00e4"/><rect x="1300" y="468" fill="#000dff"/><rect x="1312" y="468" fill="#000aff"/><rect x="1324" y="468" fill="#0008ff"/><rect x="1336" y="468" fill="#0005ff"/><rect x="1348" y="468" fill="#0003ff"/><rect x="1360" y="468" fill="#0001ff"/><rect x="1372" y="468" fill="#0000ff"/><rect x="1384" y="468" fill="#0000ff"/><rect x="1396" y="468" fill="#0800ff"/><rect x="1408" y="468" fill="#1100ff"/><rect x="1420" y="468" fill="#1900ff"/><rect x="1432" y="468" fill="#2200ff"/><rect x="1444" y="468" fill="#2a00ff"/><rect x="1456" y="468" fill="#3300ff"/><rect x="1468" y="468" fill="#3c00ff"/><rect x="1480" y="468" fill="#4400ff"/><rect x="1492" y="468" fill="#4d00ff"/><rect x="1504" y="468" fill="#5600ff"/><rect x="1516" y="468" fill="#5f00ff"/><rect x="1528" y="468" fill="#6800ff"/><rect x="1540" y="468" fill="#7100ff"/><rect x="1552" y="468" fill="#7a00ff"/><rect x="1564" y="468" fill="#8300ff"/><rect x="1576" y="468" fill="#8c00ff"/><rect x="1588" y="468" fill="#9500ff"/><rect x="1600" y="468" fill="#9e00ff"/><rect x="1612" y="468" fill="#a800ff"/><rect x="1624" y="468" fill="#b100ff"/><rect x="1636" y="468" fill="#ba00ff"/><rect x="1648" y="468" fill="#c400ff"/><rect x="1660" y="468" fill="#cd00ff"/><rect x="1672" y="468" fill="#d700ff"/><rect x="1684" y="468" fill="#e100ff"/><rect x="1696" y="468" fill="#ea00ff"/><rect x="1708" y="468" fill="#f400ff"/><rect x="1720" y="468" fill="#fe00ff"/><rect x="1732" y="468" fill="#ff00f6"/><rect x="1744" y="468" fill="#ff00ed"/></g></g>
<path d="M1172.5,37.7 H1909.6 V605" fill="none" stroke="#a0a0a0" stroke-width="1.8"/>
<line x1="1172.30" y1="37.00" x2="1172.30" y2="612.00" stroke="#a0a0a0" stroke-width="1.8"/>
<line x1="1166.00" y1="605.00" x2="1910.00" y2="605.00" stroke="#a0a0a0" stroke-width="1.8"/>
<line x1="1165.00" y1="605.00" x2="1172.50" y2="605.00" stroke="#a0a0a0" stroke-width="1.6"/>
<text x="1165.0" y="611.0" font-size="16.8" fill="#d8d8d8" text-anchor="end">0</text>
<line x1="1172.00" y1="605.00" x2="1172.00" y2="612.00" stroke="#a0a0a0" stroke-width="1.6"/>
<text x="1172.0" y="631.0" font-size="16.5" fill="#d8d8d8" text-anchor="middle">0</text>
<line x1="1165.00" y1="557.85" x2="1172.50" y2="557.85" stroke="#a0a0a0" stroke-width="1.6"/>
<text x="1165.0" y="563.9" font-size="16.8" fill="#d8d8d8" text-anchor="end">0.05</text>
<line x1="1233.33" y1="605.00" x2="1233.33" y2="612.00" stroke="#a0a0a0" stroke-width="1.6"/>
<text x="1233.3" y="631.0" font-size="16.5" fill="#d8d8d8" text-anchor="middle">0.05</text>
<line x1="1165.00" y1="510.70" x2="1172.50" y2="510.70" stroke="#a0a0a0" stroke-width="1.6"/>
<text x="1165.0" y="516.7" font-size="16.8" fill="#d8d8d8" text-anchor="end">0.1</text>
<line x1="1294.66" y1="605.00" x2="1294.66" y2="612.00" stroke="#a0a0a0" stroke-width="1.6"/>
<text x="1294.7" y="631.0" font-size="16.5" fill="#d8d8d8" text-anchor="middle">0.1</text>
<line x1="1165.00" y1="463.55" x2="1172.50" y2="463.55" stroke="#a0a0a0" stroke-width="1.6"/>
<text x="1165.0" y="469.5" font-size="16.8" fill="#d8d8d8" text-anchor="end">0.15</text>
<line x1="1355.99" y1="605.00" x2="1355.99" y2="612.00" stroke="#a0a0a0" stroke-width="1.6"/>
<text x="1356.0" y="631.0" font-size="16.5" fill="#d8d8d8" text-anchor="middle">0.15</text>
<line x1="1165.00" y1="416.40" x2="1172.50" y2="416.40" stroke="#a0a0a0" stroke-width="1.6"/>
<text x="1165.0" y="422.4" font-size="16.8" fill="#d8d8d8" text-anchor="end">0.2</text>
<line x1="1417.32" y1="605.00" x2="1417.32" y2="612.00" stroke="#a0a0a0" stroke-width="1.6"/>
<text x="1417.3" y="631.0" font-size="16.5" fill="#d8d8d8" text-anchor="middle">0.2</text>
<line x1="1165.00" y1="369.25" x2="1172.50" y2="369.25" stroke="#a0a0a0" stroke-width="1.6"/>
<text x="1165.0" y="375.2" font-size="16.8" fill="#d8d8d8" text-anchor="end">0.25</text>
<line x1="1478.65" y1="605.00" x2="1478.65" y2="612.00" stroke="#a0a0a0" stroke-width="1.6"/>
<text x="1478.7" y="631.0" font-size="16.5" fill="#d8d8d8" text-anchor="middle">0.25</text>
<line x1="1165.00" y1="322.10" x2="1172.50" y2="322.10" stroke="#a0a0a0" stroke-width="1.6"/>
<text x="1165.0" y="328.1" font-size="16.8" fill="#d8d8d8" text-anchor="end">0.3</text>
<line x1="1539.98" y1="605.00" x2="1539.98" y2="612.00" stroke="#a0a0a0" stroke-width="1.6"/>
<text x="1540.0" y="631.0" font-size="16.5" fill="#d8d8d8" text-anchor="middle">0.3</text>
<line x1="1165.00" y1="274.95" x2="1172.50" y2="274.95" stroke="#a0a0a0" stroke-width="1.6"/>
<text x="1165.0" y="280.9" font-size="16.8" fill="#d8d8d8" text-anchor="end">0.35</text>
<line x1="1601.31" y1="605.00" x2="1601.31" y2="612.00" stroke="#a0a0a0" stroke-width="1.6"/>
<text x="1601.3" y="631.0" font-size="16.5" fill="#d8d8d8" text-anchor="middle">0.35</text>
<line x1="1165.00" y1="227.80" x2="1172.50" y2="227.80" stroke="#a0a0a0" stroke-width="1.6"/>
<text x="1165.0" y="233.8" font-size="16.8" fill="#d8d8d8" text-anchor="end">0.4</text>
<line x1="1662.64" y1="605.00" x2="1662.64" y2="612.00" stroke="#a0a0a0" stroke-width="1.6"/>
<text x="1662.6" y="631.0" font-size="16.5" fill="#d8d8d8" text-anchor="middle">0.4</text>
<line x1="1165.00" y1="180.65" x2="1172.50" y2="180.65" stroke="#a0a0a0" stroke-width="1.6"/>
<text x="1165.0" y="186.6" font-size="16.8" fill="#d8d8d8" text-anchor="end">0.45</text>
<line x1="1723.97" y1="605.00" x2="1723.97" y2="612.00" stroke="#a0a0a0" stroke-width="1.6"/>
<text x="1724.0" y="631.0" font-size="16.5" fill="#d8d8d8" text-anchor="middle">0.45</text>
<line x1="1165.00" y1="133.50" x2="1172.50" y2="133.50" stroke="#a0a0a0" stroke-width="1.6"/>
<text x="1165.0" y="139.5" font-size="16.8" fill="#d8d8d8" text-anchor="end">0.5</text>
<line x1="1785.30" y1="605.00" x2="1785.30" y2="612.00" stroke="#a0a0a0" stroke-width="1.6"/>
<text x="1785.3" y="631.0" font-size="16.5" fill="#d8d8d8" text-anchor="middle">0.5</text>
<line x1="1165.00" y1="86.35" x2="1172.50" y2="86.35" stroke="#a0a0a0" stroke-width="1.6"/>
<text x="1165.0" y="92.3" font-size="16.8" fill="#d8d8d8" text-anchor="end">0.55</text>
<line x1="1846.63" y1="605.00" x2="1846.63" y2="612.00" stroke="#a0a0a0" stroke-width="1.6"/>
<text x="1846.6" y="631.0" font-size="16.5" fill="#d8d8d8" text-anchor="middle">0.55</text>
<rect x="1316.5" y="64.1" width="15" height="15" fill="none" stroke="#fff" stroke-width="2"/><rect x="1331.4" y="78.5" width="15" height="15" fill="none" stroke="#fff" stroke-width="2"/><rect x="1345.3" y="92.3" width="15" height="15" fill="none" stroke="#fff" stroke-width="2"/><rect x="1362.6" y="109.8" width="15" height="15" fill="none" stroke="#fff" stroke-width="2"/><rect x="1382.6" y="128.9" width="15" height="15" fill="none" stroke="#fff" stroke-width="2"/><rect x="1414.4" y="73.2" width="15" height="15" fill="none" stroke="#fff" stroke-width="2"/><rect x="1412.9" y="86.9" width="15" height="15" fill="none" stroke="#fff" stroke-width="2"/><rect x="1412.9" y="100.3" width="15" height="15" fill="none" stroke="#fff" stroke-width="2"/><rect x="1411.7" y="116.0" width="15" height="15" fill="none" stroke="#fff" stroke-width="2"/><rect x="1409.5" y="133.3" width="15" height="15" fill="none" stroke="#fff" stroke-width="2"/><rect x="1333.7" y="166.3" width="15" height="15" fill="none" stroke="#fff" stroke-width="2"/><rect x="1347.5" y="162.8" width="15" height="15" fill="none" stroke="#fff" stroke-width="2"/><rect x="1362.6" y="160.6" width="15" height="15" fill="none" stroke="#fff" stroke-width="2"/><rect x="1376.9" y="157.9" width="15" height="15" fill="none" stroke="#fff" stroke-width="2"/><rect x="1392.1" y="156.5" width="15" height="15" fill="none" stroke="#fff" stroke-width="2"/><rect x="1717.1" y="101.5" width="15" height="15" fill="none" stroke="#fff" stroke-width="2"/><rect x="1642.9" y="113.7" width="15" height="15" fill="none" stroke="#fff" stroke-width="2"/><rect x="1580.3" y="124.7" width="15" height="15" fill="none" stroke="#fff" stroke-width="2"/><rect x="1524.1" y="132.8" width="15" height="15" fill="none" stroke="#fff" stroke-width="2"/><rect x="1462.3" y="144.5" width="15" height="15" fill="none" stroke="#fff" stroke-width="2"/><rect x="1537.4" y="283.5" width="15" height="15" fill="none" stroke="#fff" stroke-width="2"/><rect x="1500.9" y="248.2" width="15" height="15" fill="none" stroke="#fff" stroke-width="2"/><rect x="1470.2" y="218.0" width="15" height="15" fill="none" stroke="#fff" stroke-width="2"/><rect x="1448.4" y="194.4" width="15" height="15" fill="none" stroke="#fff" stroke-width="2"/><rect x="1426.5" y="172.4" width="15" height="15" fill="none" stroke="#fff" stroke-width="2"/><rect x="1379.7" y="447.0" width="15" height="15" fill="none" stroke="#fff" stroke-width="2"/><rect x="1389.0" y="347.3" width="15" height="15" fill="none" stroke="#fff" stroke-width="2"/><rect x="1394.8" y="282.4" width="15" height="15" fill="none" stroke="#fff" stroke-width="2"/><rect x="1399.5" y="230.2" width="15" height="15" fill="none" stroke="#fff" stroke-width="2"/><rect x="1403.1" y="188.0" width="15" height="15" fill="none" stroke="#fff" stroke-width="2"/><rect x="1406.2" y="153.6" width="15" height="15" fill="none" stroke="#000" stroke-width="2.2"/><circle cx="1294.4" cy="57.4" r="4.9" fill="#00a000" stroke="#1a1a1a" stroke-width="1.7"/><circle cx="1306.9" cy="69.8" r="4.9" fill="#40a840" stroke="#1a1a1a" stroke-width="1.7"/><circle cx="1325.9" cy="87.1" r="4.9" fill="#60a860" stroke="#1a1a1a" stroke-width="1.7"/><circle cx="1347.9" cy="110.5" r="4.9" fill="#78a878" stroke="#1a1a1a" stroke-width="1.7"/><circle cx="1374.4" cy="137.5" r="4.9" fill="#90a890" stroke="#1a1a1a" stroke-width="1.7"/><circle cx="1410.5" cy="69.5" r="4.9" fill="#c8c000" stroke="#1a1a1a" stroke-width="1.7"/><circle cx="1410.5" cy="82.9" r="4.9" fill="#b8b048" stroke="#1a1a1a" stroke-width="1.7"/><circle cx="1410.5" cy="99.9" r="4.9" fill="#b0aa70" stroke="#1a1a1a" stroke-width="1.7"/><circle cx="1410.5" cy="120.1" r="4.9" fill="#b0aa80" stroke="#1a1a1a" stroke-width="1.7"/><circle cx="1410.5" cy="143.4" r="4.9" fill="#b0b090" stroke="#1a1a1a" stroke-width="1.7"/><circle cx="1327.2" cy="188.0" r="4.9" fill="#00b0b0" stroke="#1a1a1a" stroke-width="1.7"/><circle cx="1340.0" cy="184.6" r="4.9" fill="#40b0b0" stroke="#1a1a1a" stroke-width="1.7"/><circle cx="1355.6" cy="181.7" r="4.9" fill="#60a8a8" stroke="#1a1a1a" stroke-width="1.7"/><circle cx="1373.0" cy="179.9" r="4.9" fill="#80a8a8" stroke="#1a1a1a" stroke-width="1.7"/><circle cx="1390.4" cy="176.9" r="4.9" fill="#98aaaa" stroke="#1a1a1a" stroke-width="1.7"/><circle cx="1772.2" cy="107.8" r="4.9" fill="#c00000" stroke="#1a1a1a" stroke-width="1.7"/><circle cx="1711.9" cy="118.3" r="4.9" fill="#b03838" stroke="#1a1a1a" stroke-width="1.7"/><circle cx="1641.7" cy="131.6" r="4.9" fill="#a05050" stroke="#1a1a1a" stroke-width="1.7"/><circle cx="1565.8" cy="143.2" r="4.9" fill="#a06060" stroke="#1a1a1a" stroke-width="1.7"/><circle cx="1482.5" cy="159.5" r="4.9" fill="#b08080" stroke="#1a1a1a" stroke-width="1.7"/><circle cx="1565.8" cy="328.7" r="4.9" fill="#a000a0" stroke="#1a1a1a" stroke-width="1.7"/><circle cx="1532.8" cy="295.7" r="4.9" fill="#a040a0" stroke="#1a1a1a" stroke-width="1.7"/><circle cx="1495.7" cy="258.6" r="4.9" fill="#a060a0" stroke="#1a1a1a" stroke-width="1.7"/><circle cx="1466.7" cy="230.3" r="4.9" fill="#a878a8" stroke="#1a1a1a" stroke-width="1.7"/><circle cx="1437.5" cy="200.1" r="4.9" fill="#b0a0b0" stroke="#1a1a1a" stroke-width="1.7"/><circle cx="1405.2" cy="495.1" r="4.9" fill="#3030b0" stroke="#1a1a1a" stroke-width="1.7"/><circle cx="1407.0" cy="424.9" r="4.9" fill="#5050b0" stroke="#1a1a1a" stroke-width="1.7"/><circle cx="1407.0" cy="346.7" r="4.9" fill="#6868b0" stroke="#1a1a1a" stroke-width="1.7"/><circle cx="1408.7" cy="278.8" r="4.9" fill="#8080b0" stroke="#1a1a1a" stroke-width="1.7"/><circle cx="1409.0" cy="222.2" r="4.9" fill="#9090b0" stroke="#1a1a1a" stroke-width="1.7"/><circle cx="1410.5" cy="175.2" r="4.9" fill="#fff" stroke="#1a1a1a" stroke-width="1.6"/>
<rect x="1655.50" y="427.20" width="250.50" height="171.30" fill="#2a2a2a"/>
<rect x="1658.50" y="429.80" width="244.00" height="165.60" fill="#232323" stroke="#9a9a9a" stroke-width="2"/>
<g clip-path="url(#cIn)"><g clip-path="url(#cInLoc)"><g filter="url(#fb12)" class="c10"><rect x="1645" y="420" fill="#479e00"/><rect x="1655" y="420" fill="#4a9e00"/><rect x="1665" y="420" fill="#4e9e00"/><rect x="1675" y="420" fill="#529e00"/><rect x="1685" y="420" fill="#569e00"/><rect x="1695" y="420" fill="#5a9e00"/><rect x="1705" y="420" fill="#5e9e00"/><rect x="1715" y="420" fill="#629e00"/><rect x="1725" y="420" fill="#669e00"/><rect x="1735" y="420" fill="#6a9e00"/><rect x="1745" y="420" fill="#6e9e00"/><rect x="1755" y="420" fill="#729e00"/><rect x="1765" y="420" fill="#769e00"/><rect x="1775" y="420" fill="#7b9e00"/><rect x="1785" y="420" fill="#7f9e00"/><rect x="1795" y="420" fill="#849e00"/><rect x="1805" y="420" fill="#889e00"/><rect x="1815" y="420" fill="#8d9e00"/><rect x="1825" y="420" fill="#919e00"/><rect x="1835" y="420" fill="#969e00"/><rect x="1845" y="420" fill="#9a9e00"/><rect x="1855" y="420" fill="#9e9d00"/><rect x="1865" y="420" fill="#9e9800"/><rect x="1875" y="420" fill="#9e9400"/><rect x="1885" y="420" fill="#9e9000"/><rect x="1895" y="420" fill="#9e8c00"/><rect x="1905" y="420" fill="#9e8800"/><rect x="1645" y="430" fill="#499e00"/><rect x="1655" y="430" fill="#4d9e00"/><rect x="1665" y="430" fill="#519e00"/><rect x="1675" y="430" fill="#559e00"/><rect x="1685" y="430" fill="#599e00"/><rect x="1695" y="430" fill="#5d9e00"/><rect x="1705" y="430" fill="#619e00"/><rect x="1715" y="430" fill="#659e00"/><rect x="1725" y="430" fill="#699e00"/><rect x="1735" y="430" fill="#6d9e00"/><rect x="1745" y="430" fill="#719e00"/><rect x="1755" y="430" fill="#769e00"/><rect x="1765" y="430" fill="#7a9e00"/><rect x="1775" y="430" fill="#7e9e00"/><rect x="1785" y="430" fill="#839e00"/><rect x="1795" y="430" fill="#879e00"/><rect x="1805" y="430" fill="#8c9e00"/><rect x="1815" y="430" fill="#909e00"/><rect x="1825" y="430" fill="#959e00"/><rect x="1835" y="430" fill="#9a9e00"/><rect x="1845" y="430" fill="#9e9e00"/><rect x="1855" y="430" fill="#9e9900"/><rect x="1865" y="430" fill="#9e9400"/><rect x="1875" y="430" fill="#9e9000"/><rect x="1885" y="430" fill="#9e8c00"/><rect x="1895" y="430" fill="#9e8800"/><rect x="1905" y="430" fill="#9e8400"/><rect x="1645" y="440" fill="#4c9e00"/><rect x="1655" y="440" fill="#509e00"/><rect x="1665" y="440" fill="#539e00"/><rect x="1675" y="440" fill="#579e00"/><rect x="1685" y="440" fill="#5b9e00"/><rect x="1695" y="440" fill="#609e00"/><rect x="1705" y="440" fill="#649e00"/><rect x="1715" y="440" fill="#689e00"/><rect x="1725" y="440" fill="#6c9e00"/><rect x="1735" y="440" fill="#709e00"/><rect x="1745" y="440" fill="#759e00"/><rect x="1755" y="440" fill="#799e00"/><rect x="1765" y="440" fill="#7d9e00"/><rect x="1775" y="440" fill="#829e00"/><rect x="1785" y="440" fill="#879e00"/><rect x="1795" y="440" fill="#8b9e00"/><rect x="1805" y="440" fill="#909e00"/><rect x="1815" y="440" fill="#959e00"/><rect x="1825" y="440" fill="#999e00"/><rect x="1835" y="440" fill="#9e9e00"/><rect x="1845" y="440" fill="#9e9900"/><rect x="1855" y="440" fill="#9e9500"/><rect x="1865" y="440" fill="#9e9000"/><rect x="1875" y="440" fill="#9e8c00"/><rect x="1885" y="440" fill="#9e8800"/><rect x="1895" y="440" fill="#9e8400"/><rect x="1905" y="440" fill="#9e8100"/><rect x="1645" y="450" fill="#4e9e02"/><rect x="1655" y="450" fill="#529e01"/><rect x="1665" y="450" fill="#569e00"/><rect x="1675" y="450" fill="#5a9e00"/><rect x="1685" y="450" fill="#5e9e00"/><rect x="1695" y="450" fill="#639e00"/><rect x="1705" y="450" fill="#679e00"/><rect x="1715" y="450" fill="#6b9e00"/><rect x="1725" y="450" fill="#6f9e00"/><rect x="1735" y="450" fill="#749e00"/><rect x="1745" y="450" fill="#789e00"/><rect x="1755" y="450" fill="#7d9e00"/><rect x="1765" y="450" fill="#819e00"/><rect x="1775" y="450" fill="#869e00"/><rect x="1785" y="450" fill="#8a9e00"/><rect x="1795" y="450" fill="#8f9e00"/><rect x="1805" y="450" fill="#949e00"/><rect x="1815" y="450" fill="#999e00"/><rect x="1825" y="450" fill="#9e9e00"/><rect x="1835" y="450" fill="#9e9a00"/><rect x="1845" y="450" fill="#9e9500"/><rect x="1855" y="450" fill="#9e9100"/><rect x="1865" y="450" fill="#9e8c00"/><rect x="1875" y="450" fill="#9e8800"/><rect x="1885" y="450" fill="#9e8500"/><rect x="1895" y="450" fill="#9e8100"/><rect x="1905" y="450" fill="#9e7d00"/><rect x="1645" y="460" fill="#519e04"/><rect x="1655" y="460" fill="#559e03"/><rect x="1665" y="460" fill="#599e02"/><rect x="1675" y="460" fill="#5d9e01"/><rect x="1685" y="460" fill="#619e00"/><rect x="1695" y="460" fill="#669e00"/><rect x="1705" y="460" fill="#6a9e00"/><rect x="1715" y="460" fill="#6e9e00"/><rect x="1725" y="460" fill="#739e00"/><rect x="1735" y="460" fill="#779e00"/><rect x="1745" y="460" fill="#7c9e00"/><rect x="1755" y="460" fill="#809e00"/><rect x="1765" y="460" fill="#859e00"/><rect x="1775" y="460" fill="#8a9e00"/><rect x="1785" y="460" fill="#8e9e00"/><rect x="1795" y="460" fill="#939e00"/><rect x="1805" y="460" fill="#989e00"/><rect x="1815" y="460" fill="#9d9e00"/><rect x="1825" y="460" fill="#9e9a00"/><rect x="1835" y="460" fill="#9e9500"/><rect x="1845" y="460" fill="#9e9100"/><rect x="1855" y="460" fill="#9e8d00"/><rect x="1865" y="460" fill="#9e8900"/><rect x="1875" y="460" fill="#9e8500"/><rect x="1885" y="460" fill="#9e8100"/><rect x="1895" y="460" fill="#9e7d00"/><rect x="1905" y="460" fill="#9e7a00"/><rect x="1645" y="470" fill="#549e06"/><rect x="1655" y="470" fill="#589e05"/><rect x="1665" y="470" fill="#5c9e04"/><rect x="1675" y="470" fill="#609e03"/><rect x="1685" y="470" fill="#659e02"/><rect x="1695" y="470" fill="#699e01"/><rect x="1705" y="470" fill="#6d9e00"/><rect x="1715" y="470" fill="#729e00"/><rect x="1725" y="470" fill="#769e00"/><rect x="1735" y="470" fill="#7b9e00"/><rect x="1745" y="470" fill="#7f9e00"/><rect x="1755" y="470" fill="#849e00"/><rect x="1765" y="470" fill="#899e00"/><rect x="1775" y="470" fill="#8e9e00"/><rect x="1785" y="470" fill="#939e00"/><rect x="1795" y="470" fill="#989e00"/><rect x="1805" y="470" fill="#9d9e00"/><rect x="1815" y="470" fill="#9e9b00"/><rect x="1825" y="470" fill="#9e9600"/><rect x="1835" y="470" fill="#9e9100"/><rect x="1845" y="470" fill="#9e8d00"/><rect x="1855" y="470" fill="#9e8900"/><rect x="1865" y="470" fill="#9e8500"/><rect x="1875" y="470" fill="#9e8100"/><rect x="1885" y="470" fill="#9e7d00"/><rect x="1895" y="470" fill="#9e7a00"/><rect x="1905" y="470" fill="#9e7700"/><rect x="1645" y="480" fill="#579e08"/><rect x="1655" y="480" fill="#5b9e07"/><rect x="1665" y="480" fill="#5f9e06"/><rect x="1675" y="480" fill="#649e05"/><rect x="1685" y="480" fill="#689e04"/><rect x="1695" y="480" fill="#6c9e03"/><rect x="1705" y="480" fill="#719e02"/><rect x="1715" y="480" fill="#759e01"/><rect x="1725" y="480" fill="#7a9e00"/><rect x="1735" y="480" fill="#7f9e00"/><rect x="1745" y="480" fill="#839e00"/><rect x="1755" y="480" fill="#889e00"/><rect x="1765" y="480" fill="#8d9e00"/><rect x="1775" y="480" fill="#929e00"/><rect x="1785" y="480" fill="#979e00"/><rect x="1795" y="480" fill="#9c9e00"/><rect x="1805" y="480" fill="#9e9b00"/><rect x="1815" y="480" fill="#9e9600"/><rect x="1825" y="480" fill="#9e9200"/><rect x="1835" y="480" fill="#9e8d00"/><rect x="1845" y="480" fill="#9e8900"/><rect x="1855" y="480" fill="#9e8500"/><rect x="1865" y="480" fill="#9e8100"/><rect x="1875" y="480" fill="#9e7d00"/><rect x="1885" y="480" fill="#9e7a00"/><rect x="1895" y="480" fill="#9e7700"/><rect x="1905" y="480" fill="#9e7300"/><rect x="1645" y="490" fill="#5a9e0a"/><rect x="1655" y="490" fill="#5e9e09"/><rect x="1665" y="490" fill="#629e08"/><rect x="1675" y="490" fill="#679e07"/><rect x="1685" y="490" fill="#6b9e06"/><rect x="1695" y="490" fill="#709e05"/><rect x="1705" y="490" fill="#749e04"/><rect x="1715" y="490" fill="#799e03"/><rect x="1725" y="490" fill="#7e9e02"/><rect x="1735" y="490" fill="#839e01"/><rect x="1745" y="490" fill="#879e00"/><rect x="1755" y="490" fill="#8c9e00"/><rect x="1765" y="490" fill="#919e00"/><rect x="1775" y="490" fill="#969e00"/><rect x="1785" y="490" fill="#9b9e00"/><rect x="1795" y="490" fill="#9e9c00"/><rect x="1805" y="490" fill="#9e9700"/><rect x="1815" y="490" fill="#9e9200"/><rect x="1825" y="490" fill="#9e8e00"/><rect x="1835" y="490" fill="#9e8900"/><rect x="1845" y="490" fill="#9e8500"/><rect x="1855" y="490" fill="#9e8100"/><rect x="1865" y="490" fill="#9e7e00"/><rect x="1875" y="490" fill="#9e7a00"/><rect x="1885" y="490" fill="#9e7700"/><rect x="1895" y="490" fill="#9e7300"/><rect x="1905" y="490" fill="#9e7000"/><rect x="1645" y="500" fill="#5d9e0c"/><rect x="1655" y="500" fill="#619e0b"/><rect x="1665" y="500" fill="#669e0a"/><rect x="1675" y="500" fill="#6a9e09"/><rect x="1685" y="500" fill="#6f9e08"/><rect x="1695" y="500" fill="#739e07"/><rect x="1705" y="500" fill="#789e06"/><rect x="1715" y="500" fill="#7d9e05"/><rect x="1725" y="500" fill="#829e04"/><rect x="1735" y="500" fill="#879e03"/><rect x="1745" y="500" fill="#8c9e02"/><rect x="1755" y="500" fill="#919e01"/><rect x="1765" y="500" fill="#969e00"/><rect x="1775" y="500" fill="#9b9e00"/><rect x="1785" y="500" fill="#9e9c00"/><rect x="1795" y="500" fill="#9e9700"/><rect x="1805" y="500" fill="#9e9200"/><rect x="1815" y="500" fill="#9e8e00"/><rect x="1825" y="500" fill="#9e8900"/><rect x="1835" y="500" fill="#9e8500"/><rect x="1845" y="500" fill="#9e8100"/><rect x="1855" y="500" fill="#9e7e00"/><rect x="1865" y="500" fill="#9e7a00"/><rect x="1875" y="500" fill="#9e7700"/><rect x="1885" y="500" fill="#9e7300"/><rect x="1895" y="500" fill="#9e7000"/><rect x="1905" y="500" fill="#9e6d00"/><rect x="1645" y="510" fill="#609e0e"/><rect x="1655" y="510" fill="#659e0d"/><rect x="1665" y="510" fill="#699e0c"/><rect x="1675" y="510" fill="#6e9e0b"/><rect x="1685" y="510" fill="#729e0a"/><rect x="1695" y="510" fill="#779e09"/><rect x="1705" y="510" fill="#7c9e08"/><rect x="1715" y="510" fill="#819e07"/><rect x="1725" y="510" fill="#869e06"/><rect x="1735" y="510" fill="#8b9e05"/><rect x="1745" y="510" fill="#909e04"/><rect x="1755" y="510" fill="#959e03"/><rect x="1765" y="510" fill="#9a9e02"/><rect x="1775" y="510" fill="#9e9d01"/><rect x="1785" y="510" fill="#9e9800"/><rect x="1795" y="510" fill="#9e9300"/><rect x="1805" y="510" fill="#9e8e00"/><rect x="1815" y="510" fill="#9e8a00"/><rect x="1825" y="510" fill="#9e8500"/><rect x="1835" y="510" fill="#9e8100"/><rect x="1845" y="510" fill="#9e7e00"/><rect x="1855" y="510" fill="#9e7a00"/><rect x="1865" y="510" fill="#9e7600"/><rect x="1875" y="510" fill="#9e7300"/><rect x="1885" y="510" fill="#9e7000"/><rect x="1895" y="510" fill="#9e6d00"/><rect x="1905" y="510" fill="#9e6a00"/><rect x="1645" y="520" fill="#639e10"/><rect x="1655" y="520" fill="#689e0f"/><rect x="1665" y="520" fill="#6d9e0e"/><rect x="1675" y="520" fill="#719e0d"/><rect x="1685" y="520" fill="#769e0c"/><rect x="1695" y="520" fill="#7b9e0b"/><rect x="1705" y="520" fill="#809e0a"/><rect x="1715" y="520" fill="#859e09"/><rect x="1725" y="520" fill="#8a9e08"/><rect x="1735" y="520" fill="#8f9e07"/><rect x="1745" y="520" fill="#949e06"/><rect x="1755" y="520" fill="#9a9e05"/><rect x="1765" y="520" fill="#9e9d04"/><rect x="1775" y="520" fill="#9e9803"/><rect x="1785" y="520" fill="#9e9302"/><rect x="1795" y="520" fill="#9e8e00"/><rect x="1805" y="520" fill="#9e8a00"/><rect x="1815" y="520" fill="#9e8600"/><rect x="1825" y="520" fill="#9e8200"/><rect x="1835" y="520" fill="#9e7e00"/><rect x="1845" y="520" fill="#9e7a00"/><rect x="1855" y="520" fill="#9e7600"/><rect x="1865" y="520" fill="#9e7300"/><rect x="1875" y="520" fill="#9e7000"/><rect x="1885" y="520" fill="#9e6d00"/><rect x="1895" y="520" fill="#9e6a00"/><rect x="1905" y="520" fill="#9e6700"/><rect x="1645" y="530" fill="#679e12"/><rect x="1655" y="530" fill="#6b9e11"/><rect x="1665" y="530" fill="#709e11"/><rect x="1675" y="530" fill="#759e10"/><rect x="1685" y="530" fill="#7a9e0f"/><rect x="1695" y="530" fill="#7f9e0e"/><rect x="1705" y="530" fill="#849e0d"/><rect x="1715" y="530" fill="#899e0c"/><rect x="1725" y="530" fill="#8e9e0a"/><rect x="1735" y="530" fill="#949e09"/><rect x="1745" y="530" fill="#999e08"/><rect x="1755" y="530" fill="#9e9e07"/><rect x="1765" y="530" fill="#9e9806"/><rect x="1775" y="530" fill="#9e9305"/><rect x="1785" y="530" fill="#9e8f03"/><rect x="1795" y="530" fill="#9e8a02"/><rect x="1805" y="530" fill="#9e8601"/><rect x="1815" y="530" fill="#9e8200"/><rect x="1825" y="530" fill="#9e7e00"/><rect x="1835" y="530" fill="#9e7a00"/><rect x="1845" y="530" fill="#9e7600"/><rect x="1855" y="530" fill="#9e7300"/><rect x="1865" y="530" fill="#9e7000"/><rect x="1875" y="530" fill="#9e6c00"/><rect x="1885" y="530" fill="#9e6900"/><rect x="1895" y="530" fill="#9e6700"/><rect x="1905" y="530" fill="#9e6400"/><rect x="1645" y="540" fill="#6a9e15"/><rect x="1655" y="540" fill="#6f9e14"/><rect x="1665" y="540" fill="#749e13"/><rect x="1675" y="540" fill="#799e12"/><rect x="1685" y="540" fill="#7e9e11"/><rect x="1695" y="540" fill="#839e10"/><rect x="1705" y="540" fill="#889e0f"/><rect x="1715" y="540" fill="#8e9e0e"/><rect x="1725" y="540" fill="#939e0d"/><rect x="1735" y="540" fill="#989e0c"/><rect x="1745" y="540" fill="#9e9e0b"/><rect x="1755" y="540" fill="#9e9909"/><rect x="1765" y="540" fill="#9e9408"/><rect x="1775" y="540" fill="#9e8f07"/><rect x="1785" y="540" fill="#9e8a05"/><rect x="1795" y="540" fill="#9e8604"/><rect x="1805" y="540" fill="#9e8203"/><rect x="1815" y="540" fill="#9e7e02"/><rect x="1825" y="540" fill="#9e7a01"/><rect x="1835" y="540" fill="#9e7600"/><rect x="1845" y="540" fill="#9e7300"/><rect x="1855" y="540" fill="#9e7000"/><rect x="1865" y="540" fill="#9e6c00"/><rect x="1875" y="540" fill="#9e6900"/><rect x="1885" y="540" fill="#9e6600"/><rect x="1895" y="540" fill="#9e6300"/><rect x="1905" y="540" fill="#9e6100"/><rect x="1645" y="550" fill="#6e9e17"/><rect x="1655" y="550" fill="#739e16"/><rect x="1665" y="550" fill="#789e15"/><rect x="1675" y="550" fill="#7d9e14"/><rect x="1685" y="550" fill="#829e13"/><rect x="1695" y="550" fill="#889e12"/><rect x="1705" y="550" fill="#8d9e11"/><rect x="1715" y="550" fill="#929e10"/><rect x="1725" y="550" fill="#989e0f"/><rect x="1735" y="550" fill="#9d9e0e"/><rect x="1745" y="550" fill="#9e990d"/><rect x="1755" y="550" fill="#9e940b"/><rect x="1765" y="550" fill="#9e8f0a"/><rect x="1775" y="550" fill="#9e8b09"/><rect x="1785" y="550" fill="#9e8607"/><rect x="1795" y="550" fill="#9e8206"/><rect x="1805" y="550" fill="#9e7e05"/><rect x="1815" y="550" fill="#9e7a04"/><rect x="1825" y="550" fill="#9e7603"/><rect x="1835" y="550" fill="#9e7302"/><rect x="1845" y="550" fill="#9e6f01"/><rect x="1855" y="550" fill="#9e6c00"/><rect x="1865" y="550" fill="#9e6900"/><rect x="1875" y="550" fill="#9e6600"/><rect x="1885" y="550" fill="#9e6300"/><rect x="1895" y="550" fill="#9e6000"/><rect x="1905" y="550" fill="#9e5e00"/><rect x="1645" y="560" fill="#729e1a"/><rect x="1655" y="560" fill="#779e19"/><rect x="1665" y="560" fill="#7c9e18"/><rect x="1675" y="560" fill="#819e17"/><rect x="1685" y="560" fill="#879e16"/><rect x="1695" y="560" fill="#8c9e15"/><rect x="1705" y="560" fill="#919e14"/><rect x="1715" y="560" fill="#979e13"/><rect x="1725" y="560" fill="#9d9e12"/><rect x="1735" y="560" fill="#9e9a10"/><rect x="1745" y="560" fill="#9e950f"/><rect x="1755" y="560" fill="#9e900d"/><rect x="1765" y="560" fill="#9e8b0c"/><rect x="1775" y="560" fill="#9e860a"/><rect x="1785" y="560" fill="#9e8209"/><rect x="1795" y="560" fill="#9e7e08"/><rect x="1805" y="560" fill="#9e7a07"/><rect x="1815" y="560" fill="#9e7606"/><rect x="1825" y="560" fill="#9e7305"/><rect x="1835" y="560" fill="#9e6f04"/><rect x="1845" y="560" fill="#9e6c03"/><rect x="1855" y="560" fill="#9e6902"/><rect x="1865" y="560" fill="#9e6601"/><rect x="1875" y="560" fill="#9e6300"/><rect x="1885" y="560" fill="#9e6000"/><rect x="1895" y="560" fill="#9e5e00"/><rect x="1905" y="560" fill="#9e5b00"/><rect x="1645" y="570" fill="#769e1c"/><rect x="1655" y="570" fill="#7b9e1b"/><rect x="1665" y="570" fill="#809e1b"/><rect x="1675" y="570" fill="#869e1a"/><rect x="1685" y="570" fill="#8b9e19"/><rect x="1695" y="570" fill="#919e18"/><rect x="1705" y="570" fill="#969e17"/><rect x="1715" y="570" fill="#9c9e15"/><rect x="1725" y="570" fill="#9e9b14"/><rect x="1735" y="570" fill="#9e9512"/><rect x="1745" y="570" fill="#9e9011"/><rect x="1755" y="570" fill="#9e8b0f"/><rect x="1765" y="570" fill="#9e870e"/><rect x="1775" y="570" fill="#9e820c"/><rect x="1785" y="570" fill="#9e7e0b"/><rect x="1795" y="570" fill="#9e7a0a"/><rect x="1805" y="570" fill="#9e7608"/><rect x="1815" y="570" fill="#9e7307"/><rect x="1825" y="570" fill="#9e6f06"/><rect x="1835" y="570" fill="#9e6c05"/><rect x="1845" y="570" fill="#9e6904"/><rect x="1855" y="570" fill="#9e6603"/><rect x="1865" y="570" fill="#9e6302"/><rect x="1875" y="570" fill="#9e6001"/><rect x="1885" y="570" fill="#9e5d01"/><rect x="1895" y="570" fill="#9e5b00"/><rect x="1905" y="570" fill="#9e5800"/><rect x="1645" y="580" fill="#7a9e1f"/><rect x="1655" y="580" fill="#7f9e1e"/><rect x="1665" y="580" fill="#859e1d"/><rect x="1675" y="580" fill="#8a9e1c"/><rect x="1685" y="580" fill="#909e1b"/><rect x="1695" y="580" fill="#969e1a"/><rect x="1705" y="580" fill="#9b9e19"/><rect x="1715" y="580" fill="#9e9b18"/><rect x="1725" y="580" fill="#9e9616"/><rect x="1735" y="580" fill="#9e9014"/><rect x="1745" y="580" fill="#9e8b13"/><rect x="1755" y="580" fill="#9e8711"/><rect x="1765" y="580" fill="#9e820f"/><rect x="1775" y="580" fill="#9e7e0e"/><rect x="1785" y="580" fill="#9e7a0d"/><rect x="1795" y="580" fill="#9e760b"/><rect x="1805" y="580" fill="#9e720a"/><rect x="1815" y="580" fill="#9e6f09"/><rect x="1825" y="580" fill="#9e6c08"/><rect x="1835" y="580" fill="#9e6807"/><rect x="1845" y="580" fill="#9e6506"/><rect x="1855" y="580" fill="#9e6205"/><rect x="1865" y="580" fill="#9e6004"/><rect x="1875" y="580" fill="#9e5d03"/><rect x="1885" y="580" fill="#9e5a02"/><rect x="1895" y="580" fill="#9e5801"/><rect x="1905" y="580" fill="#9e5500"/><rect x="1645" y="590" fill="#7e9e22"/><rect x="1655" y="590" fill="#849e21"/><rect x="1665" y="590" fill="#899e20"/><rect x="1675" y="590" fill="#8f9e1f"/><rect x="1685" y="590" fill="#959e1e"/><rect x="1695" y="590" fill="#9b9e1d"/><rect x="1705" y="590" fill="#9e9c1c"/><rect x="1715" y="590" fill="#9e961a"/><rect x="1725" y="590" fill="#9e9118"/><rect x="1735" y="590" fill="#9e8c16"/><rect x="1745" y="590" fill="#9e8714"/><rect x="1755" y="590" fill="#9e8213"/><rect x="1765" y="590" fill="#9e7e11"/><rect x="1775" y="590" fill="#9e7a10"/><rect x="1785" y="590" fill="#9e760e"/><rect x="1795" y="590" fill="#9e720d"/><rect x="1805" y="590" fill="#9e6f0c"/><rect x="1815" y="590" fill="#9e6b0b"/><rect x="1825" y="590" fill="#9e680a"/><rect x="1835" y="590" fill="#9e6508"/><rect x="1845" y="590" fill="#9e6207"/><rect x="1855" y="590" fill="#9e5f06"/><rect x="1865" y="590" fill="#9e5d05"/><rect x="1875" y="590" fill="#9e5a04"/><rect x="1885" y="590" fill="#9e5704"/><rect x="1895" y="590" fill="#9e5503"/><rect x="1905" y="590" fill="#9e5302"/><rect x="1645" y="600" fill="#839e25"/><rect x="1655" y="600" fill="#899e24"/><rect x="1665" y="600" fill="#8e9e23"/><rect x="1675" y="600" fill="#949e22"/><rect x="1685" y="600" fill="#9a9e21"/><rect x="1695" y="600" fill="#9e9c20"/><rect x="1705" y="600" fill="#9e961e"/><rect x="1715" y="600" fill="#9e911c"/><rect x="1725" y="600" fill="#9e8c1a"/><rect x="1735" y="600" fill="#9e8718"/><rect x="1745" y="600" fill="#9e8316"/><rect x="1755" y="600" fill="#9e7e15"/><rect x="1765" y="600" fill="#9e7a13"/><rect x="1775" y="600" fill="#9e7612"/><rect x="1785" y="600" fill="#9e7210"/><rect x="1795" y="600" fill="#9e6f0f"/><rect x="1805" y="600" fill="#9e6b0e"/><rect x="1815" y="600" fill="#9e680c"/><rect x="1825" y="600" fill="#9e650b"/><rect x="1835" y="600" fill="#9e620a"/><rect x="1845" y="600" fill="#9e5f09"/><rect x="1855" y="600" fill="#9e5c08"/><rect x="1865" y="600" fill="#9e5a07"/><rect x="1875" y="600" fill="#9e5706"/><rect x="1885" y="600" fill="#9e5405"/><rect x="1895" y="600" fill="#9e5204"/><rect x="1905" y="600" fill="#9e5003"/></g></g><g clip-path="url(#cInTri)"><g filter="url(#fb12)" class="c10"><rect x="1645" y="420" fill="#72ff00"/><rect x="1655" y="420" fill="#78ff00"/><rect x="1665" y="420" fill="#7eff00"/><rect x="1675" y="420" fill="#84ff00"/><rect x="1685" y="420" fill="#8aff00"/><rect x="1695" y="420" fill="#91ff00"/><rect x="1705" y="420" fill="#97ff00"/><rect x="1715" y="420" fill="#9eff00"/><rect x="1725" y="420" fill="#a4ff00"/><rect x="1735" y="420" fill="#abff00"/><rect x="1745" y="420" fill="#b1ff00"/><rect x="1755" y="420" fill="#b8ff00"/><rect x="1765" y="420" fill="#bfff00"/><rect x="1775" y="420" fill="#c6ff00"/><rect x="1785" y="420" fill="#cdff00"/><rect x="1795" y="420" fill="#d4ff00"/><rect x="1805" y="420" fill="#dbff00"/><rect x="1815" y="420" fill="#e3ff00"/><rect x="1825" y="420" fill="#eaff00"/><rect x="1835" y="420" fill="#f2ff00"/><rect x="1845" y="420" fill="#f9ff00"/><rect x="1855" y="420" fill="#fffd00"/><rect x="1865" y="420" fill="#fff600"/><rect x="1875" y="420" fill="#ffef00"/><rect x="1885" y="420" fill="#ffe800"/><rect x="1895" y="420" fill="#ffe100"/><rect x="1905" y="420" fill="#ffdb00"/><rect x="1645" y="430" fill="#76ff00"/><rect x="1655" y="430" fill="#7cff00"/><rect x="1665" y="430" fill="#82ff00"/><rect x="1675" y="430" fill="#89ff00"/><rect x="1685" y="430" fill="#8fff00"/><rect x="1695" y="430" fill="#95ff00"/><rect x="1705" y="430" fill="#9cff00"/><rect x="1715" y="430" fill="#a2ff00"/><rect x="1725" y="430" fill="#a9ff00"/><rect x="1735" y="430" fill="#b0ff00"/><rect x="1745" y="430" fill="#b7ff00"/><rect x="1755" y="430" fill="#beff00"/><rect x="1765" y="430" fill="#c5ff00"/><rect x="1775" y="430" fill="#ccff00"/><rect x="1785" y="430" fill="#d3ff00"/><rect x="1795" y="430" fill="#daff00"/><rect x="1805" y="430" fill="#e2ff00"/><rect x="1815" y="430" fill="#e9ff00"/><rect x="1825" y="430" fill="#f1ff00"/><rect x="1835" y="430" fill="#f8ff00"/><rect x="1845" y="430" fill="#fffe00"/><rect x="1855" y="430" fill="#fff600"/><rect x="1865" y="430" fill="#ffef00"/><rect x="1875" y="430" fill="#ffe800"/><rect x="1885" y="430" fill="#ffe200"/><rect x="1895" y="430" fill="#ffdb00"/><rect x="1905" y="430" fill="#ffd500"/><rect x="1645" y="440" fill="#7aff01"/><rect x="1655" y="440" fill="#80ff00"/><rect x="1665" y="440" fill="#87ff00"/><rect x="1675" y="440" fill="#8dff00"/><rect x="1685" y="440" fill="#94ff00"/><rect x="1695" y="440" fill="#9aff00"/><rect x="1705" y="440" fill="#a1ff00"/><rect x="1715" y="440" fill="#a7ff00"/><rect x="1725" y="440" fill="#aeff00"/><rect x="1735" y="440" fill="#b5ff00"/><rect x="1745" y="440" fill="#bcff00"/><rect x="1755" y="440" fill="#c3ff00"/><rect x="1765" y="440" fill="#caff00"/><rect x="1775" y="440" fill="#d2ff00"/><rect x="1785" y="440" fill="#d9ff00"/><rect x="1795" y="440" fill="#e0ff00"/><rect x="1805" y="440" fill="#e8ff00"/><rect x="1815" y="440" fill="#f0ff00"/><rect x="1825" y="440" fill="#f7ff00"/><rect x="1835" y="440" fill="#ffff00"/><rect x="1845" y="440" fill="#fff700"/><rect x="1855" y="440" fill="#fff000"/><rect x="1865" y="440" fill="#ffe900"/><rect x="1875" y="440" fill="#ffe200"/><rect x="1885" y="440" fill="#ffdc00"/><rect x="1895" y="440" fill="#ffd600"/><rect x="1905" y="440" fill="#ffd000"/><rect x="1645" y="450" fill="#7eff04"/><rect x="1655" y="450" fill="#85ff02"/><rect x="1665" y="450" fill="#8bff01"/><rect x="1675" y="450" fill="#92ff00"/><rect x="1685" y="450" fill="#98ff00"/><rect x="1695" y="450" fill="#9fff00"/><rect x="1705" y="450" fill="#a6ff00"/><rect x="1715" y="450" fill="#adff00"/><rect x="1725" y="450" fill="#b4ff00"/><rect x="1735" y="450" fill="#bbff00"/><rect x="1745" y="450" fill="#c2ff00"/><rect x="1755" y="450" fill="#c9ff00"/><rect x="1765" y="450" fill="#d0ff00"/><rect x="1775" y="450" fill="#d8ff00"/><rect x="1785" y="450" fill="#dfff00"/><rect x="1795" y="450" fill="#e7ff00"/><rect x="1805" y="450" fill="#efff00"/><rect x="1815" y="450" fill="#f6ff00"/><rect x="1825" y="450" fill="#feff00"/><rect x="1835" y="450" fill="#fff800"/><rect x="1845" y="450" fill="#fff000"/><rect x="1855" y="450" fill="#ffe900"/><rect x="1865" y="450" fill="#ffe300"/><rect x="1875" y="450" fill="#ffdc00"/><rect x="1885" y="450" fill="#ffd600"/><rect x="1895" y="450" fill="#ffd000"/><rect x="1905" y="450" fill="#ffca00"/><rect x="1645" y="460" fill="#83ff06"/><rect x="1655" y="460" fill="#89ff05"/><rect x="1665" y="460" fill="#90ff03"/><rect x="1675" y="460" fill="#96ff02"/><rect x="1685" y="460" fill="#9dff00"/><rect x="1695" y="460" fill="#a4ff00"/><rect x="1705" y="460" fill="#abff00"/><rect x="1715" y="460" fill="#b2ff00"/><rect x="1725" y="460" fill="#b9ff00"/><rect x="1735" y="460" fill="#c0ff00"/><rect x="1745" y="460" fill="#c8ff00"/><rect x="1755" y="460" fill="#cfff00"/><rect x="1765" y="460" fill="#d6ff00"/><rect x="1775" y="460" fill="#deff00"/><rect x="1785" y="460" fill="#e6ff00"/><rect x="1795" y="460" fill="#eeff00"/><rect x="1805" y="460" fill="#f5ff00"/><rect x="1815" y="460" fill="#fdff00"/><rect x="1825" y="460" fill="#fff900"/><rect x="1835" y="460" fill="#fff100"/><rect x="1845" y="460" fill="#ffea00"/><rect x="1855" y="460" fill="#ffe300"/><rect x="1865" y="460" fill="#ffdc00"/><rect x="1875" y="460" fill="#ffd600"/><rect x="1885" y="460" fill="#ffd000"/><rect x="1895" y="460" fill="#ffca00"/><rect x="1905" y="460" fill="#ffc500"/><rect x="1645" y="470" fill="#87ff09"/><rect x="1655" y="470" fill="#8eff08"/><rect x="1665" y="470" fill="#95ff06"/><rect x="1675" y="470" fill="#9bff05"/><rect x="1685" y="470" fill="#a2ff03"/><rect x="1695" y="470" fill="#a9ff02"/><rect x="1705" y="470" fill="#b0ff00"/><rect x="1715" y="470" fill="#b8ff00"/><rect x="1725" y="470" fill="#bfff00"/><rect x="1735" y="470" fill="#c6ff00"/><rect x="1745" y="470" fill="#ceff00"/><rect x="1755" y="470" fill="#d5ff00"/><rect x="1765" y="470" fill="#ddff00"/><rect x="1775" y="470" fill="#e5ff00"/><rect x="1785" y="470" fill="#ecff00"/><rect x="1795" y="470" fill="#f4ff00"/><rect x="1805" y="470" fill="#fdff00"/><rect x="1815" y="470" fill="#fff900"/><rect x="1825" y="470" fill="#fff200"/><rect x="1835" y="470" fill="#ffea00"/><rect x="1845" y="470" fill="#ffe300"/><rect x="1855" y="470" fill="#ffdd00"/><rect x="1865" y="470" fill="#ffd600"/><rect x="1875" y="470" fill="#ffd000"/><rect x="1885" y="470" fill="#ffca00"/><rect x="1895" y="470" fill="#ffc500"/><rect x="1905" y="470" fill="#ffbf00"/><rect x="1645" y="480" fill="#8cff0d"/><rect x="1655" y="480" fill="#93ff0b"/><rect x="1665" y="480" fill="#9aff0a"/><rect x="1675" y="480" fill="#a0ff08"/><rect x="1685" y="480" fill="#a8ff06"/><rect x="1695" y="480" fill="#afff05"/><rect x="1705" y="480" fill="#b6ff03"/><rect x="1715" y="480" fill="#bdff02"/><rect x="1725" y="480" fill="#c5ff00"/><rect x="1735" y="480" fill="#ccff00"/><rect x="1745" y="480" fill="#d4ff00"/><rect x="1755" y="480" fill="#dcff00"/><rect x="1765" y="480" fill="#e3ff00"/><rect x="1775" y="480" fill="#ebff00"/><rect x="1785" y="480" fill="#f3ff00"/><rect x="1795" y="480" fill="#fcff00"/><rect x="1805" y="480" fill="#fffa00"/><rect x="1815" y="480" fill="#fff200"/><rect x="1825" y="480" fill="#ffeb00"/><rect x="1835" y="480" fill="#ffe400"/><rect x="1845" y="480" fill="#ffdd00"/><rect x="1855" y="480" fill="#ffd700"/><rect x="1865" y="480" fill="#ffd000"/><rect x="1875" y="480" fill="#ffca00"/><rect x="1885" y="480" fill="#ffc500"/><rect x="1895" y="480" fill="#ffbf00"/><rect x="1905" y="480" fill="#ffba00"/><rect x="1645" y="490" fill="#91ff10"/><rect x="1655" y="490" fill="#98ff0e"/><rect x="1665" y="490" fill="#9fff0d"/><rect x="1675" y="490" fill="#a6ff0b"/><rect x="1685" y="490" fill="#adff0a"/><rect x="1695" y="490" fill="#b4ff08"/><rect x="1705" y="490" fill="#bcff06"/><rect x="1715" y="490" fill="#c3ff05"/><rect x="1725" y="490" fill="#cbff03"/><rect x="1735" y="490" fill="#d3ff01"/><rect x="1745" y="490" fill="#daff00"/><rect x="1755" y="490" fill="#e2ff00"/><rect x="1765" y="490" fill="#eaff00"/><rect x="1775" y="490" fill="#f2ff00"/><rect x="1785" y="490" fill="#fbff00"/><rect x="1795" y="490" fill="#fffb00"/><rect x="1805" y="490" fill="#fff300"/><rect x="1815" y="490" fill="#ffeb00"/><rect x="1825" y="490" fill="#ffe400"/><rect x="1835" y="490" fill="#ffdd00"/><rect x="1845" y="490" fill="#ffd700"/><rect x="1855" y="490" fill="#ffd000"/><rect x="1865" y="490" fill="#ffca00"/><rect x="1875" y="490" fill="#ffc500"/><rect x="1885" y="490" fill="#ffbf00"/><rect x="1895" y="490" fill="#ffba00"/><rect x="1905" y="490" fill="#ffb500"/><rect x="1645" y="500" fill="#96ff13"/><rect x="1655" y="500" fill="#9dff12"/><rect x="1665" y="500" fill="#a4ff10"/><rect x="1675" y="500" fill="#abff0e"/><rect x="1685" y="500" fill="#b3ff0d"/><rect x="1695" y="500" fill="#baff0b"/><rect x="1705" y="500" fill="#c2ff0a"/><rect x="1715" y="500" fill="#c9ff08"/><rect x="1725" y="500" fill="#d1ff06"/><rect x="1735" y="500" fill="#d9ff05"/><rect x="1745" y="500" fill="#e1ff03"/><rect x="1755" y="500" fill="#e9ff01"/><rect x="1765" y="500" fill="#f1ff00"/><rect x="1775" y="500" fill="#faff00"/><rect x="1785" y="500" fill="#fffc00"/><rect x="1795" y="500" fill="#fff400"/><rect x="1805" y="500" fill="#ffec00"/><rect x="1815" y="500" fill="#ffe500"/><rect x="1825" y="500" fill="#ffde00"/><rect x="1835" y="500" fill="#ffd700"/><rect x="1845" y="500" fill="#ffd100"/><rect x="1855" y="500" fill="#ffcb00"/><rect x="1865" y="500" fill="#ffc500"/><rect x="1875" y="500" fill="#ffbf00"/><rect x="1885" y="500" fill="#ffba00"/><rect x="1895" y="500" fill="#ffb500"/><rect x="1905" y="500" fill="#ffb000"/><rect x="1645" y="510" fill="#9bff16"/><rect x="1655" y="510" fill="#a2ff15"/><rect x="1665" y="510" fill="#a9ff13"/><rect x="1675" y="510" fill="#b1ff12"/><rect x="1685" y="510" fill="#b8ff10"/><rect x="1695" y="510" fill="#c0ff0f"/><rect x="1705" y="510" fill="#c8ff0d"/><rect x="1715" y="510" fill="#d0ff0b"/><rect x="1725" y="510" fill="#d8ff0a"/><rect x="1735" y="510" fill="#e0ff08"/><rect x="1745" y="510" fill="#e8ff06"/><rect x="1755" y="510" fill="#f0ff05"/><rect x="1765" y="510" fill="#f9ff03"/><rect x="1775" y="510" fill="#fffd01"/><rect x="1785" y="510" fill="#fff400"/><rect x="1795" y="510" fill="#ffed00"/><rect x="1805" y="510" fill="#ffe500"/><rect x="1815" y="510" fill="#ffde00"/><rect x="1825" y="510" fill="#ffd700"/><rect x="1835" y="510" fill="#ffd100"/><rect x="1845" y="510" fill="#ffcb00"/><rect x="1855" y="510" fill="#ffc500"/><rect x="1865" y="510" fill="#ffbf00"/><rect x="1875" y="510" fill="#ffba00"/><rect x="1885" y="510" fill="#ffb400"/><rect x="1895" y="510" fill="#ffaf00"/><rect x="1905" y="510" fill="#ffab00"/><rect x="1645" y="520" fill="#a0ff1a"/><rect x="1655" y="520" fill="#a8ff19"/><rect x="1665" y="520" fill="#afff17"/><rect x="1675" y="520" fill="#b7ff15"/><rect x="1685" y="520" fill="#bfff14"/><rect x="1695" y="520" fill="#c6ff12"/><rect x="1705" y="520" fill="#ceff11"/><rect x="1715" y="520" fill="#d6ff0f"/><rect x="1725" y="520" fill="#dfff0d"/><rect x="1735" y="520" fill="#e7ff0c"/><rect x="1745" y="520" fill="#efff0a"/><rect x="1755" y="520" fill="#f8ff08"/><rect x="1765" y="520" fill="#fffe06"/><rect x="1775" y="520" fill="#fff504"/><rect x="1785" y="520" fill="#ffed02"/><rect x="1795" y="520" fill="#ffe601"/><rect x="1805" y="520" fill="#ffde00"/><rect x="1815" y="520" fill="#ffd800"/><rect x="1825" y="520" fill="#ffd100"/><rect x="1835" y="520" fill="#ffcb00"/><rect x="1845" y="520" fill="#ffc500"/><rect x="1855" y="520" fill="#ffbf00"/><rect x="1865" y="520" fill="#ffba00"/><rect x="1875" y="520" fill="#ffb400"/><rect x="1885" y="520" fill="#ffaf00"/><rect x="1895" y="520" fill="#ffaa00"/><rect x="1905" y="520" fill="#ffa600"/><rect x="1645" y="530" fill="#a6ff1e"/><rect x="1655" y="530" fill="#adff1c"/><rect x="1665" y="530" fill="#b5ff1b"/><rect x="1675" y="530" fill="#bdff19"/><rect x="1685" y="530" fill="#c5ff17"/><rect x="1695" y="530" fill="#cdff16"/><rect x="1705" y="530" fill="#d5ff14"/><rect x="1715" y="530" fill="#ddff13"/><rect x="1725" y="530" fill="#e6ff11"/><rect x="1735" y="530" fill="#eeff0f"/><rect x="1745" y="530" fill="#f7ff0d"/><rect x="1755" y="530" fill="#fffe0c"/><rect x="1765" y="530" fill="#fff60a"/><rect x="1775" y="530" fill="#ffee08"/><rect x="1785" y="530" fill="#ffe606"/><rect x="1795" y="530" fill="#ffdf04"/><rect x="1805" y="530" fill="#ffd802"/><rect x="1815" y="530" fill="#ffd100"/><rect x="1825" y="530" fill="#ffcb00"/><rect x="1835" y="530" fill="#ffc500"/><rect x="1845" y="530" fill="#ffbf00"/><rect x="1855" y="530" fill="#ffb900"/><rect x="1865" y="530" fill="#ffb400"/><rect x="1875" y="530" fill="#ffaf00"/><rect x="1885" y="530" fill="#ffaa00"/><rect x="1895" y="530" fill="#ffa500"/><rect x="1905" y="530" fill="#ffa100"/><rect x="1645" y="540" fill="#acff22"/><rect x="1655" y="540" fill="#b3ff20"/><rect x="1665" y="540" fill="#bbff1e"/><rect x="1675" y="540" fill="#c3ff1d"/><rect x="1685" y="540" fill="#cbff1b"/><rect x="1695" y="540" fill="#d4ff1a"/><rect x="1705" y="540" fill="#dcff18"/><rect x="1715" y="540" fill="#e4ff16"/><rect x="1725" y="540" fill="#edff15"/><rect x="1735" y="540" fill="#f6ff13"/><rect x="1745" y="540" fill="#ffff11"/><rect x="1755" y="540" fill="#fff70f"/><rect x="1765" y="540" fill="#ffee0d"/><rect x="1775" y="540" fill="#ffe70b"/><rect x="1785" y="540" fill="#ffdf09"/><rect x="1795" y="540" fill="#ffd807"/><rect x="1805" y="540" fill="#ffd105"/><rect x="1815" y="540" fill="#ffcb03"/><rect x="1825" y="540" fill="#ffc502"/><rect x="1835" y="540" fill="#ffbf00"/><rect x="1845" y="540" fill="#ffb900"/><rect x="1855" y="540" fill="#ffb400"/><rect x="1865" y="540" fill="#ffaf00"/><rect x="1875" y="540" fill="#ffaa00"/><rect x="1885" y="540" fill="#ffa500"/><rect x="1895" y="540" fill="#ffa000"/><rect x="1905" y="540" fill="#ff9c00"/><rect x="1645" y="550" fill="#b2ff25"/><rect x="1655" y="550" fill="#b9ff24"/><rect x="1665" y="550" fill="#c2ff22"/><rect x="1675" y="550" fill="#caff21"/><rect x="1685" y="550" fill="#d2ff1f"/><rect x="1695" y="550" fill="#dbff1e"/><rect x="1705" y="550" fill="#e3ff1c"/><rect x="1715" y="550" fill="#ecff1a"/><rect x="1725" y="550" fill="#f5ff19"/><rect x="1735" y="550" fill="#feff17"/><rect x="1745" y="550" fill="#fff815"/><rect x="1755" y="550" fill="#ffef12"/><rect x="1765" y="550" fill="#ffe710"/><rect x="1775" y="550" fill="#ffe00e"/><rect x="1785" y="550" fill="#ffd80c"/><rect x="1795" y="550" fill="#ffd20a"/><rect x="1805" y="550" fill="#ffcb08"/><rect x="1815" y="550" fill="#ffc506"/><rect x="1825" y="550" fill="#ffbf05"/><rect x="1835" y="550" fill="#ffb903"/><rect x="1845" y="550" fill="#ffb401"/><rect x="1855" y="550" fill="#ffae00"/><rect x="1865" y="550" fill="#ffa900"/><rect x="1875" y="550" fill="#ffa500"/><rect x="1885" y="550" fill="#ffa000"/><rect x="1895" y="550" fill="#ff9c00"/><rect x="1905" y="550" fill="#ff9700"/><rect x="1645" y="560" fill="#b8ff2a"/><rect x="1655" y="560" fill="#c0ff28"/><rect x="1665" y="560" fill="#c8ff27"/><rect x="1675" y="560" fill="#d1ff25"/><rect x="1685" y="560" fill="#d9ff23"/><rect x="1695" y="560" fill="#e2ff22"/><rect x="1705" y="560" fill="#ebff20"/><rect x="1715" y="560" fill="#f4ff1e"/><rect x="1725" y="560" fill="#fdff1d"/><rect x="1735" y="560" fill="#fff81a"/><rect x="1745" y="560" fill="#fff018"/><rect x="1755" y="560" fill="#ffe815"/><rect x="1765" y="560" fill="#ffe013"/><rect x="1775" y="560" fill="#ffd911"/><rect x="1785" y="560" fill="#ffd20f"/><rect x="1795" y="560" fill="#ffcb0d"/><rect x="1805" y="560" fill="#ffc50b"/><rect x="1815" y="560" fill="#ffbf09"/><rect x="1825" y="560" fill="#ffb907"/><rect x="1835" y="560" fill="#ffb306"/><rect x="1845" y="560" fill="#ffae04"/><rect x="1855" y="560" fill="#ffa903"/><rect x="1865" y="560" fill="#ffa401"/><rect x="1875" y="560" fill="#ffa000"/><rect x="1885" y="560" fill="#ff9b00"/><rect x="1895" y="560" fill="#ff9700"/><rect x="1905" y="560" fill="#ff9300"/><rect x="1645" y="570" fill="#beff2e"/><rect x="1655" y="570" fill="#c7ff2c"/><rect x="1665" y="570" fill="#cfff2b"/><rect x="1675" y="570" fill="#d8ff29"/><rect x="1685" y="570" fill="#e0ff28"/><rect x="1695" y="570" fill="#e9ff26"/><rect x="1705" y="570" fill="#f2ff24"/><rect x="1715" y="570" fill="#fcff23"/><rect x="1725" y="570" fill="#fff920"/><rect x="1735" y="570" fill="#fff01d"/><rect x="1745" y="570" fill="#ffe81b"/><rect x="1755" y="570" fill="#ffe018"/><rect x="1765" y="570" fill="#ffd916"/><rect x="1775" y="570" fill="#ffd214"/><rect x="1785" y="570" fill="#ffcb12"/><rect x="1795" y="570" fill="#ffc510"/><rect x="1805" y="570" fill="#ffbf0e"/><rect x="1815" y="570" fill="#ffb90c"/><rect x="1825" y="570" fill="#ffb30a"/><rect x="1835" y="570" fill="#ffae08"/><rect x="1845" y="570" fill="#ffa907"/><rect x="1855" y="570" fill="#ffa405"/><rect x="1865" y="570" fill="#ff9f04"/><rect x="1875" y="570" fill="#ff9b02"/><rect x="1885" y="570" fill="#ff9601"/><rect x="1895" y="570" fill="#ff9200"/><rect x="1905" y="570" fill="#ff8e00"/><rect x="1645" y="580" fill="#c5ff32"/><rect x="1655" y="580" fill="#ceff31"/><rect x="1665" y="580" fill="#d6ff2f"/><rect x="1675" y="580" fill="#dfff2e"/><rect x="1685" y="580" fill="#e8ff2c"/><rect x="1695" y="580" fill="#f1ff2a"/><rect x="1705" y="580" fill="#fbff29"/><rect x="1715" y="580" fill="#fffa26"/><rect x="1725" y="580" fill="#fff123"/><rect x="1735" y="580" fill="#ffe921"/><rect x="1745" y="580" fill="#ffe11e"/><rect x="1755" y="580" fill="#ffd91b"/><rect x="1765" y="580" fill="#ffd219"/><rect x="1775" y="580" fill="#ffcb17"/><rect x="1785" y="580" fill="#ffc515"/><rect x="1795" y="580" fill="#ffbf12"/><rect x="1805" y="580" fill="#ffb910"/><rect x="1815" y="580" fill="#ffb30f"/><rect x="1825" y="580" fill="#ffae0d"/><rect x="1835" y="580" fill="#ffa80b"/><rect x="1845" y="580" fill="#ffa309"/><rect x="1855" y="580" fill="#ff9f08"/><rect x="1865" y="580" fill="#ff9a06"/><rect x="1875" y="580" fill="#ff9605"/><rect x="1885" y="580" fill="#ff9203"/><rect x="1895" y="580" fill="#ff8d02"/><rect x="1905" y="580" fill="#ff8a01"/><rect x="1645" y="590" fill="#ccff37"/><rect x="1655" y="590" fill="#d5ff35"/><rect x="1665" y="590" fill="#deff34"/><rect x="1675" y="590" fill="#e7ff32"/><rect x="1685" y="590" fill="#f0ff31"/><rect x="1695" y="590" fill="#f9ff2f"/><rect x="1705" y="590" fill="#fffb2d"/><rect x="1715" y="590" fill="#fff22a"/><rect x="1725" y="590" fill="#ffe926"/><rect x="1735" y="590" fill="#ffe124"/><rect x="1745" y="590" fill="#ffda21"/><rect x="1755" y="590" fill="#ffd21e"/><rect x="1765" y="590" fill="#ffcb1c"/><rect x="1775" y="590" fill="#ffc51a"/><rect x="1785" y="590" fill="#ffbe17"/><rect x="1795" y="590" fill="#ffb815"/><rect x="1805" y="590" fill="#ffb313"/><rect x="1815" y="590" fill="#ffad11"/><rect x="1825" y="590" fill="#ffa80f"/><rect x="1835" y="590" fill="#ffa30e"/><rect x="1845" y="590" fill="#ff9e0c"/><rect x="1855" y="590" fill="#ff9a0a"/><rect x="1865" y="590" fill="#ff9509"/><rect x="1875" y="590" fill="#ff9107"/><rect x="1885" y="590" fill="#ff8d06"/><rect x="1895" y="590" fill="#ff8904"/><rect x="1905" y="590" fill="#ff8503"/><rect x="1645" y="600" fill="#d3ff3c"/><rect x="1655" y="600" fill="#dcff3a"/><rect x="1665" y="600" fill="#e5ff39"/><rect x="1675" y="600" fill="#efff37"/><rect x="1685" y="600" fill="#f8ff36"/><rect x="1695" y="600" fill="#fffc33"/><rect x="1705" y="600" fill="#fff330"/><rect x="1715" y="600" fill="#ffea2d"/><rect x="1725" y="600" fill="#ffe22a"/><rect x="1735" y="600" fill="#ffda27"/><rect x="1745" y="600" fill="#ffd324"/><rect x="1755" y="600" fill="#ffcb21"/><rect x="1765" y="600" fill="#ffc51f"/><rect x="1775" y="600" fill="#ffbe1c"/><rect x="1785" y="600" fill="#ffb81a"/><rect x="1795" y="600" fill="#ffb318"/><rect x="1805" y="600" fill="#ffad16"/><rect x="1815" y="600" fill="#ffa814"/><rect x="1825" y="600" fill="#ffa312"/><rect x="1835" y="600" fill="#ff9e10"/><rect x="1845" y="600" fill="#ff990e"/><rect x="1855" y="600" fill="#ff950d"/><rect x="1865" y="600" fill="#ff900b"/><rect x="1875" y="600" fill="#ff8c0a"/><rect x="1885" y="600" fill="#ff8808"/><rect x="1895" y="600" fill="#ff8407"/><rect x="1905" y="600" fill="#ff8105"/></g></g></g>
<g clip-path="url(#cIn)"><rect x="1771.9" y="503.9" width="16" height="16" fill="none" stroke="#fff" stroke-width="2"/><rect x="1713.4" y="570.0" width="16" height="16" fill="none" stroke="#fff" stroke-width="2"/><circle cx="1794.9" cy="438.5" r="4.9" fill="#c8c000" stroke="#1a1a1a" stroke-width="1.7"/><circle cx="1737.2" cy="510.3" r="4.9" fill="#b8b048" stroke="#1a1a1a" stroke-width="1.7"/><circle cx="1672.2" cy="589.8" r="4.9" fill="#b0aa70" stroke="#1a1a1a" stroke-width="1.7"/></g>
<rect x="1658.5" y="429.8" width="244" height="165.6" fill="none" stroke="#9a9a9a" stroke-width="2"/>
<text x="55.4" y="682.4" font-size="33.5" fill="#f0f0f0" textLength="269.0" lengthAdjust="spacingAndGlyphs">Avg dE2000: 5.63</text>
<text x="47.7" y="730.0" font-size="33.5" fill="#f0f0f0" textLength="283.0" lengthAdjust="spacingAndGlyphs">Max dE2000: 9.76</text>
<text x="12.5" y="784.4" font-size="33.5" fill="#f0f0f0" textLength="255.2" lengthAdjust="spacingAndGlyphs">Current Reading</text>
<text x="13.8" y="825.6" font-size="28.5" fill="#f0f0f0" textLength="118.8" lengthAdjust="spacingAndGlyphs">x: 0.4251</text>
<text x="194.1" y="825.6" font-size="28.5" fill="#f0f0f0" textLength="119.6" lengthAdjust="spacingAndGlyphs">y: 0.5471</text>
<text x="13.8" y="872.5" font-size="28.5" fill="#f0f0f0" textLength="112.2" lengthAdjust="spacingAndGlyphs">fL: 61.57</text>
<text x="12.9" y="911.8" font-size="28.5" fill="#f0f0f0" textLength="184.9" lengthAdjust="spacingAndGlyphs">cd/m²: 210.94</text>
<text x="486.1" y="684.0" font-size="17" fill="#d8d8d8" textLength="97.6" lengthAdjust="spacingAndGlyphs">RGB Balance</text>
<rect x="408.70" y="689.90" width="288.00" height="208.80" fill="#232323"/>
<line x1="408.70" y1="726.20" x2="696.70" y2="726.20" stroke="#8c8c8c" stroke-width="1.6"/>
<line x1="401.70" y1="726.20" x2="408.70" y2="726.20" stroke="#a0a0a0" stroke-width="1.6"/>
<text x="401.2" y="732.2" font-size="16.5" fill="#d8d8d8" text-anchor="end">120</text>
<line x1="408.70" y1="795.60" x2="696.70" y2="795.60" stroke="#8c8c8c" stroke-width="1.6"/>
<line x1="401.70" y1="795.60" x2="408.70" y2="795.60" stroke="#a0a0a0" stroke-width="1.6"/>
<text x="401.2" y="801.6" font-size="16.5" fill="#d8d8d8" text-anchor="end">100</text>
<line x1="408.70" y1="864.20" x2="696.70" y2="864.20" stroke="#8c8c8c" stroke-width="1.6"/>
<line x1="401.70" y1="864.20" x2="408.70" y2="864.20" stroke="#a0a0a0" stroke-width="1.6"/>
<text x="401.2" y="870.2" font-size="16.5" fill="#d8d8d8" text-anchor="end">80</text>
<rect x="436.80" y="816.20" width="75.00" height="82.50" fill="url(#gr)" stroke="#000" stroke-width="1.6"/>
<rect x="514.40" y="800.50" width="74.30" height="98.20" fill="url(#gg)" stroke="#000" stroke-width="1.6"/>
<rect x="591.30" y="885.60" width="74.60" height="13.10" fill="url(#gbb)" stroke="#000" stroke-width="1.6"/>
<path d="M408.7,689.9 H696.7 V898.7" fill="none" stroke="#a0a0a0" stroke-width="1.8"/>
<line x1="408.70" y1="689.90" x2="408.70" y2="905.50" stroke="#a0a0a0" stroke-width="1.8"/>
<line x1="408.70" y1="898.70" x2="696.70" y2="898.70" stroke="#a0a0a0" stroke-width="1.8"/>
<line x1="696.70" y1="898.70" x2="696.70" y2="905.50" stroke="#a0a0a0" stroke-width="1.6"/>
<text x="553.0" y="917.5" font-size="16.5" fill="#d8d8d8" text-anchor="middle">100%</text>
<rect x="720.00" y="654.50" width="842.00" height="271.00" fill="#1c1c1c"/>
<rect x="722.00" y="656.00" width="838.00" height="32.00" fill="url(#gth)"/>
<text x="984.6" y="679.5" font-size="19.5" fill="#f0f0f0" textLength="46.1" lengthAdjust="spacingAndGlyphs" font-weight="bold">20%</text>
<text x="1107.3" y="679.5" font-size="19.5" fill="#f0f0f0" textLength="46.1" lengthAdjust="spacingAndGlyphs" font-weight="bold">40%</text>
<text x="1229.6" y="679.5" font-size="19.5" fill="#f0f0f0" textLength="47.0" lengthAdjust="spacingAndGlyphs" font-weight="bold">60%</text>
<text x="1352.7" y="679.5" font-size="19.5" fill="#f0f0f0" textLength="46.2" lengthAdjust="spacingAndGlyphs" font-weight="bold">80%</text>
<text x="1469.2" y="679.5" font-size="19.5" fill="#f0f0f0" textLength="59.6" lengthAdjust="spacingAndGlyphs" font-weight="bold">100%</text>
<rect x="722.00" y="688.00" width="838.00" height="29.69" fill="#424242"/>
<text x="743.1" y="709.5" font-size="20.5" fill="#f4f4f4" textLength="99.7" lengthAdjust="spacingAndGlyphs" font-weight="bold">x: CIE31</text>
<text x="953.1" y="709.5" font-size="20.5" fill="#f4f4f4" textLength="80.1" lengthAdjust="spacingAndGlyphs">0.3250</text>
<text x="1075.8" y="709.5" font-size="20.5" fill="#f4f4f4" textLength="80.1" lengthAdjust="spacingAndGlyphs">0.3518</text>
<text x="1198.1" y="709.5" font-size="20.5" fill="#f4f4f4" textLength="80.1" lengthAdjust="spacingAndGlyphs">0.3783</text>
<text x="1320.8" y="709.5" font-size="20.5" fill="#f4f4f4" textLength="80.1" lengthAdjust="spacingAndGlyphs">0.4030</text>
<text x="1443.6" y="709.5" font-size="20.5" fill="#f4f4f4" textLength="80.1" lengthAdjust="spacingAndGlyphs">0.4251</text>
<rect x="722.00" y="717.69" width="838.00" height="29.69" fill="#858585"/>
<text x="743.1" y="739.2" font-size="20.5" fill="#f4f4f4" textLength="99.7" lengthAdjust="spacingAndGlyphs" font-weight="bold">y: CIE31</text>
<text x="953.1" y="739.2" font-size="20.5" fill="#f4f4f4" textLength="80.1" lengthAdjust="spacingAndGlyphs">0.3614</text>
<text x="1075.8" y="739.2" font-size="20.5" fill="#f4f4f4" textLength="78.1" lengthAdjust="spacingAndGlyphs">0.4112</text>
<text x="1198.1" y="739.2" font-size="20.5" fill="#f4f4f4" textLength="80.1" lengthAdjust="spacingAndGlyphs">0.4603</text>
<text x="1320.8" y="739.2" font-size="20.5" fill="#f4f4f4" textLength="80.1" lengthAdjust="spacingAndGlyphs">0.5061</text>
<text x="1443.6" y="739.2" font-size="20.5" fill="#f4f4f4" textLength="80.1" lengthAdjust="spacingAndGlyphs">0.5471</text>
<rect x="722.00" y="747.38" width="838.00" height="29.69" fill="#424242"/>
<text x="742.9" y="768.9" font-size="20.5" fill="#f4f4f4" textLength="15.2" lengthAdjust="spacingAndGlyphs" font-weight="bold">Y</text>
<text x="952.8" y="768.9" font-size="20.5" fill="#f4f4f4" textLength="109.2" lengthAdjust="spacingAndGlyphs">220.5671</text>
<text x="1075.5" y="768.9" font-size="20.5" fill="#f4f4f4" textLength="109.2" lengthAdjust="spacingAndGlyphs">217.3268</text>
<text x="1197.8" y="768.9" font-size="20.5" fill="#f4f4f4" textLength="109.2" lengthAdjust="spacingAndGlyphs">214.7806</text>
<text x="1320.5" y="768.9" font-size="20.5" fill="#f4f4f4" textLength="109.2" lengthAdjust="spacingAndGlyphs">212.9165</text>
<text x="1443.3" y="768.9" font-size="20.5" fill="#f4f4f4" textLength="109.2" lengthAdjust="spacingAndGlyphs">210.9391</text>
<rect x="722.00" y="777.07" width="838.00" height="29.69" fill="#858585"/>
<text x="743.0" y="798.6" font-size="20.5" fill="#f4f4f4" textLength="181.5" lengthAdjust="spacingAndGlyphs" font-weight="bold">Target x:CIE31</text>
<text x="953.1" y="798.6" font-size="20.5" fill="#f4f4f4" textLength="80.1" lengthAdjust="spacingAndGlyphs">0.3344</text>
<text x="1075.8" y="798.6" font-size="20.5" fill="#f4f4f4" textLength="80.1" lengthAdjust="spacingAndGlyphs">0.3564</text>
<text x="1198.1" y="798.6" font-size="20.5" fill="#f4f4f4" textLength="80.1" lengthAdjust="spacingAndGlyphs">0.3773</text>
<text x="1320.8" y="798.6" font-size="20.5" fill="#f4f4f4" textLength="80.1" lengthAdjust="spacingAndGlyphs">0.3969</text>
<text x="1443.6" y="798.6" font-size="20.5" fill="#f4f4f4" textLength="80.1" lengthAdjust="spacingAndGlyphs">0.4193</text>
<rect x="722.00" y="806.76" width="838.00" height="29.69" fill="#424242"/>
<text x="743.0" y="828.3" font-size="20.5" fill="#f4f4f4" textLength="181.5" lengthAdjust="spacingAndGlyphs" font-weight="bold">Target y:CIE31</text>
<text x="953.1" y="828.3" font-size="20.5" fill="#f4f4f4" textLength="80.1" lengthAdjust="spacingAndGlyphs">0.3648</text>
<text x="1075.8" y="828.3" font-size="20.5" fill="#f4f4f4" textLength="80.1" lengthAdjust="spacingAndGlyphs">0.4013</text>
<text x="1198.1" y="828.3" font-size="20.5" fill="#f4f4f4" textLength="80.1" lengthAdjust="spacingAndGlyphs">0.4358</text>
<text x="1320.8" y="828.3" font-size="20.5" fill="#f4f4f4" textLength="80.1" lengthAdjust="spacingAndGlyphs">0.4682</text>
<text x="1443.6" y="828.3" font-size="20.5" fill="#f4f4f4" textLength="80.1" lengthAdjust="spacingAndGlyphs">0.5053</text>
<rect x="722.00" y="836.45" width="838.00" height="29.69" fill="#858585"/>
<text x="743.0" y="858.0" font-size="20.5" fill="#f4f4f4" textLength="117.2" lengthAdjust="spacingAndGlyphs" font-weight="bold">Target Y</text>
<text x="952.8" y="858.0" font-size="20.5" fill="#f4f4f4" textLength="109.2" lengthAdjust="spacingAndGlyphs">241.8337</text>
<text x="1075.5" y="858.0" font-size="20.5" fill="#f4f4f4" textLength="109.2" lengthAdjust="spacingAndGlyphs">237.5888</text>
<text x="1197.8" y="858.0" font-size="20.5" fill="#f4f4f4" textLength="109.2" lengthAdjust="spacingAndGlyphs">234.3272</text>
<text x="1320.5" y="858.0" font-size="20.5" fill="#f4f4f4" textLength="109.2" lengthAdjust="spacingAndGlyphs">231.7675</text>
<text x="1443.3" y="858.0" font-size="20.5" fill="#f4f4f4" textLength="109.2" lengthAdjust="spacingAndGlyphs">229.2928</text>
<rect x="722.00" y="866.14" width="838.00" height="29.69" fill="#424242"/>
<text x="742.2" y="887.6" font-size="20.5" fill="#f4f4f4" textLength="105.2" lengthAdjust="spacingAndGlyphs" font-weight="bold">ΔE 2000</text>
<text x="953.1" y="887.6" font-size="20.5" fill="#f4f4f4" textLength="80.1" lengthAdjust="spacingAndGlyphs">3.9491</text>
<text x="1075.8" y="887.6" font-size="20.5" fill="#f4f4f4" textLength="80.1" lengthAdjust="spacingAndGlyphs">3.5367</text>
<text x="1198.1" y="887.6" font-size="20.5" fill="#f4f4f4" textLength="80.1" lengthAdjust="spacingAndGlyphs">3.9194</text>
<text x="1321.2" y="887.6" font-size="20.5" fill="#f4f4f4" textLength="80.1" lengthAdjust="spacingAndGlyphs">4.4865</text>
<text x="1443.6" y="887.6" font-size="20.5" fill="#f4f4f4" textLength="80.1" lengthAdjust="spacingAndGlyphs">5.0101</text>
<rect x="722.00" y="895.83" width="838.00" height="29.69" fill="#858585"/>
<text x="742.3" y="917.3" font-size="20.5" fill="#f4f4f4" textLength="83.9" lengthAdjust="spacingAndGlyphs" font-weight="bold">ΔE ITP</text>
<text x="953.0" y="917.3" font-size="20.5" fill="#f4f4f4" textLength="80.1" lengthAdjust="spacingAndGlyphs">8.8723</text>
<text x="1075.6" y="917.3" font-size="20.5" fill="#f4f4f4" textLength="80.1" lengthAdjust="spacingAndGlyphs">9.1020</text>
<text x="1197.1" y="917.3" font-size="20.5" fill="#f4f4f4" textLength="94.6" lengthAdjust="spacingAndGlyphs">13.4197</text>
<text x="1320.5" y="917.3" font-size="20.5" fill="#f4f4f4" textLength="94.6" lengthAdjust="spacingAndGlyphs">21.8608</text>
<text x="1443.6" y="917.3" font-size="20.5" fill="#f4f4f4" textLength="94.6" lengthAdjust="spacingAndGlyphs">30.6812</text>
<rect x="0.00" y="1065.50" width="1920.00" height="55.50" fill="url(#gbar)"/>
<path d="M0,1065.5 H32.5 Q36.5,1065.5 36.5,1069.5 V1119 H0 Z" fill="url(#gtile)"/>
<circle cx="16.5" cy="1074" r="6" fill="#777" stroke="#666"/>
<polygon points="12,1076.5 21,1076.5 16.5,1071" fill="#222"/>
<rect x="2" y="1089" width="30" height="26" rx="3" fill="#ffff00"/>
<path d="M41.7,1119 V1069.5 Q41.7,1065.5 45.7,1065.5 H167.9 Q171.9,1065.5 171.9,1069.5 V1119 Z" fill="url(#gtile)"/>
<rect x="46.400000000000006" y="1071.1" width="120.79999999999998" height="30.8" rx="3" fill="#c1c1a3"/>
<text x="106.8" y="1114.5" font-size="10" fill="#2a2a2a" text-anchor="middle" font-weight="bold">20%</text>
<path d="M174.4,1119 V1069.5 Q174.4,1065.5 178.4,1065.5 H299.7 Q303.7,1065.5 303.7,1069.5 V1119 Z" fill="url(#gtile)"/>
<rect x="179.1" y="1071.1" width="119.89999999999998" height="30.8" rx="3" fill="#c3c286"/>
<text x="239.1" y="1114.5" font-size="10" fill="#2a2a2a" text-anchor="middle" font-weight="bold">40%</text>
<path d="M306.3,1119 V1069.5 Q306.3,1065.5 310.3,1065.5 H432 Q436,1065.5 436,1069.5 V1119 Z" fill="url(#gtile)"/>
<rect x="311.0" y="1071.1" width="120.29999999999998" height="30.8" rx="3" fill="#c3c16b"/>
<text x="371.1" y="1114.5" font-size="10" fill="#2a2a2a" text-anchor="middle" font-weight="bold">60%</text>
<path d="M438.7,1119 V1069.5 Q438.7,1065.5 442.7,1065.5 H564 Q568,1065.5 568,1069.5 V1119 Z" fill="url(#gtile)"/>
<rect x="443.4" y="1071.1" width="119.9" height="30.8" rx="3" fill="#c2be4b"/>
<text x="503.4" y="1114.5" font-size="10" fill="#2a2a2a" text-anchor="middle" font-weight="bold">80%</text>
<path d="M570.7,1119 V1069.5 Q570.7,1065.5 574.7,1065.5 H696.4 Q700.4,1065.5 700.4,1069.5 V1119 Z" fill="url(#gtsel)"/>
<rect x="575.4000000000001" y="1071.1" width="120.29999999999993" height="30.8" rx="3" fill="#c6c400"/>
<text x="635.5" y="1114.5" font-size="10" fill="#f4f4f4" text-anchor="middle" font-weight="bold">100%</text>
<rect x="0.00" y="1119.00" width="1920.00" height="2.00" fill="#3a4030"/>
<path d="M1642,1119 V1087 Q1642,1083 1646,1083 H1679 Q1683,1083 1683,1087 V1119 Z" fill="url(#gbtn1)"/>
<path d="M1684.5,1092 V1069.5 Q1684.5,1065.8 1688.5,1065.8 H1920 V1092 Z" fill="url(#gbtn1)"/>
<path d="M1684.5,1119.7 V1096.5 Q1684.5,1092.6 1688.5,1092.6 H1920 V1119.7 Z" fill="url(#gbtn2)"/>
<line x1="1724.20" y1="1066.00" x2="1724.20" y2="1092.00" stroke="#3a3a3a" stroke-width="1"/>
<line x1="1763.20" y1="1066.00" x2="1763.20" y2="1092.00" stroke="#3a3a3a" stroke-width="1"/>
<line x1="1803.30" y1="1066.00" x2="1803.30" y2="1092.00" stroke="#3a3a3a" stroke-width="1"/>
<line x1="1842.40" y1="1066.00" x2="1842.40" y2="1092.00" stroke="#3a3a3a" stroke-width="1"/>
<line x1="1881.50" y1="1066.00" x2="1881.50" y2="1092.00" stroke="#3a3a3a" stroke-width="1"/>
<circle cx="1704.5" cy="1081" r="8" fill="url(#gcirc)"/>
<circle cx="1743.7" cy="1081" r="8" fill="url(#gcirc)"/>
<circle cx="1783.2" cy="1081" r="8" fill="url(#gcirc)"/>
<circle cx="1822.8" cy="1081" r="8" fill="url(#gcirc)"/>
<circle cx="1862" cy="1081" r="8" fill="url(#gcirc)"/>
<circle cx="1900.7" cy="1081" r="8" fill="url(#gcirc)"/>
<line x1="1803.30" y1="1092.60" x2="1803.30" y2="1119.70" stroke="#3a3a3a" stroke-width="1"/>
<rect x="1651" y="1090.5" width="22" height="24" rx="3" fill="none" stroke="#1e1e1e" stroke-width="2.5"/>
<rect x="1657" y="1095" width="10" height="11" fill="#000"/>
<text x="1733.5" y="1112.9" font-size="19.6" fill="#2a2a2a" textLength="44.4" lengthAdjust="spacingAndGlyphs">Back</text>
<text x="1825.9" y="1112.9" font-size="19.6" fill="#2a2a2a" textLength="46.4" lengthAdjust="spacingAndGlyphs">Next</text>
<circle cx="1711.5" cy="1106" r="8.5" fill="#9a9a9a"/><path d="M1713,1101.5 L1709,1106 L1713,1110.5 M1717,1101.5 L1713,1106 L1717,1110.5" fill="none" stroke="#333" stroke-width="1.3"/>
<circle cx="1896.4" cy="1106" r="8.5" fill="#9a9a9a"/><path d="M1891.5,1101.5 L1895.5,1106 L1891.5,1110.5 M1895.5,1101.5 L1899.5,1106 L1895.5,1110.5" fill="none" stroke="#333" stroke-width="1.3"/>
<g fill="none" stroke-linejoin="miter"><path d="M1584.2,1049.2 L1628.3,1059.2 L1630.4,1085.4 L1595.8,1088 M1586.7,1093.3 L1584.2,1049.2 M1586.7,1093.3 L1614.2,1105.8 L1662.5,1090.8 L1635,1085.8" stroke="#d8d8d8" stroke-opacity="0.55" stroke-width="5"/><path d="M1584.2,1049.2 L1628.3,1059.2 L1630.4,1085.4 L1595.8,1088 M1586.7,1093.3 L1584.2,1049.2 M1586.7,1093.3 L1614.2,1105.8 L1662.5,1090.8 L1635,1085.8" stroke="#8a2a30" stroke-opacity="0.9" stroke-width="3.2"/><path d="M1597.5,1065 Q1602,1062 1606,1066 L1610.8,1081.7 L1635,1048.3" stroke="#d8d8d8" stroke-opacity="0.6" stroke-width="5.5"/><path d="M1597.5,1065 Q1602,1062 1606,1066 L1610.8,1081.7 L1635,1048.3" stroke="#303030" stroke-width="3.4"/></g>
<text x="1633.8" y="1082.7" font-size="31.5" fill="none" textLength="175.1" lengthAdjust="spacingAndGlyphs" font-weight="bold" stroke="#e0e0e0" stroke-opacity="0.55" stroke-width="3.2">NOTEBOOK</text>
<text x="1633.8" y="1082.7" font-size="31.5" fill="#9a2830" textLength="175.1" lengthAdjust="spacingAndGlyphs" font-weight="bold" opacity="0.72" stroke="#9a2830" stroke-width="1.5">NOTEBOOK</text>
<text x="1808.4" y="1082.7" font-size="31.5" fill="none" textLength="102.5" lengthAdjust="spacingAndGlyphs" font-weight="bold" stroke="#e0e0e0" stroke-opacity="0.7" stroke-width="3">CHECK</text>
<text x="1808.4" y="1082.7" font-size="31.5" fill="none" textLength="102.5" lengthAdjust="spacingAndGlyphs" font-weight="bold" stroke="#262626" stroke-width="2">CHECK</text></svg></body></html>
